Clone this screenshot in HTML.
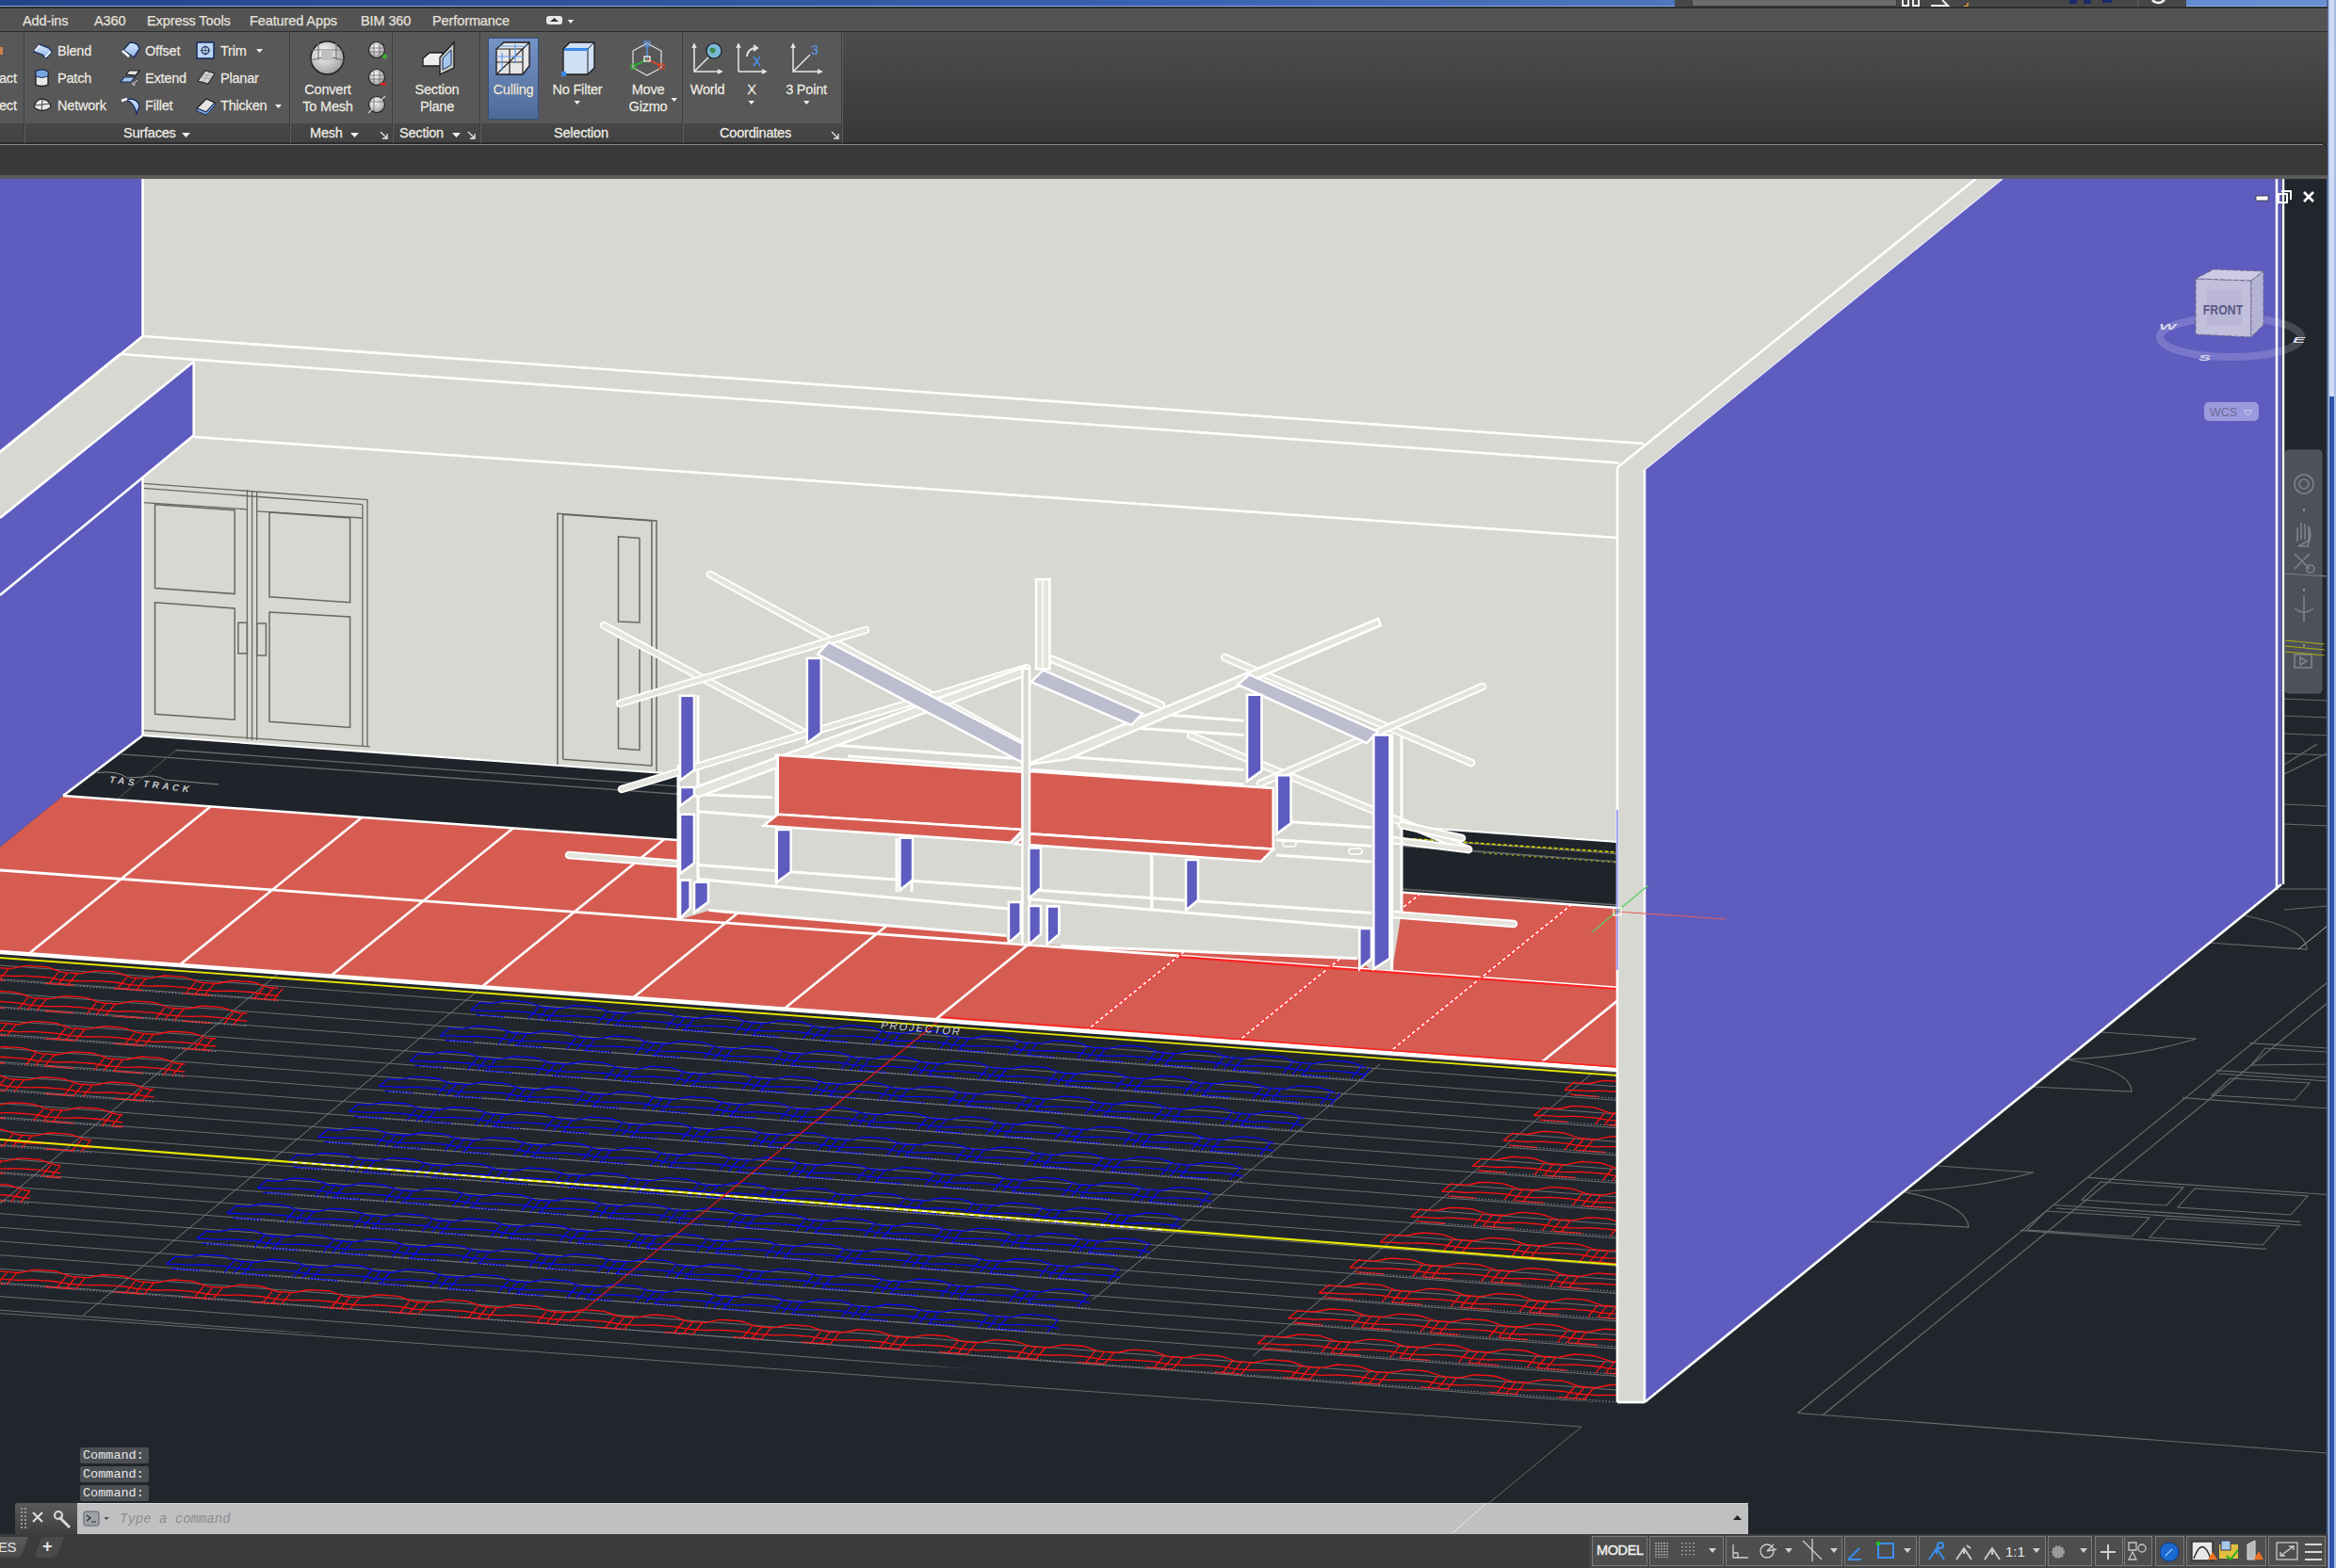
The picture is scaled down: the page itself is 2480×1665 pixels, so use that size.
<!DOCTYPE html>
<html><head><meta charset="utf-8">
<style>
*{margin:0;padding:0;box-sizing:border-box}
html,body{width:2480px;height:1665px;overflow:hidden;background:#21262d;font-family:"Liberation Sans",sans-serif}
.a{position:absolute}
#scene{position:absolute;left:0;top:0}
.mt{position:absolute;top:14px;font-size:14.5px;color:#e6e2da;white-space:nowrap;letter-spacing:-0.1px;-webkit-text-stroke:0.25px #e6e2da}
.rt{position:absolute;font-size:14.5px;color:#f0ede6;white-space:nowrap;letter-spacing:-0.2px;line-height:17px;-webkit-text-stroke:0.3px #f0ede6;text-shadow:0 0 1px #222}
.pt{position:absolute;top:133px;font-size:14.5px;color:#f0ede6;white-space:nowrap;letter-spacing:-0.2px;-webkit-text-stroke:0.3px #f0ede6;text-shadow:0 0 1px #222}
.ctr{text-align:center}
.sep{position:absolute;top:34px;width:2px;height:118px;background:#3e3e3e;border-right:1px solid #5c5c5c}
</style></head><body>
<!--SCENE-->
<svg id="scene" width="2480" height="1665" viewBox="0 0 2480 1665">
<defs>
<clipPath id="cpRed"><polygon points="67,845 1717,964 1717,1136 0,1011 0,899.5"/></clipPath>
<clipPath id="cpFloor"><polygon points="0,1011 1717,1136 1717,1489 1746,1489 2471,895 2471,1629 0,1629"/></clipPath>
<clipPath id="cpHall"><polygon points="0,1011 1717,1136 1717,1490 0,1398"/></clipPath>
<clipPath id="cpVP"><rect x="0" y="190" width="2471" height="1439"/></clipPath>
</defs>
<g clip-path="url(#cpVP)">
<rect x="0" y="190" width="2471" height="1440" fill="#21262d"/>
<g clip-path="url(#cpHall)">
<line x1="0.0" y1="995.7" x2="1717.0" y2="1124.5" stroke="#6e6e6e" stroke-width="1.00" />
<line x1="0.0" y1="1010.4" x2="1717.0" y2="1139.1" stroke="#6e6e6e" stroke-width="1.00" />
<line x1="0.0" y1="1025.0" x2="1717.0" y2="1153.8" stroke="#6e6e6e" stroke-width="1.00" />
<line x1="0.0" y1="1039.7" x2="1717.0" y2="1168.4" stroke="#6e6e6e" stroke-width="1.00" />
<line x1="0.0" y1="1054.3" x2="1717.0" y2="1183.1" stroke="#6e6e6e" stroke-width="1.00" />
<line x1="0.0" y1="1069.0" x2="1717.0" y2="1197.7" stroke="#6e6e6e" stroke-width="1.00" />
<line x1="0.0" y1="1083.6" x2="1717.0" y2="1212.4" stroke="#6e6e6e" stroke-width="1.00" />
<line x1="0.0" y1="1098.2" x2="1717.0" y2="1227.0" stroke="#6e6e6e" stroke-width="1.00" />
<line x1="0.0" y1="1112.9" x2="1717.0" y2="1241.7" stroke="#6e6e6e" stroke-width="1.00" />
<line x1="0.0" y1="1127.5" x2="1717.0" y2="1256.3" stroke="#6e6e6e" stroke-width="1.00" />
<line x1="0.0" y1="1142.2" x2="1717.0" y2="1271.0" stroke="#6e6e6e" stroke-width="1.00" />
<line x1="0.0" y1="1156.8" x2="1717.0" y2="1285.6" stroke="#6e6e6e" stroke-width="1.00" />
<line x1="0.0" y1="1171.5" x2="1717.0" y2="1300.3" stroke="#6e6e6e" stroke-width="1.00" />
<line x1="0.0" y1="1186.2" x2="1717.0" y2="1314.9" stroke="#6e6e6e" stroke-width="1.00" />
<line x1="0.0" y1="1200.8" x2="1717.0" y2="1329.6" stroke="#6e6e6e" stroke-width="1.00" />
<line x1="0.0" y1="1215.5" x2="1717.0" y2="1344.2" stroke="#6e6e6e" stroke-width="1.00" />
<line x1="0.0" y1="1230.1" x2="1717.0" y2="1358.9" stroke="#6e6e6e" stroke-width="1.00" />
<line x1="0.0" y1="1244.8" x2="1717.0" y2="1373.5" stroke="#6e6e6e" stroke-width="1.00" />
<line x1="0.0" y1="1259.4" x2="1717.0" y2="1388.2" stroke="#6e6e6e" stroke-width="1.00" />
<line x1="0.0" y1="1274.0" x2="1717.0" y2="1402.8" stroke="#6e6e6e" stroke-width="1.00" />
<line x1="0.0" y1="1288.7" x2="1717.0" y2="1417.5" stroke="#6e6e6e" stroke-width="1.00" />
<line x1="0.0" y1="1303.3" x2="1717.0" y2="1432.1" stroke="#6e6e6e" stroke-width="1.00" />
<line x1="0.0" y1="1318.0" x2="1717.0" y2="1446.8" stroke="#6e6e6e" stroke-width="1.00" />
<line x1="0.0" y1="1332.7" x2="1717.0" y2="1461.4" stroke="#6e6e6e" stroke-width="1.00" />
<line x1="0.0" y1="1347.3" x2="1717.0" y2="1476.1" stroke="#6e6e6e" stroke-width="1.00" />
<line x1="0.0" y1="1362.0" x2="1717.0" y2="1490.7" stroke="#6e6e6e" stroke-width="1.00" />
<line x1="0.0" y1="1376.6" x2="1717.0" y2="1505.4" stroke="#6e6e6e" stroke-width="1.00" />
<line x1="0.0" y1="1391.2" x2="1717.0" y2="1520.0" stroke="#6e6e6e" stroke-width="1.00" />
<line x1="0.0" y1="1405.9" x2="1717.0" y2="1534.7" stroke="#6e6e6e" stroke-width="1.00" />
<line x1="0.0" y1="1420.5" x2="1717.0" y2="1549.3" stroke="#6e6e6e" stroke-width="1.00" />
<line x1="0.0" y1="1435.2" x2="1717.0" y2="1564.0" stroke="#6e6e6e" stroke-width="1.00" />
<line x1="0.0" y1="1449.8" x2="1717.0" y2="1578.6" stroke="#6e6e6e" stroke-width="1.00" />
<line x1="0.0" y1="1464.5" x2="1717.0" y2="1593.3" stroke="#6e6e6e" stroke-width="1.00" />
<line x1="0.0" y1="1479.2" x2="1717.0" y2="1607.9" stroke="#6e6e6e" stroke-width="1.00" />
<line x1="0.0" y1="1493.8" x2="1717.0" y2="1622.6" stroke="#6e6e6e" stroke-width="1.00" />
<line x1="0.0" y1="1508.5" x2="1717.0" y2="1637.2" stroke="#6e6e6e" stroke-width="1.00" />
<line x1="0.0" y1="1523.1" x2="1717.0" y2="1651.9" stroke="#6e6e6e" stroke-width="1.00" />
<line x1="0.0" y1="1537.8" x2="1717.0" y2="1666.5" stroke="#6e6e6e" stroke-width="1.00" />
<line x1="0.0" y1="1552.4" x2="1717.0" y2="1681.2" stroke="#6e6e6e" stroke-width="1.00" />
<line x1="0.0" y1="1567.1" x2="1717.0" y2="1695.8" stroke="#6e6e6e" stroke-width="1.00" />
<line x1="0.0" y1="1581.7" x2="1717.0" y2="1710.5" stroke="#6e6e6e" stroke-width="1.00" />
<line x1="0.0" y1="1596.3" x2="1717.0" y2="1725.1" stroke="#6e6e6e" stroke-width="1.00" />
<line x1="0.0" y1="1611.0" x2="1717.0" y2="1739.8" stroke="#6e6e6e" stroke-width="1.00" />
<line x1="0.0" y1="1625.7" x2="1717.0" y2="1754.4" stroke="#6e6e6e" stroke-width="1.00" />
<line x1="0.0" y1="1640.3" x2="1717.0" y2="1769.1" stroke="#6e6e6e" stroke-width="1.00" />
<line x1="0.0" y1="1655.0" x2="1717.0" y2="1783.7" stroke="#6e6e6e" stroke-width="1.00" />
<line x1="0.0" y1="1669.6" x2="1717.0" y2="1798.4" stroke="#6e6e6e" stroke-width="1.00" />
<line x1="0.0" y1="1684.2" x2="1717.0" y2="1813.0" stroke="#6e6e6e" stroke-width="1.00" />
<line x1="0.0" y1="1698.9" x2="1717.0" y2="1827.7" stroke="#6e6e6e" stroke-width="1.00" />
<line x1="0.0" y1="1713.6" x2="1717.0" y2="1842.3" stroke="#6e6e6e" stroke-width="1.00" />
<line x1="0.0" y1="1728.2" x2="1717.0" y2="1857.0" stroke="#6e6e6e" stroke-width="1.00" />
<line x1="0.0" y1="1742.8" x2="1717.0" y2="1871.6" stroke="#6e6e6e" stroke-width="1.00" />
<line x1="0.0" y1="1757.5" x2="1717.0" y2="1886.3" stroke="#6e6e6e" stroke-width="1.00" />
<line x1="0.0" y1="1772.2" x2="1717.0" y2="1900.9" stroke="#6e6e6e" stroke-width="1.00" />
<line x1="0.0" y1="1786.8" x2="1717.0" y2="1915.6" stroke="#6e6e6e" stroke-width="1.00" />
<line x1="0.0" y1="1801.5" x2="1717.0" y2="1930.2" stroke="#6e6e6e" stroke-width="1.00" />
<line x1="0.0" y1="1816.1" x2="1717.0" y2="1944.9" stroke="#6e6e6e" stroke-width="1.00" />
<line x1="0.0" y1="1830.8" x2="1717.0" y2="1959.5" stroke="#6e6e6e" stroke-width="1.00" />
<line x1="0.0" y1="1845.4" x2="1717.0" y2="1974.2" stroke="#6e6e6e" stroke-width="1.00" />
<line x1="0.0" y1="1860.1" x2="1717.0" y2="1988.8" stroke="#6e6e6e" stroke-width="1.00" />
<line x1="0.0" y1="1874.7" x2="1717.0" y2="2003.5" stroke="#6e6e6e" stroke-width="1.00" />
<line x1="0.0" y1="1889.3" x2="1717.0" y2="2018.1" stroke="#6e6e6e" stroke-width="1.00" />
<line x1="300.0" y1="1030.0" x2="0.0" y2="1278.0" stroke="#7a7a7a" stroke-width="1.00" />
<line x1="507.0" y1="1052.0" x2="88.0" y2="1397.0" stroke="#7a7a7a" stroke-width="1.00" />
<line x1="1465.0" y1="1130.0" x2="1160.0" y2="1380.0" stroke="#7a7a7a" stroke-width="1.00" />
<line x1="1690.0" y1="1140.0" x2="1330.0" y2="1440.0" stroke="#7a7a7a" stroke-width="1.00" />
<path d="M-20.0,1022.5 L-15.0,1024.2 L-10.0,1026.0 L-5.0,1027.3 L0.0,1027.7 L5.0,1028.1 L10.0,1028.4 L15.0,1027.9 L20.0,1026.9 L25.0,1025.9 L30.0,1025.4 L35.0,1025.8 L40.0,1026.1 L45.0,1026.5 L50.0,1026.8 L55.0,1028.6 L60.0,1030.3 L65.0,1032.1 L70.0,1032.8 L75.0,1033.2 L80.0,1033.5 L85.0,1033.8 L90.0,1032.8 L95.0,1031.8 L100.0,1030.8 L105.0,1030.9 L110.0,1031.2 L115.0,1031.6 L120.0,1031.9 L125.0,1032.9 L130.0,1034.6 L135.0,1036.4 L140.0,1037.9 L145.0,1038.3 L150.0,1038.6 L155.0,1039.0 L160.0,1038.6 L165.0,1037.6 L170.0,1036.6 L175.0,1036.0 L180.0,1036.3 L185.0,1036.7 L190.0,1037.1 L195.0,1037.4 L200.0,1039.0 L205.0,1040.7 L210.0,1042.5 L215.0,1043.4 L220.0,1043.7 L225.0,1044.1 L230.0,1044.5 L235.0,1043.5 L240.0,1042.5 L245.0,1041.5 L250.0,1041.4 L255.0,1041.8 L260.0,1042.2 L265.0,1042.5 L270.0,1043.3 L275.0,1045.1 L280.0,1046.8 L285.0,1048.5 L290.0,1048.8 L295.0,1049.2 L295.4,1049.2 M-31.0,1034.2 L-20.0,1033.0 L-15.0,1033.8 L-10.0,1034.6 L-5.0,1035.3 L0.0,1035.7 L5.0,1036.1 L10.0,1036.4 L15.0,1036.5 L20.0,1036.4 L25.0,1036.3 L30.0,1036.4 L35.0,1036.8 L40.0,1037.1 L45.0,1037.5 L50.0,1037.8 L55.0,1038.7 L60.0,1039.5 L65.0,1040.3 L70.0,1040.8 L75.0,1041.2 L80.0,1041.5 L85.0,1041.9 L90.0,1041.8 L95.0,1041.7 L100.0,1041.6 L105.0,1041.9 L110.0,1042.2 L115.0,1042.6 L120.0,1042.9 L125.0,1043.5 L130.0,1044.3 L135.0,1045.2 L140.0,1045.9 L145.0,1046.3 L150.0,1046.6 L155.0,1047.0 L160.0,1047.1 L165.0,1047.0 L170.0,1046.9 L175.0,1047.0 L180.0,1047.3 L185.0,1047.7 L190.0,1048.1 L195.0,1048.4 L200.0,1049.2 L205.0,1050.0 L210.0,1050.8 L215.0,1051.4 L220.0,1051.7 L225.0,1052.1 L230.0,1052.5 L235.0,1052.4 L240.0,1052.3 L245.0,1052.2 L250.0,1052.4 L255.0,1052.8 L260.0,1053.2 L265.0,1053.5 L270.0,1054.0 L275.0,1054.9 L280.0,1055.7 L285.0,1056.5 L290.0,1056.8 L295.0,1057.2 L295.4,1057.2 M-25.0,1038.9 L5.0,1041.1 M48.0,1044.2 L78.0,1046.4 M121.0,1049.5 L151.0,1051.7 M194.0,1054.8 L224.0,1057.0 M267.0,1060.2 L295.4,1062.2 M-31.0,1034.2 L-20.0,1025.2 M-21.4,1039.5 L-10.9,1027.0 M-11.4,1040.2 L-0.9,1027.7 M-1.4,1041.0 L9.1,1028.5 M51.4,1044.8 L61.9,1032.3 M61.4,1045.5 L71.9,1033.0 M71.4,1046.3 L81.9,1033.8 M124.2,1050.1 L134.7,1037.6 M134.2,1050.8 L144.7,1038.3 M144.2,1051.6 L154.7,1039.1 M197.0,1055.4 L207.5,1042.9 M207.0,1056.2 L217.5,1043.7 M217.0,1056.9 L227.5,1044.4 M269.8,1060.7 L280.3,1048.2 M279.8,1061.5 L290.3,1049.0 M289.8,1062.2 L300.3,1049.7" stroke="#ff1010" stroke-width="1.30" fill="none" stroke-linejoin="round"/>
<path d="M-20.0,1039.7 L295.4,1062.7" stroke="#8a8a9a" stroke-width="1.00" fill="none" stroke-dasharray="1.5 2"/>
<path d="M-20.0,1055.4 L-15.0,1054.4 L-10.0,1053.4 L-5.0,1052.4 L0.0,1052.5 L5.0,1052.9 L10.0,1053.2 L15.0,1053.6 L20.0,1054.6 L25.0,1056.3 L30.0,1058.1 L35.0,1059.6 L40.0,1059.9 L45.0,1060.3 L50.0,1060.6 L55.0,1060.3 L60.0,1059.3 L65.0,1058.2 L70.0,1057.6 L75.0,1058.0 L80.0,1058.3 L85.0,1058.7 L90.0,1059.1 L95.0,1060.7 L100.0,1062.4 L105.0,1064.1 L110.0,1065.0 L115.0,1065.4 L120.0,1065.7 L125.0,1066.1 L130.0,1065.1 L135.0,1064.1 L140.0,1063.1 L145.0,1063.1 L150.0,1063.4 L155.0,1063.8 L160.0,1064.2 L165.0,1065.0 L170.0,1066.7 L175.0,1068.5 L180.0,1070.1 L185.0,1070.5 L190.0,1070.9 L195.0,1071.2 L200.0,1071.0 L205.0,1070.0 L210.0,1069.0 L215.0,1068.2 L220.0,1068.5 L225.0,1068.9 L230.0,1069.3 L235.0,1069.6 L240.0,1071.1 L245.0,1072.8 L250.0,1074.5 L255.0,1075.6 L260.0,1076.0 L262.4,1076.1 M-31.0,1063.5 L-20.0,1063.5 L-15.0,1063.4 L-10.0,1063.3 L-5.0,1063.2 L0.0,1063.5 L5.0,1063.9 L10.0,1064.2 L15.0,1064.6 L20.0,1065.2 L25.0,1066.0 L30.0,1066.8 L35.0,1067.6 L40.0,1067.9 L45.0,1068.3 L50.0,1068.6 L55.0,1068.8 L60.0,1068.7 L65.0,1068.6 L70.0,1068.6 L75.0,1069.0 L80.0,1069.3 L85.0,1069.7 L90.0,1070.1 L95.0,1070.8 L100.0,1071.7 L105.0,1072.5 L110.0,1073.0 L115.0,1073.4 L120.0,1073.7 L125.0,1074.1 L130.0,1074.0 L135.0,1073.9 L140.0,1073.8 L145.0,1074.1 L150.0,1074.4 L155.0,1074.8 L160.0,1075.2 L165.0,1075.7 L170.0,1076.5 L175.0,1077.3 L180.0,1078.1 L185.0,1078.5 L190.0,1078.9 L195.0,1079.2 L200.0,1079.4 L205.0,1079.3 L210.0,1079.2 L215.0,1079.2 L220.0,1079.5 L225.0,1079.9 L230.0,1080.3 L235.0,1080.6 L240.0,1081.4 L245.0,1082.2 L250.0,1083.0 L255.0,1083.6 L260.0,1084.0 L262.4,1084.1 M-25.0,1068.2 L5.0,1070.4 M48.0,1073.5 L78.0,1075.7 M121.0,1078.8 L151.0,1081.0 M194.0,1084.1 L224.0,1086.3 M-31.0,1063.5 L-20.0,1054.5 M19.1,1071.8 L29.6,1059.3 M29.1,1072.5 L39.6,1060.0 M39.1,1073.2 L49.6,1060.7 M91.9,1077.1 L102.4,1064.6 M101.9,1077.8 L112.4,1065.3 M111.9,1078.5 L122.4,1066.0 M164.7,1082.4 L175.2,1069.9 M174.7,1083.1 L185.2,1070.6 M184.7,1083.8 L195.2,1071.3 M237.5,1087.7 L248.0,1075.2 M247.5,1088.4 L258.0,1075.9" stroke="#ff1010" stroke-width="1.30" fill="none" stroke-linejoin="round"/>
<path d="M-20.0,1069.0 L262.4,1089.6" stroke="#8a8a9a" stroke-width="1.00" fill="none" stroke-dasharray="1.5 2"/>
<path d="M-20.0,1080.3 L-15.0,1080.7 L-10.0,1082.3 L-5.0,1084.1 L0.0,1085.8 L5.0,1086.7 L10.0,1087.0 L15.0,1087.4 L20.0,1087.8 L25.0,1086.7 L30.0,1085.7 L35.0,1084.7 L40.0,1084.7 L45.0,1085.1 L50.0,1085.4 L55.0,1085.8 L60.0,1086.7 L65.0,1088.4 L70.0,1090.1 L75.0,1091.8 L80.0,1092.1 L85.0,1092.5 L90.0,1092.9 L95.0,1092.6 L100.0,1091.6 L105.0,1090.6 L110.0,1089.8 L115.0,1090.2 L120.0,1090.5 L125.0,1090.9 L130.0,1091.3 L135.0,1092.7 L140.0,1094.5 L145.0,1096.2 L150.0,1097.2 L155.0,1097.6 L160.0,1098.0 L165.0,1098.3 L170.0,1097.5 L175.0,1096.5 L180.0,1095.5 L185.0,1095.3 L190.0,1095.7 L195.0,1096.0 L200.0,1096.4 L205.0,1097.1 L210.0,1098.8 L215.0,1100.5 L220.0,1102.3 L225.0,1102.7 L229.4,1103.0 M-31.0,1092.8 L-20.0,1091.3 L-15.0,1091.7 L-10.0,1092.5 L-5.0,1093.3 L0.0,1094.1 L5.0,1094.7 L10.0,1095.0 L15.0,1095.4 L20.0,1095.8 L25.0,1095.7 L30.0,1095.6 L35.0,1095.5 L40.0,1095.7 L45.0,1096.1 L50.0,1096.4 L55.0,1096.8 L60.0,1097.3 L65.0,1098.2 L70.0,1099.0 L75.0,1099.8 L80.0,1100.1 L85.0,1100.5 L90.0,1100.9 L95.0,1101.0 L100.0,1100.9 L105.0,1100.8 L110.0,1100.8 L115.0,1101.2 L120.0,1101.5 L125.0,1101.9 L130.0,1102.3 L135.0,1103.0 L140.0,1103.8 L145.0,1104.7 L150.0,1105.2 L155.0,1105.6 L160.0,1106.0 L165.0,1106.3 L170.0,1106.3 L175.0,1106.2 L180.0,1106.1 L185.0,1106.3 L190.0,1106.7 L195.0,1107.0 L200.0,1107.4 L205.0,1107.9 L210.0,1108.7 L215.0,1109.5 L220.0,1110.3 L225.0,1110.7 L229.4,1111.0 M-25.0,1097.5 L5.0,1099.7 M48.0,1102.8 L78.0,1105.0 M121.0,1108.1 L151.0,1110.3 M194.0,1113.4 L224.0,1115.6 M-31.0,1092.8 L-20.0,1083.8 M-13.2,1098.7 L-2.7,1086.2 M-3.2,1099.4 L7.3,1086.9 M6.8,1100.2 L17.3,1087.7 M59.6,1104.0 L70.1,1091.5 M69.6,1104.7 L80.1,1092.2 M79.6,1105.5 L90.1,1093.0 M132.4,1109.3 L142.9,1096.8 M142.4,1110.0 L152.9,1097.5 M152.4,1110.8 L162.9,1098.3 M205.2,1114.6 L215.7,1102.1 M215.2,1115.4 L225.7,1102.9" stroke="#ff1010" stroke-width="1.30" fill="none" stroke-linejoin="round"/>
<path d="M-20.0,1098.3 L229.4,1116.5" stroke="#8a8a9a" stroke-width="1.00" fill="none" stroke-dasharray="1.5 2"/>
<path d="M-20.0,1114.1 L-15.0,1114.5 L-10.0,1114.2 L-5.0,1113.2 L0.0,1112.2 L5.0,1111.5 L10.0,1111.8 L15.0,1112.2 L20.0,1112.6 L25.0,1112.9 L30.0,1114.4 L35.0,1116.1 L40.0,1117.9 L45.0,1118.9 L50.0,1119.2 L55.0,1119.6 L60.0,1120.0 L65.0,1119.1 L70.0,1118.1 L75.0,1117.1 L80.0,1116.9 L85.0,1117.3 L90.0,1117.7 L95.0,1118.0 L100.0,1118.7 L105.0,1120.5 L110.0,1122.2 L115.0,1124.0 L120.0,1124.3 L125.0,1124.7 L130.0,1125.1 L135.0,1125.0 L140.0,1124.0 L145.0,1123.0 L150.0,1122.0 L155.0,1122.4 L160.0,1122.8 L165.0,1123.1 L170.0,1123.5 L175.0,1124.8 L180.0,1126.6 L185.0,1128.3 L190.0,1129.5 L195.0,1129.8 L196.4,1129.9 M-31.0,1122.1 L-20.0,1122.1 L-15.0,1122.5 L-10.0,1122.7 L-5.0,1122.6 L0.0,1122.5 L5.0,1122.5 L10.0,1122.8 L15.0,1123.2 L20.0,1123.6 L25.0,1123.9 L30.0,1124.7 L35.0,1125.5 L40.0,1126.3 L45.0,1126.9 L50.0,1127.2 L55.0,1127.6 L60.0,1128.0 L65.0,1127.9 L70.0,1127.8 L75.0,1127.7 L80.0,1127.9 L85.0,1128.3 L90.0,1128.7 L95.0,1129.0 L100.0,1129.5 L105.0,1130.3 L110.0,1131.2 L115.0,1132.0 L120.0,1132.3 L125.0,1132.7 L130.0,1133.1 L135.0,1133.3 L140.0,1133.2 L145.0,1133.1 L150.0,1133.0 L155.0,1133.4 L160.0,1133.8 L165.0,1134.1 L170.0,1134.5 L175.0,1135.2 L180.0,1136.0 L185.0,1136.8 L190.0,1137.5 L195.0,1137.8 L196.4,1137.9 M-25.0,1126.8 L5.0,1129.0 M48.0,1132.1 L78.0,1134.3 M121.0,1137.4 L151.0,1139.6 M194.0,1142.7 L196.4,1142.9 M-31.0,1122.1 L-20.0,1113.1 M27.3,1131.0 L37.8,1118.5 M37.3,1131.7 L47.8,1119.2 M47.3,1132.4 L57.8,1119.9 M100.1,1136.3 L110.6,1123.8 M110.1,1137.0 L120.6,1124.5 M120.1,1137.7 L130.6,1125.2 M172.9,1141.6 L183.4,1129.1 M182.9,1142.3 L193.4,1129.8" stroke="#ff1010" stroke-width="1.30" fill="none" stroke-linejoin="round"/>
<path d="M-20.0,1127.6 L196.4,1143.4" stroke="#8a8a9a" stroke-width="1.00" fill="none" stroke-dasharray="1.5 2"/>
<path d="M-20.0,1138.9 L-15.0,1139.3 L-10.0,1139.7 L-5.0,1140.4 L0.0,1142.2 L5.0,1143.9 L10.0,1145.6 L15.0,1146.0 L20.0,1146.4 L25.0,1146.7 L30.0,1146.6 L35.0,1145.6 L40.0,1144.6 L45.0,1143.7 L50.0,1144.0 L55.0,1144.4 L60.0,1144.8 L65.0,1145.1 L70.0,1146.5 L75.0,1148.2 L80.0,1150.0 L85.0,1151.1 L90.0,1151.5 L95.0,1151.8 L100.0,1152.2 L105.0,1151.5 L110.0,1150.4 L115.0,1149.4 L120.0,1149.1 L125.0,1149.5 L130.0,1149.9 L135.0,1150.2 L140.0,1150.8 L145.0,1152.6 L150.0,1154.3 L155.0,1156.0 L160.0,1156.6 L163.4,1156.8 M-31.0,1151.4 L-20.0,1149.9 L-15.0,1150.3 L-10.0,1150.7 L-5.0,1151.2 L0.0,1152.0 L5.0,1152.8 L10.0,1153.6 L15.0,1154.0 L20.0,1154.4 L25.0,1154.7 L30.0,1154.9 L35.0,1154.8 L40.0,1154.7 L45.0,1154.7 L50.0,1155.0 L55.0,1155.4 L60.0,1155.8 L65.0,1156.1 L70.0,1156.8 L75.0,1157.7 L80.0,1158.5 L85.0,1159.1 L90.0,1159.5 L95.0,1159.8 L100.0,1160.2 L105.0,1160.2 L110.0,1160.1 L115.0,1160.0 L120.0,1160.1 L125.0,1160.5 L130.0,1160.9 L135.0,1161.2 L140.0,1161.7 L145.0,1162.5 L150.0,1163.3 L155.0,1164.1 L160.0,1164.6 L163.4,1164.8 M-25.0,1156.1 L5.0,1158.3 M48.0,1161.4 L78.0,1163.6 M121.0,1166.7 L151.0,1168.9 M-31.0,1151.4 L-20.0,1142.4 M-5.0,1157.9 L5.5,1145.4 M5.0,1158.6 L15.5,1146.1 M15.0,1159.4 L25.5,1146.9 M67.8,1163.2 L78.3,1150.7 M77.8,1163.9 L88.3,1151.4 M87.8,1164.7 L98.3,1152.2 M140.6,1168.5 L151.1,1156.0 M150.6,1169.2 L161.1,1156.7" stroke="#ff1010" stroke-width="1.30" fill="none" stroke-linejoin="round"/>
<path d="M-20.0,1156.9 L163.4,1170.3" stroke="#8a8a9a" stroke-width="1.00" fill="none" stroke-dasharray="1.5 2"/>
<path d="M-20.0,1172.7 L-15.0,1173.1 L-10.0,1173.5 L-5.0,1173.8 L0.0,1173.1 L5.0,1172.1 L10.0,1171.1 L15.0,1170.8 L20.0,1171.2 L25.0,1171.5 L30.0,1171.9 L35.0,1172.5 L40.0,1174.2 L45.0,1176.0 L50.0,1177.7 L55.0,1178.2 L60.0,1178.6 L65.0,1178.9 L70.0,1178.9 L75.0,1177.9 L80.0,1176.9 L85.0,1175.9 L90.0,1176.3 L95.0,1176.6 L100.0,1177.0 L105.0,1177.4 L110.0,1178.6 L115.0,1180.3 L120.0,1182.0 L125.0,1183.3 L130.0,1183.7 L130.4,1183.7 M-31.0,1180.7 L-20.0,1180.7 L-15.0,1181.1 L-10.0,1181.5 L-5.0,1181.8 L0.0,1181.8 L5.0,1181.7 L10.0,1181.6 L15.0,1181.8 L20.0,1182.2 L25.0,1182.5 L30.0,1182.9 L35.0,1183.3 L40.0,1184.2 L45.0,1185.0 L50.0,1185.8 L55.0,1186.2 L60.0,1186.6 L65.0,1186.9 L70.0,1187.2 L75.0,1187.1 L80.0,1187.0 L85.0,1186.9 L90.0,1187.3 L95.0,1187.6 L100.0,1188.0 L105.0,1188.4 L110.0,1189.0 L115.0,1189.8 L120.0,1190.6 L125.0,1191.3 L130.0,1191.7 L130.4,1191.7 M-25.0,1185.4 L5.0,1187.6 M48.0,1190.7 L78.0,1192.9 M121.0,1196.0 L130.4,1196.7 M-31.0,1180.7 L-20.0,1171.7 M35.5,1190.2 L46.0,1177.7 M45.5,1190.9 L56.0,1178.4 M55.5,1191.6 L66.0,1179.1 M108.3,1195.5 L118.8,1183.0 M118.3,1196.2 L128.8,1183.7" stroke="#ff1010" stroke-width="1.30" fill="none" stroke-linejoin="round"/>
<path d="M-20.0,1186.2 L130.4,1197.2" stroke="#8a8a9a" stroke-width="1.00" fill="none" stroke-dasharray="1.5 2"/>
<path d="M-20.0,1197.5 L-15.0,1197.9 L-10.0,1198.3 L-5.0,1198.6 L0.0,1199.0 L5.0,1200.2 L10.0,1202.0 L15.0,1203.7 L20.0,1205.0 L25.0,1205.3 L30.0,1205.7 L35.0,1206.1 L40.0,1205.4 L45.0,1204.4 L50.0,1203.4 L55.0,1203.0 L60.0,1203.4 L65.0,1203.7 L70.0,1204.1 L75.0,1204.6 L80.0,1206.3 L85.0,1208.0 L90.0,1209.8 L95.0,1210.4 L97.4,1210.6 M-31.0,1210.0 L-20.0,1208.5 L-15.0,1208.9 L-10.0,1209.3 L-5.0,1209.6 L0.0,1210.0 L5.0,1210.7 L10.0,1211.5 L15.0,1212.3 L20.0,1213.0 L25.0,1213.3 L30.0,1213.7 L35.0,1214.1 L40.0,1214.1 L45.0,1214.0 L50.0,1213.9 L55.0,1214.0 L60.0,1214.4 L65.0,1214.7 L70.0,1215.1 L75.0,1215.5 L80.0,1216.3 L85.0,1217.1 L90.0,1218.0 L95.0,1218.4 L97.4,1218.6 M-25.0,1214.7 L5.0,1216.9 M48.0,1220.0 L78.0,1222.2 M-31.0,1210.0 L-20.0,1201.0 M3.2,1217.1 L13.7,1204.6 M13.2,1217.8 L23.7,1205.3 M23.2,1218.6 L33.7,1206.1 M76.0,1222.4 L86.5,1209.9 M86.0,1223.1 L96.5,1210.6" stroke="#ff1010" stroke-width="1.30" fill="none" stroke-linejoin="round"/>
<path d="M-20.0,1215.5 L97.4,1224.1" stroke="#8a8a9a" stroke-width="1.00" fill="none" stroke-dasharray="1.5 2"/>
<path d="M-20.0,1229.7 L-15.0,1231.5 L-10.0,1232.1 L-5.0,1232.4 L0.0,1232.8 L5.0,1232.9 L10.0,1231.9 L15.0,1230.9 L20.0,1229.9 L25.0,1230.1 L30.0,1230.5 L35.0,1230.9 L40.0,1231.2 L45.0,1232.3 L50.0,1234.1 L55.0,1235.8 L60.0,1237.2 L64.4,1237.5 M-31.0,1239.3 L-20.0,1238.8 L-15.0,1239.6 L-10.0,1240.1 L-5.0,1240.4 L0.0,1240.8 L5.0,1241.1 L10.0,1241.0 L15.0,1240.9 L20.0,1240.8 L25.0,1241.1 L30.0,1241.5 L35.0,1241.9 L40.0,1242.2 L45.0,1242.8 L50.0,1243.6 L55.0,1244.5 L60.0,1245.2 L64.4,1245.5 M-25.0,1244.0 L5.0,1246.2 M48.0,1249.3 L64.4,1250.5 M-31.0,1239.3 L-20.0,1230.3 M-19.1,1244.8 L-8.6,1232.3 M-9.1,1245.5 L1.4,1233.0 M43.7,1249.4 L54.2,1236.9 M53.7,1250.1 L64.2,1237.6" stroke="#ff1010" stroke-width="1.30" fill="none" stroke-linejoin="round"/>
<path d="M-20.0,1244.8 L64.4,1251.0" stroke="#8a8a9a" stroke-width="1.00" fill="none" stroke-dasharray="1.5 2"/>
<path d="M-20.0,1258.4 L-15.0,1257.4 L-10.0,1256.9 L-5.0,1257.2 L0.0,1257.6 L5.0,1258.0 L10.0,1258.3 L15.0,1260.1 L20.0,1261.8 L25.0,1263.5 L30.0,1264.3 L31.4,1264.4 M-31.0,1268.6 L-20.0,1267.9 L-15.0,1267.8 L-10.0,1267.9 L-5.0,1268.2 L0.0,1268.6 L5.0,1269.0 L10.0,1269.3 L15.0,1270.1 L20.0,1271.0 L25.0,1271.8 L30.0,1272.3 L31.4,1272.4 M-25.0,1273.3 L5.0,1275.5 M-31.0,1268.6 L-20.0,1259.6 M11.4,1276.3 L21.9,1263.8 M21.4,1277.0 L31.9,1264.5" stroke="#ff1010" stroke-width="1.30" fill="none" stroke-linejoin="round"/>
<path d="M-20.0,1274.1 L31.4,1277.9" stroke="#8a8a9a" stroke-width="1.00" fill="none" stroke-dasharray="1.5 2"/>
<path d="M510.4,1064.9 L515.4,1065.3 L520.4,1065.6 L525.4,1064.9 L530.4,1063.9 L535.4,1062.9 L540.4,1062.6 L545.4,1063.0 L550.4,1063.3 L555.4,1063.7 L560.4,1064.3 L565.4,1066.0 L570.4,1067.7 L575.4,1069.5 L580.4,1070.0 L585.4,1070.4 L590.4,1070.7 L595.4,1070.8 L600.4,1069.8 L605.4,1068.8 L610.4,1067.7 L615.4,1068.1 L620.4,1068.4 L625.4,1068.8 L630.4,1069.2 L635.4,1070.3 L640.4,1072.1 L645.4,1073.8 L650.4,1075.1 L655.4,1075.5 L660.4,1075.8 L665.4,1076.2 L670.4,1075.6 L675.4,1074.6 L680.4,1073.6 L685.4,1073.2 L690.4,1073.5 L695.4,1073.9 L700.4,1074.3 L705.4,1074.7 L710.4,1076.4 L715.4,1078.1 L720.4,1079.9 L725.4,1080.6 L730.4,1080.9 L735.4,1081.3 L740.4,1081.5 L745.4,1080.5 L750.4,1079.5 L755.4,1078.5 L760.4,1078.6 L765.4,1079.0 L770.4,1079.4 L775.4,1079.7 L780.4,1080.7 L785.4,1082.5 L790.4,1084.2 L795.4,1085.7 L800.4,1086.0 L805.4,1086.4 L810.4,1086.8 L815.4,1086.4 L820.4,1085.4 L825.4,1084.4 L830.4,1083.7 L835.4,1084.1 L840.4,1084.5 L845.4,1084.8 L850.4,1085.2 L855.4,1086.8 L860.4,1088.6 L865.4,1090.3 L870.4,1091.2 L875.4,1091.5 L880.4,1091.9 L885.4,1092.2 L890.4,1091.2 L895.4,1090.2 L900.4,1089.2 L905.4,1089.2 L910.4,1089.6 L915.4,1089.9 L920.4,1090.3 L925.4,1091.2 L930.4,1092.9 L935.4,1094.6 L940.4,1096.3 L945.4,1096.6 L950.4,1097.0 L955.4,1097.3 L960.4,1097.1 L965.4,1096.1 L970.4,1095.1 L975.4,1094.3 L980.4,1094.7 L985.4,1095.0 L990.4,1095.4 L995.4,1095.8 L1000.4,1097.2 L1005.4,1099.0 L1010.4,1100.7 L1015.4,1101.7 L1020.4,1102.1 L1025.4,1102.5 L1030.4,1102.8 L1035.4,1102.0 L1040.4,1101.0 L1045.4,1100.0 L1050.4,1099.8 L1055.4,1100.1 L1060.4,1100.5 L1065.4,1100.9 L1070.4,1101.6 L1075.4,1103.3 L1080.4,1105.0 L1085.4,1106.8 L1090.4,1107.2 L1095.4,1107.6 L1100.4,1107.9 L1105.4,1107.8 L1110.4,1106.8 L1115.4,1105.8 L1120.4,1104.9 L1125.4,1105.2 L1130.4,1105.6 L1135.4,1106.0 L1140.4,1106.3 L1145.4,1107.6 L1150.4,1109.4 L1155.4,1111.1 L1160.4,1112.3 L1165.4,1112.7 L1170.4,1113.0 L1175.4,1113.4 L1180.4,1112.7 L1185.4,1111.7 L1190.4,1110.7 L1195.4,1110.3 L1200.4,1110.7 L1205.4,1111.1 L1210.4,1111.4 L1215.4,1112.0 L1220.4,1113.7 L1225.4,1115.4 L1230.4,1117.2 L1235.4,1117.8 L1240.4,1118.1 L1245.4,1118.5 L1250.4,1118.6 L1255.4,1117.6 L1260.4,1116.6 L1265.4,1115.6 L1270.4,1115.8 L1275.4,1116.2 L1280.4,1116.5 L1285.4,1116.9 L1290.4,1118.0 L1295.4,1119.8 L1300.4,1121.5 L1305.4,1122.9 L1310.4,1123.2 L1315.4,1123.6 L1320.4,1124.0 L1325.4,1123.4 L1330.4,1122.4 L1335.4,1121.4 L1340.4,1120.9 L1345.4,1121.3 L1350.4,1121.6 L1355.4,1122.0 L1360.4,1122.4 L1365.4,1124.1 L1370.4,1125.8 L1375.4,1127.6 L1380.4,1128.3 L1385.4,1128.7 L1390.4,1129.1 L1395.4,1129.3 L1400.4,1128.3 L1405.4,1127.3 L1410.4,1126.3 L1415.4,1126.4 L1420.4,1126.7 L1425.4,1127.1 L1430.4,1127.5 L1435.4,1128.4 L1440.4,1130.2 L1445.4,1131.9 L1450.0,1133.4 M499.4,1072.9 L510.4,1072.9 L515.4,1073.3 L520.4,1073.6 L525.4,1073.6 L530.4,1073.5 L535.4,1073.4 L540.4,1073.6 L545.4,1074.0 L550.4,1074.3 L555.4,1074.7 L560.4,1075.1 L565.4,1075.9 L570.4,1076.8 L575.4,1077.6 L580.4,1078.0 L585.4,1078.4 L590.4,1078.7 L595.4,1079.0 L600.4,1078.9 L605.4,1078.8 L610.4,1078.7 L615.4,1079.1 L620.4,1079.4 L625.4,1079.8 L630.4,1080.2 L635.4,1080.8 L640.4,1081.6 L645.4,1082.4 L650.4,1083.1 L655.4,1083.5 L660.4,1083.8 L665.4,1084.2 L670.4,1084.3 L675.4,1084.2 L680.4,1084.1 L685.4,1084.2 L690.4,1084.5 L695.4,1084.9 L700.4,1085.3 L705.4,1085.6 L710.4,1086.5 L715.4,1087.3 L720.4,1088.1 L725.4,1088.6 L730.4,1088.9 L735.4,1089.3 L740.4,1089.6 L745.4,1089.5 L750.4,1089.4 L755.4,1089.3 L760.4,1089.6 L765.4,1090.0 L770.4,1090.4 L775.4,1090.7 L780.4,1091.3 L785.4,1092.1 L790.4,1093.0 L795.4,1093.7 L800.4,1094.0 L805.4,1094.4 L810.4,1094.8 L815.4,1094.9 L820.4,1094.8 L825.4,1094.7 L830.4,1094.7 L835.4,1095.1 L840.4,1095.5 L845.4,1095.8 L850.4,1096.2 L855.4,1097.0 L860.4,1097.8 L865.4,1098.6 L870.4,1099.2 L875.4,1099.5 L880.4,1099.9 L885.4,1100.2 L890.4,1100.2 L895.4,1100.1 L900.4,1100.0 L905.4,1100.2 L910.4,1100.6 L915.4,1100.9 L920.4,1101.3 L925.4,1101.8 L930.4,1102.6 L935.4,1103.5 L940.4,1104.3 L945.4,1104.6 L950.4,1105.0 L955.4,1105.3 L960.4,1105.5 L965.4,1105.4 L970.4,1105.3 L975.4,1105.3 L980.4,1105.7 L985.4,1106.0 L990.4,1106.4 L995.4,1106.8 L1000.4,1107.5 L1005.4,1108.3 L1010.4,1109.1 L1015.4,1109.7 L1020.4,1110.1 L1025.4,1110.5 L1030.4,1110.8 L1035.4,1110.8 L1040.4,1110.7 L1045.4,1110.6 L1050.4,1110.8 L1055.4,1111.1 L1060.4,1111.5 L1065.4,1111.9 L1070.4,1112.3 L1075.4,1113.2 L1080.4,1114.0 L1085.4,1114.8 L1090.4,1115.2 L1095.4,1115.6 L1100.4,1115.9 L1105.4,1116.1 L1110.4,1116.0 L1115.4,1116.0 L1120.4,1115.9 L1125.4,1116.2 L1130.4,1116.6 L1135.4,1117.0 L1140.4,1117.3 L1145.4,1118.0 L1150.4,1118.8 L1155.4,1119.7 L1160.4,1120.3 L1165.4,1120.7 L1170.4,1121.0 L1175.4,1121.4 L1180.4,1121.4 L1185.4,1121.3 L1190.4,1121.2 L1195.4,1121.3 L1200.4,1121.7 L1205.4,1122.1 L1210.4,1122.4 L1215.4,1122.9 L1220.4,1123.7 L1225.4,1124.5 L1230.4,1125.3 L1235.4,1125.8 L1240.4,1126.1 L1245.4,1126.5 L1250.4,1126.8 L1255.4,1126.7 L1260.4,1126.6 L1265.4,1126.5 L1270.4,1126.8 L1275.4,1127.2 L1280.4,1127.5 L1285.4,1127.9 L1290.4,1128.5 L1295.4,1129.3 L1300.4,1130.2 L1305.4,1130.9 L1310.4,1131.2 L1315.4,1131.6 L1320.4,1132.0 L1325.4,1132.0 L1330.4,1131.9 L1335.4,1131.8 L1340.4,1131.9 L1345.4,1132.3 L1350.4,1132.6 L1355.4,1133.0 L1360.4,1133.4 L1365.4,1134.2 L1370.4,1135.0 L1375.4,1135.8 L1380.4,1136.3 L1385.4,1136.7 L1390.4,1137.1 L1395.4,1137.4 L1400.4,1137.3 L1405.4,1137.2 L1410.4,1137.1 L1415.4,1137.4 L1420.4,1137.7 L1425.4,1138.1 L1430.4,1138.5 L1435.4,1139.0 L1440.4,1139.9 L1445.4,1140.7 L1450.0,1141.4 M505.4,1077.5 L535.4,1079.7 M578.4,1082.9 L608.4,1085.1 M651.4,1088.2 L681.4,1090.4 M724.4,1093.5 L754.4,1095.7 M797.4,1098.8 L827.4,1101.0 M870.4,1104.2 L900.4,1106.3 M943.4,1109.5 L973.4,1111.7 M1016.4,1114.8 L1046.4,1117.0 M1089.4,1120.1 L1119.4,1122.3 M1162.4,1125.4 L1192.4,1127.6 M1235.4,1130.8 L1265.4,1132.9 M1308.4,1136.1 L1338.4,1138.3 M1381.4,1141.4 L1411.4,1143.6 M499.4,1072.9 L510.4,1063.9 M561.0,1082.0 L571.5,1069.5 M571.0,1082.7 L581.5,1070.2 M581.0,1083.4 L591.5,1070.9 M633.8,1087.3 L644.3,1074.8 M643.8,1088.0 L654.3,1075.5 M653.8,1088.7 L664.3,1076.2 M706.6,1092.6 L717.1,1080.1 M716.6,1093.3 L727.1,1080.8 M726.6,1094.0 L737.1,1081.5 M779.4,1097.9 L789.9,1085.4 M789.4,1098.6 L799.9,1086.1 M799.4,1099.3 L809.9,1086.8 M852.2,1103.2 L862.7,1090.7 M862.2,1103.9 L872.7,1091.4 M872.2,1104.6 L882.7,1092.1 M925.0,1108.5 L935.5,1096.0 M935.0,1109.2 L945.5,1096.7 M945.0,1110.0 L955.5,1097.5 M997.8,1113.8 L1008.3,1101.3 M1007.8,1114.5 L1018.3,1102.0 M1017.8,1115.3 L1028.3,1102.8 M1070.6,1119.1 L1081.1,1106.6 M1080.6,1119.8 L1091.1,1107.3 M1090.6,1120.6 L1101.1,1108.1 M1143.4,1124.4 L1153.9,1111.9 M1153.4,1125.1 L1163.9,1112.6 M1163.4,1125.9 L1173.9,1113.4 M1216.2,1129.7 L1226.7,1117.2 M1226.2,1130.5 L1236.7,1118.0 M1236.2,1131.2 L1246.7,1118.7 M1289.0,1135.0 L1299.5,1122.5 M1299.0,1135.8 L1309.5,1123.3 M1309.0,1136.5 L1319.5,1124.0 M1361.8,1140.3 L1372.3,1127.8 M1371.8,1141.1 L1382.3,1128.6 M1381.8,1141.8 L1392.3,1129.3 M1434.6,1145.6 L1445.1,1133.1 M1444.6,1146.4 L1455.1,1133.9" stroke="#0808f0" stroke-width="1.30" fill="none" stroke-linejoin="round"/>
<path d="M510.4,1078.4 L1450.0,1146.9" stroke="#8a8a9a" stroke-width="1.00" fill="none" stroke-dasharray="1.5 2"/>
<path d="M478.1,1091.9 L483.1,1092.2 L488.1,1092.6 L493.1,1091.8 L498.1,1090.8 L503.1,1089.8 L508.1,1089.5 L513.1,1089.9 L518.1,1090.3 L523.1,1090.6 L528.1,1091.2 L533.1,1093.0 L538.1,1094.7 L543.1,1096.4 L548.1,1097.0 L553.1,1097.3 L558.1,1097.7 L563.1,1097.7 L568.1,1096.7 L573.1,1095.7 L578.1,1094.7 L583.1,1095.0 L588.1,1095.4 L593.1,1095.7 L598.1,1096.1 L603.1,1097.3 L608.1,1099.0 L613.1,1100.8 L618.1,1102.1 L623.1,1102.4 L628.1,1102.8 L633.1,1103.2 L638.1,1102.6 L643.1,1101.6 L648.1,1100.6 L653.1,1100.1 L658.1,1100.5 L663.1,1100.8 L668.1,1101.2 L673.1,1101.6 L678.1,1103.4 L683.1,1105.1 L688.1,1106.8 L693.1,1107.5 L698.1,1107.9 L703.1,1108.3 L708.1,1108.5 L713.1,1107.4 L718.1,1106.4 L723.1,1105.4 L728.1,1105.6 L733.1,1105.9 L738.1,1106.3 L743.1,1106.7 L748.1,1107.7 L753.1,1109.4 L758.1,1111.2 L763.1,1112.6 L768.1,1113.0 L773.1,1113.4 L778.1,1113.7 L783.1,1113.3 L788.1,1112.3 L793.1,1111.3 L798.1,1110.7 L803.1,1111.0 L808.1,1111.4 L813.1,1111.8 L818.1,1112.1 L823.1,1113.8 L828.1,1115.5 L833.1,1117.2 L838.1,1118.1 L843.1,1118.5 L848.1,1118.8 L853.1,1119.2 L858.1,1118.2 L863.1,1117.2 L868.1,1116.2 L873.1,1116.1 L878.1,1116.5 L883.1,1116.9 L888.1,1117.2 L893.1,1118.1 L898.1,1119.8 L903.1,1121.6 L908.1,1123.2 L913.1,1123.6 L918.1,1123.9 L923.1,1124.3 L928.1,1124.1 L933.1,1123.0 L938.1,1122.0 L943.1,1121.3 L948.1,1121.6 L953.1,1122.0 L958.1,1122.3 L963.1,1122.7 L968.1,1124.2 L973.1,1125.9 L978.1,1127.6 L983.1,1128.7 L988.1,1129.0 L993.1,1129.4 L998.1,1129.8 L1003.1,1128.9 L1008.1,1127.9 L1013.1,1126.9 L1018.1,1126.7 L1023.1,1127.1 L1028.1,1127.4 L1033.1,1127.8 L1038.1,1128.5 L1043.1,1130.2 L1048.1,1132.0 L1053.1,1133.7 L1058.1,1134.1 L1063.1,1134.5 L1068.1,1134.9 L1073.1,1134.8 L1078.1,1133.8 L1083.1,1132.8 L1088.1,1131.8 L1093.1,1132.2 L1098.1,1132.6 L1103.1,1132.9 L1108.1,1133.3 L1113.1,1134.6 L1118.1,1136.3 L1123.1,1138.0 L1128.1,1139.2 L1133.1,1139.6 L1138.1,1140.0 L1143.1,1140.3 L1148.1,1139.7 L1153.1,1138.6 L1158.1,1137.6 L1163.1,1137.3 L1168.1,1137.7 L1173.1,1138.0 L1178.1,1138.4 L1183.1,1138.9 L1188.1,1140.6 L1193.1,1142.4 L1198.1,1144.1 L1203.1,1144.7 L1208.1,1145.1 L1213.1,1145.4 L1218.1,1145.5 L1223.1,1144.5 L1228.1,1143.5 L1233.1,1142.5 L1238.1,1142.8 L1243.1,1143.1 L1248.1,1143.5 L1253.1,1143.9 L1258.1,1145.0 L1263.1,1146.7 L1268.1,1148.5 L1273.1,1149.8 L1278.1,1150.2 L1283.1,1150.5 L1288.1,1150.9 L1293.1,1150.4 L1298.1,1149.4 L1303.1,1148.4 L1308.1,1147.9 L1313.1,1148.2 L1318.1,1148.6 L1323.1,1149.0 L1328.1,1149.3 L1333.1,1151.1 L1338.1,1152.8 L1343.1,1154.5 L1348.1,1155.3 L1353.1,1155.6 L1358.1,1156.0 L1363.1,1156.3 L1368.1,1155.3 L1373.1,1154.2 L1378.1,1153.2 L1383.1,1153.3 L1388.1,1153.7 L1393.1,1154.1 L1398.1,1154.4 L1403.1,1155.4 L1408.1,1157.1 L1413.1,1158.9 L1417.4,1160.3 M467.1,1099.9 L478.1,1099.9 L483.1,1100.2 L488.1,1100.6 L493.1,1100.6 L498.1,1100.5 L503.1,1100.4 L508.1,1100.5 L513.1,1100.9 L518.1,1101.3 L523.1,1101.6 L528.1,1102.1 L533.1,1102.9 L538.1,1103.7 L543.1,1104.5 L548.1,1105.0 L553.1,1105.3 L558.1,1105.7 L563.1,1105.9 L568.1,1105.8 L573.1,1105.8 L578.1,1105.7 L583.1,1106.0 L588.1,1106.4 L593.1,1106.7 L598.1,1107.1 L603.1,1107.7 L608.1,1108.6 L613.1,1109.4 L618.1,1110.1 L623.1,1110.4 L628.1,1110.8 L633.1,1111.2 L638.1,1111.2 L643.1,1111.1 L648.1,1111.0 L653.1,1111.1 L658.1,1111.5 L663.1,1111.8 L668.1,1112.2 L673.1,1112.6 L678.1,1113.4 L683.1,1114.2 L688.1,1115.1 L693.1,1115.5 L698.1,1115.9 L703.1,1116.3 L708.1,1116.6 L713.1,1116.5 L718.1,1116.4 L723.1,1116.3 L728.1,1116.6 L733.1,1116.9 L738.1,1117.3 L743.1,1117.7 L748.1,1118.3 L753.1,1119.1 L758.1,1119.9 L763.1,1120.6 L768.1,1121.0 L773.1,1121.4 L778.1,1121.7 L783.1,1121.8 L788.1,1121.7 L793.1,1121.6 L798.1,1121.7 L803.1,1122.0 L808.1,1122.4 L813.1,1122.8 L818.1,1123.1 L823.1,1123.9 L828.1,1124.7 L833.1,1125.6 L838.1,1126.1 L843.1,1126.5 L848.1,1126.8 L853.1,1127.2 L858.1,1127.1 L863.1,1127.0 L868.1,1126.9 L873.1,1127.1 L878.1,1127.5 L883.1,1127.9 L888.1,1128.2 L893.1,1128.8 L898.1,1129.6 L903.1,1130.4 L908.1,1131.2 L913.1,1131.6 L918.1,1131.9 L923.1,1132.3 L928.1,1132.5 L933.1,1132.4 L938.1,1132.3 L943.1,1132.3 L948.1,1132.6 L953.1,1133.0 L958.1,1133.3 L963.1,1133.7 L968.1,1134.4 L973.1,1135.3 L978.1,1136.1 L983.1,1136.7 L988.1,1137.0 L993.1,1137.4 L998.1,1137.8 L1003.1,1137.7 L1008.1,1137.6 L1013.1,1137.5 L1018.1,1137.7 L1023.1,1138.1 L1028.1,1138.4 L1033.1,1138.8 L1038.1,1139.3 L1043.1,1140.1 L1048.1,1140.9 L1053.1,1141.8 L1058.1,1142.1 L1063.1,1142.5 L1068.1,1142.9 L1073.1,1143.1 L1078.1,1143.0 L1083.1,1142.9 L1088.1,1142.8 L1093.1,1143.2 L1098.1,1143.6 L1103.1,1143.9 L1108.1,1144.3 L1113.1,1145.0 L1118.1,1145.8 L1123.1,1146.6 L1128.1,1147.2 L1133.1,1147.6 L1138.1,1148.0 L1143.1,1148.3 L1148.1,1148.3 L1153.1,1148.3 L1158.1,1148.2 L1163.1,1148.3 L1168.1,1148.7 L1173.1,1149.0 L1178.1,1149.4 L1183.1,1149.8 L1188.1,1150.6 L1193.1,1151.4 L1198.1,1152.3 L1203.1,1152.7 L1208.1,1153.1 L1213.1,1153.4 L1218.1,1153.7 L1223.1,1153.6 L1228.1,1153.5 L1233.1,1153.4 L1238.1,1153.8 L1243.1,1154.1 L1248.1,1154.5 L1253.1,1154.9 L1258.1,1155.5 L1263.1,1156.3 L1268.1,1157.1 L1273.1,1157.8 L1278.1,1158.2 L1283.1,1158.5 L1288.1,1158.9 L1293.1,1159.0 L1298.1,1158.9 L1303.1,1158.8 L1308.1,1158.9 L1313.1,1159.2 L1318.1,1159.6 L1323.1,1160.0 L1328.1,1160.3 L1333.1,1161.1 L1338.1,1162.0 L1343.1,1162.8 L1348.1,1163.3 L1353.1,1163.6 L1358.1,1164.0 L1363.1,1164.3 L1368.1,1164.2 L1373.1,1164.1 L1378.1,1164.1 L1383.1,1164.3 L1388.1,1164.7 L1393.1,1165.1 L1398.1,1165.4 L1403.1,1166.0 L1408.1,1166.8 L1413.1,1167.6 L1417.4,1168.3 M473.1,1104.5 L503.1,1106.7 M546.1,1109.8 L576.1,1112.0 M619.1,1115.1 L649.1,1117.3 M692.1,1120.5 L722.1,1122.6 M765.1,1125.8 L795.1,1128.0 M838.1,1131.1 L868.1,1133.3 M911.1,1136.4 L941.1,1138.6 M984.1,1141.7 L1014.1,1143.9 M1057.1,1147.1 L1087.1,1149.2 M1130.1,1152.4 L1160.1,1154.6 M1203.1,1157.7 L1233.1,1159.9 M1276.1,1163.0 L1306.1,1165.2 M1349.1,1168.3 L1379.1,1170.5 M467.1,1099.9 L478.1,1090.9 M528.7,1108.9 L539.2,1096.4 M538.7,1109.6 L549.2,1097.1 M548.7,1110.4 L559.2,1097.9 M601.5,1114.2 L612.0,1101.7 M611.5,1114.9 L622.0,1102.4 M621.5,1115.7 L632.0,1103.2 M674.3,1119.5 L684.8,1107.0 M684.3,1120.2 L694.8,1107.7 M694.3,1121.0 L704.8,1108.5 M747.1,1124.8 L757.6,1112.3 M757.1,1125.6 L767.6,1113.1 M767.1,1126.3 L777.6,1113.8 M819.9,1130.1 L830.4,1117.6 M829.9,1130.9 L840.4,1118.4 M839.9,1131.6 L850.4,1119.1 M892.7,1135.4 L903.2,1122.9 M902.7,1136.2 L913.2,1123.7 M912.7,1136.9 L923.2,1124.4 M965.5,1140.7 L976.0,1128.2 M975.5,1141.5 L986.0,1129.0 M985.5,1142.2 L996.0,1129.7 M1038.3,1146.1 L1048.8,1133.6 M1048.3,1146.8 L1058.8,1134.3 M1058.3,1147.5 L1068.8,1135.0 M1111.1,1151.4 L1121.6,1138.9 M1121.1,1152.1 L1131.6,1139.6 M1131.1,1152.8 L1141.6,1140.3 M1183.9,1156.7 L1194.4,1144.2 M1193.9,1157.4 L1204.4,1144.9 M1203.9,1158.1 L1214.4,1145.6 M1256.7,1162.0 L1267.2,1149.5 M1266.7,1162.7 L1277.2,1150.2 M1276.7,1163.4 L1287.2,1150.9 M1329.5,1167.3 L1340.0,1154.8 M1339.5,1168.0 L1350.0,1155.5 M1349.5,1168.7 L1360.0,1156.2 M1402.3,1172.6 L1412.8,1160.1 M1412.3,1173.3 L1422.8,1160.8" stroke="#0808f0" stroke-width="1.30" fill="none" stroke-linejoin="round"/>
<path d="M478.1,1105.4 L1417.4,1173.8" stroke="#8a8a9a" stroke-width="1.00" fill="none" stroke-dasharray="1.5 2"/>
<path d="M445.8,1118.8 L450.8,1119.2 L455.8,1119.5 L460.8,1118.8 L465.8,1117.8 L470.8,1116.8 L475.8,1116.5 L480.8,1116.9 L485.8,1117.2 L490.8,1117.6 L495.8,1118.2 L500.8,1119.9 L505.8,1121.6 L510.8,1123.4 L515.8,1123.9 L520.8,1124.3 L525.8,1124.6 L530.8,1124.7 L535.8,1123.7 L540.8,1122.6 L545.8,1121.6 L550.8,1122.0 L555.8,1122.3 L560.8,1122.7 L565.8,1123.0 L570.8,1124.2 L575.8,1126.0 L580.8,1127.7 L585.8,1129.0 L590.8,1129.4 L595.8,1129.7 L600.8,1130.1 L605.8,1129.5 L610.8,1128.5 L615.8,1127.5 L620.8,1127.1 L625.8,1127.4 L630.8,1127.8 L635.8,1128.1 L640.8,1128.6 L645.8,1130.3 L650.8,1132.0 L655.8,1133.8 L660.8,1134.5 L665.8,1134.8 L670.8,1135.2 L675.8,1135.4 L680.8,1134.4 L685.8,1133.4 L690.8,1132.4 L695.8,1132.5 L700.8,1132.9 L705.8,1133.3 L710.8,1133.6 L715.8,1134.6 L720.8,1136.4 L725.8,1138.1 L730.8,1139.6 L735.8,1139.9 L740.8,1140.3 L745.8,1140.7 L750.8,1140.3 L755.8,1139.3 L760.8,1138.2 L765.8,1137.6 L770.8,1138.0 L775.8,1138.4 L780.8,1138.7 L785.8,1139.1 L790.8,1140.7 L795.8,1142.4 L800.8,1144.2 L805.8,1145.0 L810.8,1145.4 L815.8,1145.8 L820.8,1146.1 L825.8,1145.1 L830.8,1144.1 L835.8,1143.1 L840.8,1143.1 L845.8,1143.5 L850.8,1143.8 L855.8,1144.2 L860.8,1145.0 L865.8,1146.8 L870.8,1148.5 L875.8,1150.1 L880.8,1150.5 L885.8,1150.9 L890.8,1151.2 L895.8,1151.0 L900.8,1150.0 L905.8,1149.0 L910.8,1148.2 L915.8,1148.6 L920.8,1148.9 L925.8,1149.3 L930.8,1149.7 L935.8,1151.1 L940.8,1152.9 L945.8,1154.6 L950.8,1155.6 L955.8,1156.0 L960.8,1156.3 L965.8,1156.7 L970.8,1155.9 L975.8,1154.9 L980.8,1153.8 L985.8,1153.7 L990.8,1154.0 L995.8,1154.4 L1000.8,1154.8 L1005.8,1155.4 L1010.8,1157.2 L1015.8,1158.9 L1020.8,1160.7 L1025.8,1161.1 L1030.8,1161.4 L1035.8,1161.8 L1040.8,1161.7 L1045.8,1160.7 L1050.8,1159.7 L1055.8,1158.8 L1060.8,1159.1 L1065.8,1159.5 L1070.8,1159.9 L1075.8,1160.2 L1080.8,1161.5 L1085.8,1163.3 L1090.8,1165.0 L1095.8,1166.2 L1100.8,1166.5 L1105.8,1166.9 L1110.8,1167.3 L1115.8,1166.6 L1120.8,1165.6 L1125.8,1164.6 L1130.8,1164.2 L1135.8,1164.6 L1140.8,1165.0 L1145.8,1165.3 L1150.8,1165.9 L1155.8,1167.6 L1160.8,1169.3 L1165.8,1171.1 L1170.8,1171.7 L1175.8,1172.0 L1180.8,1172.4 L1185.8,1172.5 L1190.8,1171.5 L1195.8,1170.5 L1200.8,1169.4 L1205.8,1169.7 L1210.8,1170.1 L1215.8,1170.4 L1220.8,1170.8 L1225.8,1171.9 L1230.8,1173.7 L1235.8,1175.4 L1240.8,1176.8 L1245.8,1177.1 L1250.8,1177.5 L1255.8,1177.8 L1260.8,1177.3 L1265.8,1176.3 L1270.8,1175.3 L1275.8,1174.8 L1280.8,1175.2 L1285.8,1175.5 L1290.8,1175.9 L1295.8,1176.3 L1300.8,1178.0 L1305.8,1179.7 L1310.8,1181.5 L1315.8,1182.2 L1320.8,1182.6 L1325.8,1183.0 L1330.8,1183.2 L1335.8,1182.2 L1340.8,1181.2 L1345.8,1180.2 L1350.8,1180.3 L1355.8,1180.6 L1360.8,1181.0 L1365.8,1181.4 L1370.8,1182.3 L1375.8,1184.1 L1380.8,1185.8 L1384.8,1187.3 M434.8,1126.8 L445.8,1126.8 L450.8,1127.2 L455.8,1127.5 L460.8,1127.5 L465.8,1127.4 L470.8,1127.3 L475.8,1127.5 L480.8,1127.9 L485.8,1128.2 L490.8,1128.6 L495.8,1129.0 L500.8,1129.8 L505.8,1130.7 L510.8,1131.5 L515.8,1131.9 L520.8,1132.3 L525.8,1132.6 L530.8,1132.9 L535.8,1132.8 L540.8,1132.7 L545.8,1132.6 L550.8,1133.0 L555.8,1133.3 L560.8,1133.7 L565.8,1134.0 L570.8,1134.7 L575.8,1135.5 L580.8,1136.3 L585.8,1137.0 L590.8,1137.4 L595.8,1137.7 L600.8,1138.1 L605.8,1138.2 L610.8,1138.1 L615.8,1138.0 L620.8,1138.1 L625.8,1138.4 L630.8,1138.8 L635.8,1139.1 L640.8,1139.5 L645.8,1140.4 L650.8,1141.2 L655.8,1142.0 L660.8,1142.5 L665.8,1142.8 L670.8,1143.2 L675.8,1143.5 L680.8,1143.4 L685.8,1143.3 L690.8,1143.2 L695.8,1143.5 L700.8,1143.9 L705.8,1144.3 L710.8,1144.6 L715.8,1145.2 L720.8,1146.0 L725.8,1146.8 L730.8,1147.6 L735.8,1147.9 L740.8,1148.3 L745.8,1148.7 L750.8,1148.8 L755.8,1148.7 L760.8,1148.6 L765.8,1148.6 L770.8,1149.0 L775.8,1149.4 L780.8,1149.7 L785.8,1150.1 L790.8,1150.9 L795.8,1151.7 L800.8,1152.5 L805.8,1153.0 L810.8,1153.4 L815.8,1153.8 L820.8,1154.1 L825.8,1154.0 L830.8,1153.9 L835.8,1153.9 L840.8,1154.1 L845.8,1154.5 L850.8,1154.8 L855.8,1155.2 L860.8,1155.7 L865.8,1156.5 L870.8,1157.4 L875.8,1158.1 L880.8,1158.5 L885.8,1158.9 L890.8,1159.2 L895.8,1159.4 L900.8,1159.3 L905.8,1159.2 L910.8,1159.2 L915.8,1159.6 L920.8,1159.9 L925.8,1160.3 L930.8,1160.7 L935.8,1161.4 L940.8,1162.2 L945.8,1163.0 L950.8,1163.6 L955.8,1164.0 L960.8,1164.3 L965.8,1164.7 L970.8,1164.7 L975.8,1164.6 L980.8,1164.5 L985.8,1164.7 L990.8,1165.0 L995.8,1165.4 L1000.8,1165.8 L1005.8,1166.2 L1010.8,1167.1 L1015.8,1167.9 L1020.8,1168.7 L1025.8,1169.1 L1030.8,1169.4 L1035.8,1169.8 L1040.8,1170.0 L1045.8,1169.9 L1050.8,1169.8 L1055.8,1169.8 L1060.8,1170.1 L1065.8,1170.5 L1070.8,1170.9 L1075.8,1171.2 L1080.8,1171.9 L1085.8,1172.7 L1090.8,1173.5 L1095.8,1174.2 L1100.8,1174.5 L1105.8,1174.9 L1110.8,1175.3 L1115.8,1175.3 L1120.8,1175.2 L1125.8,1175.1 L1130.8,1175.2 L1135.8,1175.6 L1140.8,1176.0 L1145.8,1176.3 L1150.8,1176.7 L1155.8,1177.6 L1160.8,1178.4 L1165.8,1179.2 L1170.8,1179.7 L1175.8,1180.0 L1180.8,1180.4 L1185.8,1180.7 L1190.8,1180.6 L1195.8,1180.5 L1200.8,1180.4 L1205.8,1180.7 L1210.8,1181.1 L1215.8,1181.4 L1220.8,1181.8 L1225.8,1182.4 L1230.8,1183.2 L1235.8,1184.1 L1240.8,1184.8 L1245.8,1185.1 L1250.8,1185.5 L1255.8,1185.8 L1260.8,1185.9 L1265.8,1185.8 L1270.8,1185.7 L1275.8,1185.8 L1280.8,1186.2 L1285.8,1186.5 L1290.8,1186.9 L1295.8,1187.3 L1300.8,1188.1 L1305.8,1188.9 L1310.8,1189.7 L1315.8,1190.2 L1320.8,1190.6 L1325.8,1191.0 L1330.8,1191.3 L1335.8,1191.2 L1340.8,1191.1 L1345.8,1191.0 L1350.8,1191.3 L1355.8,1191.6 L1360.8,1192.0 L1365.8,1192.4 L1370.8,1192.9 L1375.8,1193.8 L1380.8,1194.6 L1384.8,1195.3 M440.8,1131.4 L470.8,1133.6 M513.8,1136.8 L543.8,1138.9 M586.8,1142.1 L616.8,1144.3 M659.8,1147.4 L689.8,1149.6 M732.8,1152.7 L762.8,1154.9 M805.8,1158.0 L835.8,1160.2 M878.8,1163.4 L908.8,1165.6 M951.8,1168.7 L981.8,1170.9 M1024.8,1174.0 L1054.8,1176.2 M1097.8,1179.3 L1127.8,1181.5 M1170.8,1184.7 L1200.8,1186.8 M1243.8,1190.0 L1273.8,1192.2 M1316.8,1195.3 L1346.8,1197.5 M434.8,1126.8 L445.8,1117.8 M496.4,1135.9 L506.9,1123.4 M506.4,1136.6 L516.9,1124.1 M516.4,1137.3 L526.9,1124.8 M569.2,1141.2 L579.7,1128.7 M579.2,1141.9 L589.7,1129.4 M589.2,1142.6 L599.7,1130.1 M642.0,1146.5 L652.5,1134.0 M652.0,1147.2 L662.5,1134.7 M662.0,1147.9 L672.5,1135.4 M714.8,1151.8 L725.3,1139.3 M724.8,1152.5 L735.3,1140.0 M734.8,1153.2 L745.3,1140.7 M787.6,1157.1 L798.1,1144.6 M797.6,1157.8 L808.1,1145.3 M807.6,1158.5 L818.1,1146.0 M860.4,1162.4 L870.9,1149.9 M870.4,1163.1 L880.9,1150.6 M880.4,1163.8 L890.9,1151.3 M933.2,1167.7 L943.7,1155.2 M943.2,1168.4 L953.7,1155.9 M953.2,1169.2 L963.7,1156.7 M1006.0,1173.0 L1016.5,1160.5 M1016.0,1173.7 L1026.5,1161.2 M1026.0,1174.5 L1036.5,1162.0 M1078.8,1178.3 L1089.3,1165.8 M1088.8,1179.0 L1099.3,1166.5 M1098.8,1179.8 L1109.3,1167.3 M1151.6,1183.6 L1162.1,1171.1 M1161.6,1184.3 L1172.1,1171.8 M1171.6,1185.1 L1182.1,1172.6 M1224.4,1188.9 L1234.9,1176.4 M1234.4,1189.7 L1244.9,1177.2 M1244.4,1190.4 L1254.9,1177.9 M1297.2,1194.2 L1307.7,1181.7 M1307.2,1195.0 L1317.7,1182.5 M1317.2,1195.7 L1327.7,1183.2 M1370.0,1199.5 L1380.5,1187.0" stroke="#0808f0" stroke-width="1.30" fill="none" stroke-linejoin="round"/>
<path d="M445.8,1132.3 L1384.8,1200.8" stroke="#8a8a9a" stroke-width="1.00" fill="none" stroke-dasharray="1.5 2"/>
<path d="M413.5,1145.7 L418.5,1146.1 L423.5,1146.5 L428.5,1145.7 L433.5,1144.7 L438.5,1143.7 L443.5,1143.4 L448.5,1143.8 L453.5,1144.2 L458.5,1144.5 L463.5,1145.1 L468.5,1146.8 L473.5,1148.6 L478.5,1150.3 L483.5,1150.8 L488.5,1151.2 L493.5,1151.6 L498.5,1151.6 L503.5,1150.6 L508.5,1149.6 L513.5,1148.6 L518.5,1148.9 L523.5,1149.3 L528.5,1149.6 L533.5,1150.0 L538.5,1151.2 L543.5,1152.9 L548.5,1154.7 L553.5,1156.0 L558.5,1156.3 L563.5,1156.7 L568.5,1157.0 L573.5,1156.5 L578.5,1155.5 L583.5,1154.5 L588.5,1154.0 L593.5,1154.4 L598.5,1154.7 L603.5,1155.1 L608.5,1155.5 L613.5,1157.2 L618.5,1159.0 L623.5,1160.7 L628.5,1161.4 L633.5,1161.8 L638.5,1162.1 L643.5,1162.3 L648.5,1161.3 L653.5,1160.3 L658.5,1159.3 L663.5,1159.5 L668.5,1159.8 L673.5,1160.2 L678.5,1160.6 L683.5,1161.6 L688.5,1163.3 L693.5,1165.1 L698.5,1166.5 L703.5,1166.9 L708.5,1167.2 L713.5,1167.6 L718.5,1167.2 L723.5,1166.2 L728.5,1165.2 L733.5,1164.6 L738.5,1164.9 L743.5,1165.3 L748.5,1165.7 L753.5,1166.0 L758.5,1167.7 L763.5,1169.4 L768.5,1171.1 L773.5,1172.0 L778.5,1172.4 L783.5,1172.7 L788.5,1173.1 L793.5,1172.1 L798.5,1171.1 L803.5,1170.1 L808.5,1170.0 L813.5,1170.4 L818.5,1170.8 L823.5,1171.1 L828.5,1172.0 L833.5,1173.7 L838.5,1175.5 L843.5,1177.1 L848.5,1177.5 L853.5,1177.8 L858.5,1178.2 L863.5,1177.9 L868.5,1176.9 L873.5,1175.9 L878.5,1175.1 L883.5,1175.5 L888.5,1175.9 L893.5,1176.2 L898.5,1176.6 L903.5,1178.1 L908.5,1179.8 L913.5,1181.5 L918.5,1182.6 L923.5,1182.9 L928.5,1183.3 L933.5,1183.7 L938.5,1182.8 L943.5,1181.8 L948.5,1180.8 L953.5,1180.6 L958.5,1181.0 L963.5,1181.3 L968.5,1181.7 L973.5,1182.4 L978.5,1184.1 L983.5,1185.9 L988.5,1187.6 L993.5,1188.0 L998.5,1188.4 L1003.5,1188.8 L1008.5,1188.7 L1013.5,1187.7 L1018.5,1186.7 L1023.5,1185.7 L1028.5,1186.1 L1033.5,1186.4 L1038.5,1186.8 L1043.5,1187.2 L1048.5,1188.5 L1053.5,1190.2 L1058.5,1191.9 L1063.5,1193.1 L1068.5,1193.5 L1073.5,1193.9 L1078.5,1194.2 L1083.5,1193.5 L1088.5,1192.5 L1093.5,1191.5 L1098.5,1191.2 L1103.5,1191.5 L1108.5,1191.9 L1113.5,1192.3 L1118.5,1192.8 L1123.5,1194.5 L1128.5,1196.3 L1133.5,1198.0 L1138.5,1198.6 L1143.5,1199.0 L1148.5,1199.3 L1153.5,1199.4 L1158.5,1198.4 L1163.5,1197.4 L1168.5,1196.4 L1173.5,1196.6 L1178.5,1197.0 L1183.5,1197.4 L1188.5,1197.7 L1193.5,1198.9 L1198.5,1200.6 L1203.5,1202.3 L1208.5,1203.7 L1213.5,1204.1 L1218.5,1204.4 L1223.5,1204.8 L1228.5,1204.3 L1233.5,1203.3 L1238.5,1202.3 L1243.5,1201.8 L1248.5,1202.1 L1253.5,1202.5 L1258.5,1202.8 L1263.5,1203.2 L1268.5,1204.9 L1273.5,1206.7 L1278.5,1208.4 L1283.5,1209.2 L1288.5,1209.5 L1293.5,1209.9 L1298.5,1210.2 L1303.5,1209.1 L1308.5,1208.1 L1313.5,1207.1 L1318.5,1207.2 L1323.5,1207.6 L1328.5,1207.9 L1333.5,1208.3 L1338.5,1209.3 L1343.5,1211.0 L1348.5,1212.8 L1352.2,1214.2 M402.5,1153.7 L413.5,1153.7 L418.5,1154.1 L423.5,1154.5 L428.5,1154.5 L433.5,1154.4 L438.5,1154.3 L443.5,1154.4 L448.5,1154.8 L453.5,1155.2 L458.5,1155.5 L463.5,1156.0 L468.5,1156.8 L473.5,1157.6 L478.5,1158.4 L483.5,1158.8 L488.5,1159.2 L493.5,1159.6 L498.5,1159.8 L503.5,1159.7 L508.5,1159.6 L513.5,1159.6 L518.5,1159.9 L523.5,1160.3 L528.5,1160.6 L533.5,1161.0 L538.5,1161.6 L543.5,1162.5 L548.5,1163.3 L553.5,1164.0 L558.5,1164.3 L563.5,1164.7 L568.5,1165.0 L573.5,1165.1 L578.5,1165.0 L583.5,1164.9 L588.5,1165.0 L593.5,1165.4 L598.5,1165.7 L603.5,1166.1 L608.5,1166.5 L613.5,1167.3 L618.5,1168.1 L623.5,1168.9 L628.5,1169.4 L633.5,1169.8 L638.5,1170.1 L643.5,1170.5 L648.5,1170.4 L653.5,1170.3 L658.5,1170.2 L663.5,1170.5 L668.5,1170.8 L673.5,1171.2 L678.5,1171.6 L683.5,1172.1 L688.5,1173.0 L693.5,1173.8 L698.5,1174.5 L703.5,1174.9 L708.5,1175.2 L713.5,1175.6 L718.5,1175.7 L723.5,1175.6 L728.5,1175.5 L733.5,1175.6 L738.5,1175.9 L743.5,1176.3 L748.5,1176.7 L753.5,1177.0 L758.5,1177.8 L763.5,1178.6 L768.5,1179.5 L773.5,1180.0 L778.5,1180.4 L783.5,1180.7 L788.5,1181.1 L793.5,1181.0 L798.5,1180.9 L803.5,1180.8 L808.5,1181.0 L813.5,1181.4 L818.5,1181.8 L823.5,1182.1 L828.5,1182.7 L833.5,1183.5 L838.5,1184.3 L843.5,1185.1 L848.5,1185.5 L853.5,1185.8 L858.5,1186.2 L863.5,1186.3 L868.5,1186.3 L873.5,1186.2 L878.5,1186.1 L883.5,1186.5 L888.5,1186.9 L893.5,1187.2 L898.5,1187.6 L903.5,1188.3 L908.5,1189.2 L913.5,1190.0 L918.5,1190.6 L923.5,1190.9 L928.5,1191.3 L933.5,1191.7 L938.5,1191.6 L943.5,1191.5 L948.5,1191.4 L953.5,1191.6 L958.5,1192.0 L963.5,1192.3 L968.5,1192.7 L973.5,1193.2 L978.5,1194.0 L983.5,1194.8 L988.5,1195.6 L993.5,1196.0 L998.5,1196.4 L1003.5,1196.8 L1008.5,1197.0 L1013.5,1196.9 L1018.5,1196.8 L1023.5,1196.7 L1028.5,1197.1 L1033.5,1197.4 L1038.5,1197.8 L1043.5,1198.2 L1048.5,1198.8 L1053.5,1199.7 L1058.5,1200.5 L1063.5,1201.1 L1068.5,1201.5 L1073.5,1201.9 L1078.5,1202.2 L1083.5,1202.2 L1088.5,1202.1 L1093.5,1202.1 L1098.5,1202.2 L1103.5,1202.5 L1108.5,1202.9 L1113.5,1203.3 L1118.5,1203.7 L1123.5,1204.5 L1128.5,1205.3 L1133.5,1206.2 L1138.5,1206.6 L1143.5,1207.0 L1148.5,1207.3 L1153.5,1207.6 L1158.5,1207.5 L1163.5,1207.4 L1168.5,1207.3 L1173.5,1207.6 L1178.5,1208.0 L1183.5,1208.4 L1188.5,1208.7 L1193.5,1209.4 L1198.5,1210.2 L1203.5,1211.0 L1208.5,1211.7 L1213.5,1212.1 L1218.5,1212.4 L1223.5,1212.8 L1228.5,1212.9 L1233.5,1212.8 L1238.5,1212.7 L1243.5,1212.8 L1248.5,1213.1 L1253.5,1213.5 L1258.5,1213.8 L1263.5,1214.2 L1268.5,1215.0 L1273.5,1215.9 L1278.5,1216.7 L1283.5,1217.2 L1288.5,1217.5 L1293.5,1217.9 L1298.5,1218.2 L1303.5,1218.1 L1308.5,1218.0 L1313.5,1217.9 L1318.5,1218.2 L1323.5,1218.6 L1328.5,1218.9 L1333.5,1219.3 L1338.5,1219.9 L1343.5,1220.7 L1348.5,1221.5 L1352.2,1222.2 M408.5,1158.4 L438.5,1160.6 M481.5,1163.7 L511.5,1165.9 M554.5,1169.0 L584.5,1171.2 M627.5,1174.3 L657.5,1176.5 M700.5,1179.7 L730.5,1181.9 M773.5,1185.0 L803.5,1187.2 M846.5,1190.3 L876.5,1192.5 M919.5,1195.6 L949.5,1197.8 M992.5,1201.0 L1022.5,1203.1 M1065.5,1206.3 L1095.5,1208.5 M1138.5,1211.6 L1168.5,1213.8 M1211.5,1216.9 L1241.5,1219.1 M1284.5,1222.2 L1314.5,1224.4 M402.5,1153.7 L413.5,1144.7 M464.1,1162.8 L474.6,1150.3 M474.1,1163.5 L484.6,1151.0 M484.1,1164.3 L494.6,1151.8 M536.9,1168.1 L547.4,1155.6 M546.9,1168.8 L557.4,1156.3 M556.9,1169.6 L567.4,1157.1 M609.7,1173.4 L620.2,1160.9 M619.7,1174.1 L630.2,1161.6 M629.7,1174.9 L640.2,1162.4 M682.5,1178.7 L693.0,1166.2 M692.5,1179.4 L703.0,1166.9 M702.5,1180.2 L713.0,1167.7 M755.3,1184.0 L765.8,1171.5 M765.3,1184.8 L775.8,1172.3 M775.3,1185.5 L785.8,1173.0 M828.1,1189.3 L838.6,1176.8 M838.1,1190.1 L848.6,1177.6 M848.1,1190.8 L858.6,1178.3 M900.9,1194.6 L911.4,1182.1 M910.9,1195.4 L921.4,1182.9 M920.9,1196.1 L931.4,1183.6 M973.7,1199.9 L984.2,1187.4 M983.7,1200.7 L994.2,1188.2 M993.7,1201.4 L1004.2,1188.9 M1046.5,1205.3 L1057.0,1192.8 M1056.5,1206.0 L1067.0,1193.5 M1066.5,1206.7 L1077.0,1194.2 M1119.3,1210.6 L1129.8,1198.1 M1129.3,1211.3 L1139.8,1198.8 M1139.3,1212.0 L1149.8,1199.5 M1192.1,1215.9 L1202.6,1203.4 M1202.1,1216.6 L1212.6,1204.1 M1212.1,1217.3 L1222.6,1204.8 M1264.9,1221.2 L1275.4,1208.7 M1274.9,1221.9 L1285.4,1209.4 M1284.9,1222.6 L1295.4,1210.1 M1337.7,1226.5 L1348.2,1214.0" stroke="#0808f0" stroke-width="1.30" fill="none" stroke-linejoin="round"/>
<path d="M413.5,1159.2 L1352.2,1227.7" stroke="#8a8a9a" stroke-width="1.00" fill="none" stroke-dasharray="1.5 2"/>
<path d="M381.2,1172.7 L386.2,1173.1 L391.2,1173.4 L396.2,1172.7 L401.2,1171.7 L406.2,1170.7 L411.2,1170.4 L416.2,1170.7 L421.2,1171.1 L426.2,1171.5 L431.2,1172.0 L436.2,1173.8 L441.2,1175.5 L446.2,1177.3 L451.2,1177.8 L456.2,1178.2 L461.2,1178.5 L466.2,1178.6 L471.2,1177.5 L476.2,1176.5 L481.2,1175.5 L486.2,1175.8 L491.2,1176.2 L496.2,1176.6 L501.2,1176.9 L506.2,1178.1 L511.2,1179.9 L516.2,1181.6 L521.2,1182.9 L526.2,1183.3 L531.2,1183.6 L536.2,1184.0 L541.2,1183.4 L546.2,1182.4 L551.2,1181.4 L556.2,1180.9 L561.2,1181.3 L566.2,1181.7 L571.2,1182.0 L576.2,1182.5 L581.2,1184.2 L586.2,1185.9 L591.2,1187.7 L596.2,1188.4 L601.2,1188.7 L606.2,1189.1 L611.2,1189.3 L616.2,1188.3 L621.2,1187.3 L626.2,1186.3 L631.2,1186.4 L636.2,1186.8 L641.2,1187.1 L646.2,1187.5 L651.2,1188.5 L656.2,1190.3 L661.2,1192.0 L666.2,1193.5 L671.2,1193.8 L676.2,1194.2 L681.2,1194.6 L686.2,1194.2 L691.2,1193.1 L696.2,1192.1 L701.2,1191.5 L706.2,1191.9 L711.2,1192.2 L716.2,1192.6 L721.2,1193.0 L726.2,1194.6 L731.2,1196.3 L736.2,1198.1 L741.2,1198.9 L746.2,1199.3 L751.2,1199.7 L756.2,1200.0 L761.2,1199.0 L766.2,1198.0 L771.2,1197.0 L776.2,1197.0 L781.2,1197.3 L786.2,1197.7 L791.2,1198.1 L796.2,1198.9 L801.2,1200.7 L806.2,1202.4 L811.2,1204.0 L816.2,1204.4 L821.2,1204.8 L826.2,1205.1 L831.2,1204.9 L836.2,1203.9 L841.2,1202.9 L846.2,1202.1 L851.2,1202.5 L856.2,1202.8 L861.2,1203.2 L866.2,1203.5 L871.2,1205.0 L876.2,1206.7 L881.2,1208.5 L886.2,1209.5 L891.2,1209.9 L896.2,1210.2 L901.2,1210.6 L906.2,1209.8 L911.2,1208.7 L916.2,1207.7 L921.2,1207.6 L926.2,1207.9 L931.2,1208.3 L936.2,1208.6 L941.2,1209.3 L946.2,1211.1 L951.2,1212.8 L956.2,1214.6 L961.2,1215.0 L966.2,1215.3 L971.2,1215.7 L976.2,1215.6 L981.2,1214.6 L986.2,1213.6 L991.2,1212.7 L996.2,1213.0 L1001.2,1213.4 L1006.2,1213.8 L1011.2,1214.1 L1016.2,1215.4 L1021.2,1217.1 L1026.2,1218.9 L1031.2,1220.1 L1036.2,1220.4 L1041.2,1220.8 L1046.2,1221.2 L1051.2,1220.5 L1056.2,1219.5 L1061.2,1218.5 L1066.2,1218.1 L1071.2,1218.5 L1076.2,1218.9 L1081.2,1219.2 L1086.2,1219.7 L1091.2,1221.5 L1096.2,1223.2 L1101.2,1225.0 L1106.2,1225.5 L1111.2,1225.9 L1116.2,1226.3 L1121.2,1226.4 L1126.2,1225.4 L1131.2,1224.3 L1136.2,1223.3 L1141.2,1223.6 L1146.2,1224.0 L1151.2,1224.3 L1156.2,1224.7 L1161.2,1225.8 L1166.2,1227.6 L1171.2,1229.3 L1176.2,1230.6 L1181.2,1231.0 L1186.2,1231.4 L1191.2,1231.7 L1196.2,1231.2 L1201.2,1230.2 L1206.2,1229.2 L1211.2,1228.7 L1216.2,1229.1 L1221.2,1229.4 L1226.2,1229.8 L1231.2,1230.2 L1236.2,1231.9 L1241.2,1233.6 L1246.2,1235.4 L1251.2,1236.1 L1256.2,1236.5 L1261.2,1236.8 L1266.2,1237.1 L1271.2,1236.1 L1276.2,1235.1 L1281.2,1234.1 L1286.2,1234.2 L1291.2,1234.5 L1296.2,1234.9 L1301.2,1235.3 L1306.2,1236.2 L1311.2,1238.0 L1316.2,1239.7 L1319.6,1241.1 M370.2,1180.7 L381.2,1180.7 L386.2,1181.1 L391.2,1181.4 L396.2,1181.4 L401.2,1181.3 L406.2,1181.2 L411.2,1181.4 L416.2,1181.7 L421.2,1182.1 L426.2,1182.5 L431.2,1182.9 L436.2,1183.7 L441.2,1184.6 L446.2,1185.4 L451.2,1185.8 L456.2,1186.2 L461.2,1186.5 L466.2,1186.8 L471.2,1186.7 L476.2,1186.6 L481.2,1186.5 L486.2,1186.8 L491.2,1187.2 L496.2,1187.6 L501.2,1187.9 L506.2,1188.6 L511.2,1189.4 L516.2,1190.2 L521.2,1190.9 L526.2,1191.3 L531.2,1191.6 L536.2,1192.0 L541.2,1192.0 L546.2,1191.9 L551.2,1191.9 L556.2,1191.9 L561.2,1192.3 L566.2,1192.7 L571.2,1193.0 L576.2,1193.4 L581.2,1194.2 L586.2,1195.1 L591.2,1195.9 L596.2,1196.4 L601.2,1196.7 L606.2,1197.1 L611.2,1197.4 L616.2,1197.3 L621.2,1197.2 L626.2,1197.1 L631.2,1197.4 L636.2,1197.8 L641.2,1198.1 L646.2,1198.5 L651.2,1199.1 L656.2,1199.9 L661.2,1200.7 L666.2,1201.5 L671.2,1201.8 L676.2,1202.2 L681.2,1202.6 L686.2,1202.7 L691.2,1202.6 L696.2,1202.5 L701.2,1202.5 L706.2,1202.9 L711.2,1203.2 L716.2,1203.6 L721.2,1204.0 L726.2,1204.8 L731.2,1205.6 L736.2,1206.4 L741.2,1206.9 L746.2,1207.3 L751.2,1207.7 L756.2,1208.0 L761.2,1207.9 L766.2,1207.8 L771.2,1207.7 L776.2,1208.0 L781.2,1208.3 L786.2,1208.7 L791.2,1209.1 L796.2,1209.6 L801.2,1210.4 L806.2,1211.3 L811.2,1212.0 L816.2,1212.4 L821.2,1212.8 L826.2,1213.1 L831.2,1213.3 L836.2,1213.2 L841.2,1213.1 L846.2,1213.1 L851.2,1213.5 L856.2,1213.8 L861.2,1214.2 L866.2,1214.5 L871.2,1215.3 L876.2,1216.1 L881.2,1216.9 L886.2,1217.5 L891.2,1217.9 L896.2,1218.2 L901.2,1218.6 L906.2,1218.6 L911.2,1218.5 L916.2,1218.4 L921.2,1218.6 L926.2,1218.9 L931.2,1219.3 L936.2,1219.6 L941.2,1220.1 L946.2,1220.9 L951.2,1221.8 L956.2,1222.6 L961.2,1223.0 L966.2,1223.3 L971.2,1223.7 L976.2,1223.9 L981.2,1223.8 L986.2,1223.7 L991.2,1223.7 L996.2,1224.0 L1001.2,1224.4 L1006.2,1224.8 L1011.2,1225.1 L1016.2,1225.8 L1021.2,1226.6 L1026.2,1227.4 L1031.2,1228.1 L1036.2,1228.4 L1041.2,1228.8 L1046.2,1229.2 L1051.2,1229.2 L1056.2,1229.1 L1061.2,1229.0 L1066.2,1229.1 L1071.2,1229.5 L1076.2,1229.9 L1081.2,1230.2 L1086.2,1230.6 L1091.2,1231.5 L1096.2,1232.3 L1101.2,1233.1 L1106.2,1233.5 L1111.2,1233.9 L1116.2,1234.3 L1121.2,1234.5 L1126.2,1234.5 L1131.2,1234.4 L1136.2,1234.3 L1141.2,1234.6 L1146.2,1235.0 L1151.2,1235.3 L1156.2,1235.7 L1161.2,1236.3 L1166.2,1237.1 L1171.2,1238.0 L1176.2,1238.6 L1181.2,1239.0 L1186.2,1239.4 L1191.2,1239.7 L1196.2,1239.8 L1201.2,1239.7 L1206.2,1239.6 L1211.2,1239.7 L1216.2,1240.1 L1221.2,1240.4 L1226.2,1240.8 L1231.2,1241.2 L1236.2,1242.0 L1241.2,1242.8 L1246.2,1243.6 L1251.2,1244.1 L1256.2,1244.5 L1261.2,1244.8 L1266.2,1245.2 L1271.2,1245.1 L1276.2,1245.0 L1281.2,1244.9 L1286.2,1245.2 L1291.2,1245.5 L1296.2,1245.9 L1301.2,1246.3 L1306.2,1246.8 L1311.2,1247.6 L1316.2,1248.5 L1319.6,1249.1 M376.2,1185.3 L406.2,1187.5 M449.2,1190.6 L479.2,1192.8 M522.2,1196.0 L552.2,1198.2 M595.2,1201.3 L625.2,1203.5 M668.2,1206.6 L698.2,1208.8 M741.2,1211.9 L771.2,1214.1 M814.2,1217.3 L844.2,1219.4 M887.2,1222.6 L917.2,1224.8 M960.2,1227.9 L990.2,1230.1 M1033.2,1233.2 L1063.2,1235.4 M1106.2,1238.5 L1136.2,1240.7 M1179.2,1243.9 L1209.2,1246.1 M1252.2,1249.2 L1282.2,1251.4 M370.2,1180.7 L381.2,1171.7 M431.8,1189.7 L442.3,1177.2 M441.8,1190.5 L452.3,1178.0 M451.8,1191.2 L462.3,1178.7 M504.6,1195.0 L515.1,1182.5 M514.6,1195.8 L525.1,1183.3 M524.6,1196.5 L535.1,1184.0 M577.4,1200.4 L587.9,1187.9 M587.4,1201.1 L597.9,1188.6 M597.4,1201.8 L607.9,1189.3 M650.2,1205.7 L660.7,1193.2 M660.2,1206.4 L670.7,1193.9 M670.2,1207.1 L680.7,1194.6 M723.0,1211.0 L733.5,1198.5 M733.0,1211.7 L743.5,1199.2 M743.0,1212.4 L753.5,1199.9 M795.8,1216.3 L806.3,1203.8 M805.8,1217.0 L816.3,1204.5 M815.8,1217.7 L826.3,1205.2 M868.6,1221.6 L879.1,1209.1 M878.6,1222.3 L889.1,1209.8 M888.6,1223.0 L899.1,1210.5 M941.4,1226.9 L951.9,1214.4 M951.4,1227.6 L961.9,1215.1 M961.4,1228.4 L971.9,1215.9 M1014.2,1232.2 L1024.7,1219.7 M1024.2,1232.9 L1034.7,1220.4 M1034.2,1233.7 L1044.7,1221.2 M1087.0,1237.5 L1097.5,1225.0 M1097.0,1238.2 L1107.5,1225.7 M1107.0,1239.0 L1117.5,1226.5 M1159.8,1242.8 L1170.3,1230.3 M1169.8,1243.5 L1180.3,1231.0 M1179.8,1244.3 L1190.3,1231.8 M1232.6,1248.1 L1243.1,1235.6 M1242.6,1248.9 L1253.1,1236.4 M1252.6,1249.6 L1263.1,1237.1 M1305.4,1253.4 L1315.9,1240.9" stroke="#0808f0" stroke-width="1.30" fill="none" stroke-linejoin="round"/>
<path d="M381.2,1186.2 L1319.6,1254.6" stroke="#8a8a9a" stroke-width="1.00" fill="none" stroke-dasharray="1.5 2"/>
<path d="M348.9,1199.6 L353.9,1200.0 L358.9,1200.4 L363.9,1199.6 L368.9,1198.6 L373.9,1197.6 L378.9,1197.3 L383.9,1197.7 L388.9,1198.1 L393.9,1198.4 L398.9,1199.0 L403.9,1200.7 L408.9,1202.5 L413.9,1204.2 L418.9,1204.7 L423.9,1205.1 L428.9,1205.5 L433.9,1205.5 L438.9,1204.5 L443.9,1203.5 L448.9,1202.5 L453.9,1202.8 L458.9,1203.2 L463.9,1203.5 L468.9,1203.9 L473.9,1205.1 L478.9,1206.8 L483.9,1208.5 L488.9,1209.8 L493.9,1210.2 L498.9,1210.6 L503.9,1210.9 L508.9,1210.4 L513.9,1209.4 L518.9,1208.3 L523.9,1207.9 L528.9,1208.3 L533.9,1208.6 L538.9,1209.0 L543.9,1209.4 L548.9,1211.1 L553.9,1212.9 L558.9,1214.6 L563.9,1215.3 L568.9,1215.7 L573.9,1216.0 L578.9,1216.2 L583.9,1215.2 L588.9,1214.2 L593.9,1213.2 L598.9,1213.4 L603.9,1213.7 L608.9,1214.1 L613.9,1214.5 L618.9,1215.5 L623.9,1217.2 L628.9,1218.9 L633.9,1220.4 L638.9,1220.8 L643.9,1221.1 L648.9,1221.5 L653.9,1221.1 L658.9,1220.1 L663.9,1219.1 L668.9,1218.5 L673.9,1218.8 L678.9,1219.2 L683.9,1219.6 L688.9,1219.9 L693.9,1221.5 L698.9,1223.3 L703.9,1225.0 L708.9,1225.9 L713.9,1226.2 L718.9,1226.6 L723.9,1227.0 L728.9,1226.0 L733.9,1225.0 L738.9,1223.9 L743.9,1223.9 L748.9,1224.3 L753.9,1224.7 L758.9,1225.0 L763.9,1225.9 L768.9,1227.6 L773.9,1229.4 L778.9,1231.0 L783.9,1231.3 L788.9,1231.7 L793.9,1232.1 L798.9,1231.8 L803.9,1230.8 L808.9,1229.8 L813.9,1229.0 L818.9,1229.4 L823.9,1229.8 L828.9,1230.1 L833.9,1230.5 L838.9,1231.9 L843.9,1233.7 L848.9,1235.4 L853.9,1236.4 L858.9,1236.8 L863.9,1237.2 L868.9,1237.5 L873.9,1236.7 L878.9,1235.7 L883.9,1234.7 L888.9,1234.5 L893.9,1234.9 L898.9,1235.2 L903.9,1235.6 L908.9,1236.3 L913.9,1238.0 L918.9,1239.8 L923.9,1241.5 L928.9,1241.9 L933.9,1242.3 L938.9,1242.6 L943.9,1242.6 L948.9,1241.6 L953.9,1240.6 L958.9,1239.6 L963.9,1240.0 L968.9,1240.3 L973.9,1240.7 L978.9,1241.1 L983.9,1242.4 L988.9,1244.1 L993.9,1245.8 L998.9,1247.0 L1003.9,1247.4 L1008.9,1247.7 L1013.9,1248.1 L1018.9,1247.4 L1023.9,1246.4 L1028.9,1245.4 L1033.9,1245.1 L1038.9,1245.4 L1043.9,1245.8 L1048.9,1246.2 L1053.9,1246.7 L1058.9,1248.4 L1063.9,1250.2 L1068.9,1251.9 L1073.9,1252.5 L1078.9,1252.9 L1083.9,1253.2 L1088.9,1253.3 L1093.9,1252.3 L1098.9,1251.3 L1103.9,1250.3 L1108.9,1250.5 L1113.9,1250.9 L1118.9,1251.3 L1123.9,1251.6 L1128.9,1252.8 L1133.9,1254.5 L1138.9,1256.2 L1143.9,1257.6 L1148.9,1258.0 L1153.9,1258.3 L1158.9,1258.7 L1163.9,1258.2 L1168.9,1257.2 L1173.9,1256.2 L1178.9,1255.6 L1183.9,1256.0 L1188.9,1256.4 L1193.9,1256.7 L1198.9,1257.1 L1203.9,1258.8 L1208.9,1260.6 L1213.9,1262.3 L1218.9,1263.1 L1223.9,1263.4 L1228.9,1263.8 L1233.9,1264.0 L1238.9,1263.0 L1243.9,1262.0 L1248.9,1261.0 L1253.9,1261.1 L1258.9,1261.5 L1263.9,1261.8 L1268.9,1262.2 L1273.9,1263.2 L1278.9,1264.9 L1283.9,1266.6 L1287.0,1268.0 M337.9,1207.6 L348.9,1207.6 L353.9,1208.0 L358.9,1208.4 L363.9,1208.4 L368.9,1208.3 L373.9,1208.2 L378.9,1208.3 L383.9,1208.7 L388.9,1209.1 L393.9,1209.4 L398.9,1209.9 L403.9,1210.7 L408.9,1211.5 L413.9,1212.3 L418.9,1212.7 L423.9,1213.1 L428.9,1213.5 L433.9,1213.7 L438.9,1213.6 L443.9,1213.5 L448.9,1213.4 L453.9,1213.8 L458.9,1214.2 L463.9,1214.5 L468.9,1214.9 L473.9,1215.5 L478.9,1216.3 L483.9,1217.2 L488.9,1217.8 L493.9,1218.2 L498.9,1218.6 L503.9,1218.9 L508.9,1219.0 L513.9,1218.9 L518.9,1218.8 L523.9,1218.9 L528.9,1219.3 L533.9,1219.6 L538.9,1220.0 L543.9,1220.4 L548.9,1221.2 L553.9,1222.0 L558.9,1222.8 L563.9,1223.3 L568.9,1223.7 L573.9,1224.0 L578.9,1224.3 L583.9,1224.3 L588.9,1224.2 L593.9,1224.1 L598.9,1224.4 L603.9,1224.7 L608.9,1225.1 L613.9,1225.5 L618.9,1226.0 L623.9,1226.9 L628.9,1227.7 L633.9,1228.4 L638.9,1228.8 L643.9,1229.1 L648.9,1229.5 L653.9,1229.6 L658.9,1229.5 L663.9,1229.4 L668.9,1229.5 L673.9,1229.8 L678.9,1230.2 L683.9,1230.6 L688.9,1230.9 L693.9,1231.7 L698.9,1232.5 L703.9,1233.3 L708.9,1233.9 L713.9,1234.2 L718.9,1234.6 L723.9,1235.0 L728.9,1234.9 L733.9,1234.8 L738.9,1234.7 L743.9,1234.9 L748.9,1235.3 L753.9,1235.7 L758.9,1236.0 L763.9,1236.6 L768.9,1237.4 L773.9,1238.2 L778.9,1239.0 L783.9,1239.3 L788.9,1239.7 L793.9,1240.1 L798.9,1240.2 L803.9,1240.1 L808.9,1240.1 L813.9,1240.0 L818.9,1240.4 L823.9,1240.8 L828.9,1241.1 L833.9,1241.5 L838.9,1242.2 L843.9,1243.0 L848.9,1243.9 L853.9,1244.4 L858.9,1244.8 L863.9,1245.2 L868.9,1245.5 L873.9,1245.5 L878.9,1245.4 L883.9,1245.3 L888.9,1245.5 L893.9,1245.9 L898.9,1246.2 L903.9,1246.6 L908.9,1247.1 L913.9,1247.9 L918.9,1248.7 L923.9,1249.5 L928.9,1249.9 L933.9,1250.3 L938.9,1250.6 L943.9,1250.9 L948.9,1250.8 L953.9,1250.7 L958.9,1250.6 L963.9,1251.0 L968.9,1251.3 L973.9,1251.7 L978.9,1252.1 L983.9,1252.7 L988.9,1253.6 L993.9,1254.4 L998.9,1255.0 L1003.9,1255.4 L1008.9,1255.7 L1013.9,1256.1 L1018.9,1256.1 L1023.9,1256.0 L1028.9,1255.9 L1033.9,1256.1 L1038.9,1256.4 L1043.9,1256.8 L1048.9,1257.2 L1053.9,1257.6 L1058.9,1258.4 L1063.9,1259.2 L1068.9,1260.0 L1073.9,1260.5 L1078.9,1260.9 L1083.9,1261.2 L1088.9,1261.5 L1093.9,1261.4 L1098.9,1261.3 L1103.9,1261.2 L1108.9,1261.5 L1113.9,1261.9 L1118.9,1262.3 L1123.9,1262.6 L1128.9,1263.3 L1133.9,1264.1 L1138.9,1264.9 L1143.9,1265.6 L1148.9,1266.0 L1153.9,1266.3 L1158.9,1266.7 L1163.9,1266.8 L1168.9,1266.7 L1173.9,1266.6 L1178.9,1266.6 L1183.9,1267.0 L1188.9,1267.4 L1193.9,1267.7 L1198.9,1268.1 L1203.9,1268.9 L1208.9,1269.7 L1213.9,1270.6 L1218.9,1271.1 L1223.9,1271.4 L1228.9,1271.8 L1233.9,1272.1 L1238.9,1272.0 L1243.9,1271.9 L1248.9,1271.8 L1253.9,1272.1 L1258.9,1272.5 L1263.9,1272.8 L1268.9,1273.2 L1273.9,1273.8 L1278.9,1274.6 L1283.9,1275.4 L1287.0,1276.0 M343.9,1212.3 L373.9,1214.5 M416.9,1217.6 L446.9,1219.8 M489.9,1222.9 L519.9,1225.1 M562.9,1228.2 L592.9,1230.4 M635.9,1233.6 L665.9,1235.7 M708.9,1238.9 L738.9,1241.1 M781.9,1244.2 L811.9,1246.4 M854.9,1249.5 L884.9,1251.7 M927.9,1254.8 L957.9,1257.0 M1000.9,1260.2 L1030.9,1262.4 M1073.9,1265.5 L1103.9,1267.7 M1146.9,1270.8 L1176.9,1273.0 M1219.9,1276.1 L1249.9,1278.3 M337.9,1207.6 L348.9,1198.6 M399.5,1216.7 L410.0,1204.2 M409.5,1217.4 L420.0,1204.9 M419.5,1218.1 L430.0,1205.6 M472.3,1222.0 L482.8,1209.5 M482.3,1222.7 L492.8,1210.2 M492.3,1223.5 L502.8,1211.0 M545.1,1227.3 L555.6,1214.8 M555.1,1228.0 L565.6,1215.5 M565.1,1228.8 L575.6,1216.3 M617.9,1232.6 L628.4,1220.1 M627.9,1233.3 L638.4,1220.8 M637.9,1234.1 L648.4,1221.6 M690.7,1237.9 L701.2,1225.4 M700.7,1238.6 L711.2,1226.1 M710.7,1239.4 L721.2,1226.9 M763.5,1243.2 L774.0,1230.7 M773.5,1244.0 L784.0,1231.5 M783.5,1244.7 L794.0,1232.2 M836.3,1248.5 L846.8,1236.0 M846.3,1249.3 L856.8,1236.8 M856.3,1250.0 L866.8,1237.5 M909.1,1253.8 L919.6,1241.3 M919.1,1254.6 L929.6,1242.1 M929.1,1255.3 L939.6,1242.8 M981.9,1259.1 L992.4,1246.6 M991.9,1259.9 L1002.4,1247.4 M1001.9,1260.6 L1012.4,1248.1 M1054.7,1264.5 L1065.2,1252.0 M1064.7,1265.2 L1075.2,1252.7 M1074.7,1265.9 L1085.2,1253.4 M1127.5,1269.8 L1138.0,1257.3 M1137.5,1270.5 L1148.0,1258.0 M1147.5,1271.2 L1158.0,1258.7 M1200.3,1275.1 L1210.8,1262.6 M1210.3,1275.8 L1220.8,1263.3 M1220.3,1276.5 L1230.8,1264.0 M1273.1,1280.4 L1283.6,1267.9" stroke="#0808f0" stroke-width="1.30" fill="none" stroke-linejoin="round"/>
<path d="M348.9,1213.1 L1287.0,1281.5" stroke="#8a8a9a" stroke-width="1.00" fill="none" stroke-dasharray="1.5 2"/>
<path d="M316.6,1226.6 L321.6,1226.9 L326.6,1227.3 L331.6,1226.6 L336.6,1225.6 L341.6,1224.6 L346.6,1224.3 L351.6,1224.6 L356.6,1225.0 L361.6,1225.4 L366.6,1225.9 L371.6,1227.7 L376.6,1229.4 L381.6,1231.2 L386.6,1231.7 L391.6,1232.0 L396.6,1232.4 L401.6,1232.4 L406.6,1231.4 L411.6,1230.4 L416.6,1229.4 L421.6,1229.7 L426.6,1230.1 L431.6,1230.5 L436.6,1230.8 L441.6,1232.0 L446.6,1233.7 L451.6,1235.5 L456.6,1236.8 L461.6,1237.2 L466.6,1237.5 L471.6,1237.9 L476.6,1237.3 L481.6,1236.3 L486.6,1235.3 L491.6,1234.8 L496.6,1235.2 L501.6,1235.6 L506.6,1235.9 L511.6,1236.3 L516.6,1238.1 L521.6,1239.8 L526.6,1241.6 L531.6,1242.3 L536.6,1242.6 L541.6,1243.0 L546.6,1243.2 L551.6,1242.2 L556.6,1241.2 L561.6,1240.2 L566.6,1240.3 L571.6,1240.7 L576.6,1241.0 L581.6,1241.4 L586.6,1242.4 L591.6,1244.2 L596.6,1245.9 L601.6,1247.4 L606.6,1247.7 L611.6,1248.1 L616.6,1248.5 L621.6,1248.0 L626.6,1247.0 L631.6,1246.0 L636.6,1245.4 L641.6,1245.8 L646.6,1246.1 L651.6,1246.5 L656.6,1246.9 L661.6,1248.5 L666.6,1250.2 L671.6,1252.0 L676.6,1252.8 L681.6,1253.2 L686.6,1253.6 L691.6,1253.9 L696.6,1252.9 L701.6,1251.9 L706.6,1250.9 L711.6,1250.9 L716.6,1251.2 L721.6,1251.6 L726.6,1252.0 L731.6,1252.8 L736.6,1254.6 L741.6,1256.3 L746.6,1257.9 L751.6,1258.3 L756.6,1258.7 L761.6,1259.0 L766.6,1258.8 L771.6,1257.8 L776.6,1256.8 L781.6,1256.0 L786.6,1256.3 L791.6,1256.7 L796.6,1257.1 L801.6,1257.4 L806.6,1258.9 L811.6,1260.6 L816.6,1262.4 L821.6,1263.4 L826.6,1263.8 L831.6,1264.1 L836.6,1264.5 L841.6,1263.6 L846.6,1262.6 L851.6,1261.6 L856.6,1261.4 L861.6,1261.8 L866.6,1262.2 L871.6,1262.5 L876.6,1263.2 L881.6,1265.0 L886.6,1266.7 L891.6,1268.4 L896.6,1268.9 L901.6,1269.2 L906.6,1269.6 L911.6,1269.5 L916.6,1268.5 L921.6,1267.5 L926.6,1266.5 L931.6,1266.9 L936.6,1267.3 L941.6,1267.6 L946.6,1268.0 L951.6,1269.3 L956.6,1271.0 L961.6,1272.8 L966.6,1274.0 L971.6,1274.3 L976.6,1274.7 L981.6,1275.1 L986.6,1274.4 L991.6,1273.4 L996.6,1272.4 L1001.6,1272.0 L1006.6,1272.4 L1011.6,1272.7 L1016.6,1273.1 L1021.6,1273.6 L1026.6,1275.4 L1031.6,1277.1 L1036.6,1278.8 L1041.6,1279.4 L1046.6,1279.8 L1051.6,1280.2 L1056.6,1280.3 L1061.6,1279.2 L1066.6,1278.2 L1071.6,1277.2 L1076.6,1277.5 L1081.6,1277.8 L1086.6,1278.2 L1091.6,1278.6 L1096.6,1279.7 L1101.6,1281.4 L1106.6,1283.2 L1111.6,1284.5 L1116.6,1284.9 L1121.6,1285.3 L1126.6,1285.6 L1131.6,1285.1 L1136.6,1284.1 L1141.6,1283.1 L1146.6,1282.6 L1151.6,1283.0 L1156.6,1283.3 L1161.6,1283.7 L1166.6,1284.0 L1171.6,1285.8 L1176.6,1287.5 L1181.6,1289.3 L1186.6,1290.0 L1191.6,1290.4 L1196.6,1290.7 L1201.6,1291.0 L1206.6,1290.0 L1211.6,1289.0 L1216.6,1288.0 L1221.6,1288.1 L1226.6,1288.4 L1231.6,1288.8 L1236.6,1289.1 L1241.6,1290.1 L1246.6,1291.8 L1251.6,1293.6 L1254.4,1294.9 M305.6,1234.6 L316.6,1234.6 L321.6,1234.9 L326.6,1235.3 L331.6,1235.3 L336.6,1235.2 L341.6,1235.1 L346.6,1235.3 L351.6,1235.6 L356.6,1236.0 L361.6,1236.4 L366.6,1236.8 L371.6,1237.6 L376.6,1238.4 L381.6,1239.3 L386.6,1239.7 L391.6,1240.0 L396.6,1240.4 L401.6,1240.7 L406.6,1240.6 L411.6,1240.5 L416.6,1240.4 L421.6,1240.7 L426.6,1241.1 L431.6,1241.5 L436.6,1241.8 L441.6,1242.5 L446.6,1243.3 L451.6,1244.1 L456.6,1244.8 L461.6,1245.2 L466.6,1245.5 L471.6,1245.9 L476.6,1245.9 L481.6,1245.8 L486.6,1245.7 L491.6,1245.8 L496.6,1246.2 L501.6,1246.6 L506.6,1246.9 L511.6,1247.3 L516.6,1248.1 L521.6,1249.0 L526.6,1249.8 L531.6,1250.3 L536.6,1250.6 L541.6,1251.0 L546.6,1251.3 L551.6,1251.2 L556.6,1251.1 L561.6,1251.0 L566.6,1251.3 L571.6,1251.7 L576.6,1252.0 L581.6,1252.4 L586.6,1253.0 L591.6,1253.8 L596.6,1254.6 L601.6,1255.4 L606.6,1255.7 L611.6,1256.1 L616.6,1256.5 L621.6,1256.6 L626.6,1256.5 L631.6,1256.4 L636.6,1256.4 L641.6,1256.8 L646.6,1257.1 L651.6,1257.5 L656.6,1257.9 L661.6,1258.7 L666.6,1259.5 L671.6,1260.3 L676.6,1260.8 L681.6,1261.2 L686.6,1261.6 L691.6,1261.9 L696.6,1261.8 L701.6,1261.7 L706.6,1261.6 L711.6,1261.9 L716.6,1262.2 L721.6,1262.6 L726.6,1263.0 L731.6,1263.5 L736.6,1264.3 L741.6,1265.1 L746.6,1265.9 L751.6,1266.3 L756.6,1266.7 L761.6,1267.0 L766.6,1267.2 L771.6,1267.1 L776.6,1267.0 L781.6,1267.0 L786.6,1267.3 L791.6,1267.7 L796.6,1268.1 L801.6,1268.4 L806.6,1269.2 L811.6,1270.0 L816.6,1270.8 L821.6,1271.4 L826.6,1271.8 L831.6,1272.1 L836.6,1272.5 L841.6,1272.4 L846.6,1272.4 L851.6,1272.3 L856.6,1272.4 L861.6,1272.8 L866.6,1273.2 L871.6,1273.5 L876.6,1274.0 L881.6,1274.8 L886.6,1275.7 L891.6,1276.5 L896.6,1276.9 L901.6,1277.2 L906.6,1277.6 L911.6,1277.8 L916.6,1277.7 L921.6,1277.6 L926.6,1277.5 L931.6,1277.9 L936.6,1278.3 L941.6,1278.6 L946.6,1279.0 L951.6,1279.7 L956.6,1280.5 L961.6,1281.3 L966.6,1282.0 L971.6,1282.3 L976.6,1282.7 L981.6,1283.1 L986.6,1283.1 L991.6,1283.0 L996.6,1282.9 L1001.6,1283.0 L1006.6,1283.4 L1011.6,1283.7 L1016.6,1284.1 L1021.6,1284.5 L1026.6,1285.4 L1031.6,1286.2 L1036.6,1287.0 L1041.6,1287.4 L1046.6,1287.8 L1051.6,1288.2 L1056.6,1288.4 L1061.6,1288.3 L1066.6,1288.2 L1071.6,1288.2 L1076.6,1288.5 L1081.6,1288.8 L1086.6,1289.2 L1091.6,1289.6 L1096.6,1290.2 L1101.6,1291.0 L1106.6,1291.8 L1111.6,1292.5 L1116.6,1292.9 L1121.6,1293.3 L1126.6,1293.6 L1131.6,1293.7 L1136.6,1293.6 L1141.6,1293.5 L1146.6,1293.6 L1151.6,1294.0 L1156.6,1294.3 L1161.6,1294.7 L1166.6,1295.0 L1171.6,1295.9 L1176.6,1296.7 L1181.6,1297.5 L1186.6,1298.0 L1191.6,1298.4 L1196.6,1298.7 L1201.6,1299.1 L1206.6,1299.0 L1211.6,1298.9 L1216.6,1298.8 L1221.6,1299.1 L1226.6,1299.4 L1231.6,1299.8 L1236.6,1300.1 L1241.6,1300.7 L1246.6,1301.5 L1251.6,1302.4 L1254.4,1302.9 M311.6,1239.2 L341.6,1241.4 M384.6,1244.5 L414.6,1246.7 M457.6,1249.9 L487.6,1252.0 M530.6,1255.2 L560.6,1257.4 M603.6,1260.5 L633.6,1262.7 M676.6,1265.8 L706.6,1268.0 M749.6,1271.1 L779.6,1273.3 M822.6,1276.5 L852.6,1278.7 M895.6,1281.8 L925.6,1284.0 M968.6,1287.1 L998.6,1289.3 M1041.6,1292.4 L1071.6,1294.6 M1114.6,1297.8 L1144.6,1299.9 M1187.6,1303.1 L1217.6,1305.3 M305.6,1234.6 L316.6,1225.6 M367.2,1243.6 L377.7,1231.1 M377.2,1244.4 L387.7,1231.9 M387.2,1245.1 L397.7,1232.6 M440.0,1248.9 L450.5,1236.4 M450.0,1249.7 L460.5,1237.2 M460.0,1250.4 L470.5,1237.9 M512.8,1254.2 L523.3,1241.7 M522.8,1255.0 L533.3,1242.5 M532.8,1255.7 L543.3,1243.2 M585.6,1259.6 L596.1,1247.1 M595.6,1260.3 L606.1,1247.8 M605.6,1261.0 L616.1,1248.5 M658.4,1264.9 L668.9,1252.4 M668.4,1265.6 L678.9,1253.1 M678.4,1266.3 L688.9,1253.8 M731.2,1270.2 L741.7,1257.7 M741.2,1270.9 L751.7,1258.4 M751.2,1271.6 L761.7,1259.1 M804.0,1275.5 L814.5,1263.0 M814.0,1276.2 L824.5,1263.7 M824.0,1276.9 L834.5,1264.4 M876.8,1280.8 L887.3,1268.3 M886.8,1281.5 L897.3,1269.0 M896.8,1282.2 L907.3,1269.7 M949.6,1286.1 L960.1,1273.6 M959.6,1286.8 L970.1,1274.3 M969.6,1287.5 L980.1,1275.0 M1022.4,1291.4 L1032.9,1278.9 M1032.4,1292.1 L1042.9,1279.6 M1042.4,1292.9 L1052.9,1280.4 M1095.2,1296.7 L1105.7,1284.2 M1105.2,1297.4 L1115.7,1284.9 M1115.2,1298.2 L1125.7,1285.7 M1168.0,1302.0 L1178.5,1289.5 M1178.0,1302.7 L1188.5,1290.2 M1188.0,1303.5 L1198.5,1291.0 M1240.8,1307.3 L1251.3,1294.8" stroke="#0808f0" stroke-width="1.30" fill="none" stroke-linejoin="round"/>
<path d="M316.6,1240.1 L1254.4,1308.4" stroke="#8a8a9a" stroke-width="1.00" fill="none" stroke-dasharray="1.5 2"/>
<path d="M284.3,1253.5 L289.3,1253.9 L294.3,1254.3 L299.3,1253.5 L304.3,1252.5 L309.3,1251.5 L314.3,1251.2 L319.3,1251.6 L324.3,1251.9 L329.3,1252.3 L334.3,1252.9 L339.3,1254.6 L344.3,1256.4 L349.3,1258.1 L354.3,1258.6 L359.3,1259.0 L364.3,1259.4 L369.3,1259.4 L374.3,1258.4 L379.3,1257.4 L384.3,1256.4 L389.3,1256.7 L394.3,1257.0 L399.3,1257.4 L404.3,1257.8 L409.3,1259.0 L414.3,1260.7 L419.3,1262.4 L424.3,1263.7 L429.3,1264.1 L434.3,1264.5 L439.3,1264.8 L444.3,1264.3 L449.3,1263.2 L454.3,1262.2 L459.3,1261.8 L464.3,1262.1 L469.3,1262.5 L474.3,1262.9 L479.3,1263.3 L484.3,1265.0 L489.3,1266.8 L494.3,1268.5 L499.3,1269.2 L504.3,1269.6 L509.3,1269.9 L514.3,1270.1 L519.3,1269.1 L524.3,1268.1 L529.3,1267.1 L534.3,1267.3 L539.3,1267.6 L544.3,1268.0 L549.3,1268.3 L554.3,1269.4 L559.3,1271.1 L564.3,1272.8 L569.3,1274.3 L574.3,1274.7 L579.3,1275.0 L584.3,1275.4 L589.3,1275.0 L594.3,1274.0 L599.3,1273.0 L604.3,1272.4 L609.3,1272.7 L614.3,1273.1 L619.3,1273.4 L624.3,1273.8 L629.3,1275.4 L634.3,1277.2 L639.3,1278.9 L644.3,1279.8 L649.3,1280.1 L654.3,1280.5 L659.3,1280.9 L664.3,1279.9 L669.3,1278.8 L674.3,1277.8 L679.3,1277.8 L684.3,1278.2 L689.3,1278.5 L694.3,1278.9 L699.3,1279.8 L704.3,1281.5 L709.3,1283.2 L714.3,1284.9 L719.3,1285.2 L724.3,1285.6 L729.3,1286.0 L734.3,1285.7 L739.3,1284.7 L744.3,1283.7 L749.3,1282.9 L754.3,1283.3 L759.3,1283.7 L764.3,1284.0 L769.3,1284.4 L774.3,1285.8 L779.3,1287.6 L784.3,1289.3 L789.3,1290.3 L794.3,1290.7 L799.3,1291.1 L804.3,1291.4 L809.3,1290.6 L814.3,1289.6 L819.3,1288.6 L824.3,1288.4 L829.3,1288.8 L834.3,1289.1 L839.3,1289.5 L844.3,1290.2 L849.3,1291.9 L854.3,1293.6 L859.3,1295.4 L864.3,1295.8 L869.3,1296.2 L874.3,1296.5 L879.3,1296.5 L884.3,1295.5 L889.3,1294.4 L894.3,1293.5 L899.3,1293.9 L904.3,1294.2 L909.3,1294.6 L914.3,1295.0 L919.3,1296.2 L924.3,1298.0 L929.3,1299.7 L934.3,1300.9 L939.3,1301.3 L944.3,1301.6 L949.3,1302.0 L954.3,1301.3 L959.3,1300.3 L964.3,1299.3 L969.3,1299.0 L974.3,1299.3 L979.3,1299.7 L984.3,1300.1 L989.3,1300.6 L994.3,1302.3 L999.3,1304.1 L1004.3,1305.8 L1009.3,1306.4 L1014.3,1306.7 L1019.3,1307.1 L1024.3,1307.2 L1029.3,1306.2 L1034.3,1305.2 L1039.3,1304.2 L1044.3,1304.4 L1049.3,1304.8 L1054.3,1305.2 L1059.3,1305.5 L1064.3,1306.7 L1069.3,1308.4 L1074.3,1310.1 L1079.3,1311.5 L1084.3,1311.8 L1089.3,1312.2 L1094.3,1312.6 L1099.3,1312.1 L1104.3,1311.1 L1109.3,1310.0 L1114.3,1309.5 L1119.3,1309.9 L1124.3,1310.3 L1129.3,1310.6 L1134.3,1311.0 L1139.3,1312.7 L1144.3,1314.5 L1149.3,1316.2 L1154.3,1316.9 L1159.3,1317.3 L1164.3,1317.7 L1169.3,1317.9 L1174.3,1316.9 L1179.3,1315.9 L1184.3,1314.9 L1189.3,1315.0 L1194.3,1315.4 L1199.3,1315.7 L1204.3,1316.1 L1209.3,1317.1 L1214.3,1318.8 L1219.3,1320.5 L1221.8,1321.9 M273.3,1261.5 L284.3,1261.5 L289.3,1261.9 L294.3,1262.3 L299.3,1262.3 L304.3,1262.2 L309.3,1262.1 L314.3,1262.2 L319.3,1262.6 L324.3,1262.9 L329.3,1263.3 L334.3,1263.7 L339.3,1264.6 L344.3,1265.4 L349.3,1266.2 L354.3,1266.6 L359.3,1267.0 L364.3,1267.4 L369.3,1267.6 L374.3,1267.5 L379.3,1267.4 L384.3,1267.3 L389.3,1267.7 L394.3,1268.0 L399.3,1268.4 L404.3,1268.8 L409.3,1269.4 L414.3,1270.2 L419.3,1271.1 L424.3,1271.7 L429.3,1272.1 L434.3,1272.5 L439.3,1272.8 L444.3,1272.9 L449.3,1272.8 L454.3,1272.7 L459.3,1272.8 L464.3,1273.1 L469.3,1273.5 L474.3,1273.9 L479.3,1274.3 L484.3,1275.1 L489.3,1275.9 L494.3,1276.7 L499.3,1277.2 L504.3,1277.6 L509.3,1277.9 L514.3,1278.2 L519.3,1278.1 L524.3,1278.1 L529.3,1278.0 L534.3,1278.3 L539.3,1278.6 L544.3,1279.0 L549.3,1279.3 L554.3,1279.9 L559.3,1280.7 L564.3,1281.6 L569.3,1282.3 L574.3,1282.7 L579.3,1283.0 L584.3,1283.4 L589.3,1283.5 L594.3,1283.4 L599.3,1283.3 L604.3,1283.4 L609.3,1283.7 L614.3,1284.1 L619.3,1284.4 L624.3,1284.8 L629.3,1285.6 L634.3,1286.4 L639.3,1287.2 L644.3,1287.8 L649.3,1288.1 L654.3,1288.5 L659.3,1288.9 L664.3,1288.8 L669.3,1288.7 L674.3,1288.6 L679.3,1288.8 L684.3,1289.2 L689.3,1289.5 L694.3,1289.9 L699.3,1290.4 L704.3,1291.3 L709.3,1292.1 L714.3,1292.9 L719.3,1293.2 L724.3,1293.6 L729.3,1294.0 L734.3,1294.1 L739.3,1294.0 L744.3,1293.9 L749.3,1293.9 L754.3,1294.3 L759.3,1294.7 L764.3,1295.0 L769.3,1295.4 L774.3,1296.1 L779.3,1296.9 L784.3,1297.8 L789.3,1298.3 L794.3,1298.7 L799.3,1299.1 L804.3,1299.4 L809.3,1299.4 L814.3,1299.3 L819.3,1299.2 L824.3,1299.4 L829.3,1299.8 L834.3,1300.1 L839.3,1300.5 L844.3,1301.0 L849.3,1301.8 L854.3,1302.6 L859.3,1303.4 L864.3,1303.8 L869.3,1304.2 L874.3,1304.5 L879.3,1304.8 L884.3,1304.7 L889.3,1304.6 L894.3,1304.5 L899.3,1304.9 L904.3,1305.2 L909.3,1305.6 L914.3,1306.0 L919.3,1306.6 L924.3,1307.4 L929.3,1308.3 L934.3,1308.9 L939.3,1309.3 L944.3,1309.6 L949.3,1310.0 L954.3,1310.0 L959.3,1309.9 L964.3,1309.8 L969.3,1310.0 L974.3,1310.3 L979.3,1310.7 L984.3,1311.1 L989.3,1311.5 L994.3,1312.3 L999.3,1313.1 L1004.3,1313.9 L1009.3,1314.4 L1014.3,1314.7 L1019.3,1315.1 L1024.3,1315.4 L1029.3,1315.3 L1034.3,1315.2 L1039.3,1315.1 L1044.3,1315.4 L1049.3,1315.8 L1054.3,1316.2 L1059.3,1316.5 L1064.3,1317.1 L1069.3,1318.0 L1074.3,1318.8 L1079.3,1319.5 L1084.3,1319.8 L1089.3,1320.2 L1094.3,1320.6 L1099.3,1320.6 L1104.3,1320.6 L1109.3,1320.5 L1114.3,1320.5 L1119.3,1320.9 L1124.3,1321.3 L1129.3,1321.6 L1134.3,1322.0 L1139.3,1322.8 L1144.3,1323.6 L1149.3,1324.5 L1154.3,1324.9 L1159.3,1325.3 L1164.3,1325.7 L1169.3,1326.0 L1174.3,1325.9 L1179.3,1325.8 L1184.3,1325.7 L1189.3,1326.0 L1194.3,1326.4 L1199.3,1326.7 L1204.3,1327.1 L1209.3,1327.7 L1214.3,1328.5 L1219.3,1329.3 L1221.8,1329.9 M279.3,1266.2 L309.3,1268.3 M352.3,1271.5 L382.3,1273.7 M425.3,1276.8 L455.3,1279.0 M498.3,1282.1 L528.3,1284.3 M571.3,1287.4 L601.3,1289.6 M644.3,1292.8 L674.3,1295.0 M717.3,1298.1 L747.3,1300.3 M790.3,1303.4 L820.3,1305.6 M863.3,1308.7 L893.3,1310.9 M936.3,1314.1 L966.3,1316.2 M1009.3,1319.4 L1039.3,1321.6 M1082.3,1324.7 L1112.3,1326.9 M1155.3,1330.0 L1185.3,1332.2 M273.3,1261.5 L284.3,1252.5 M334.9,1270.6 L345.4,1258.1 M344.9,1271.3 L355.4,1258.8 M354.9,1272.0 L365.4,1259.5 M407.7,1275.9 L418.2,1263.4 M417.7,1276.6 L428.2,1264.1 M427.7,1277.3 L438.2,1264.8 M480.5,1281.2 L491.0,1268.7 M490.5,1281.9 L501.0,1269.4 M500.5,1282.7 L511.0,1270.2 M553.3,1286.5 L563.8,1274.0 M563.3,1287.2 L573.8,1274.7 M573.3,1288.0 L583.8,1275.5 M626.1,1291.8 L636.6,1279.3 M636.1,1292.5 L646.6,1280.0 M646.1,1293.3 L656.6,1280.8 M698.9,1297.1 L709.4,1284.6 M708.9,1297.8 L719.4,1285.3 M718.9,1298.6 L729.4,1286.1 M771.7,1302.4 L782.2,1289.9 M781.7,1303.2 L792.2,1290.7 M791.7,1303.9 L802.2,1291.4 M844.5,1307.7 L855.0,1295.2 M854.5,1308.5 L865.0,1296.0 M864.5,1309.2 L875.0,1296.7 M917.3,1313.0 L927.8,1300.5 M927.3,1313.8 L937.8,1301.3 M937.3,1314.5 L947.8,1302.0 M990.1,1318.3 L1000.6,1305.8 M1000.1,1319.1 L1010.6,1306.6 M1010.1,1319.8 L1020.6,1307.3 M1062.9,1323.6 L1073.4,1311.1 M1072.9,1324.4 L1083.4,1311.9 M1082.9,1325.1 L1093.4,1312.6 M1135.7,1329.0 L1146.2,1316.5 M1145.7,1329.7 L1156.2,1317.2 M1155.7,1330.4 L1166.2,1317.9 M1208.5,1334.3 L1219.0,1321.8" stroke="#0808f0" stroke-width="1.30" fill="none" stroke-linejoin="round"/>
<path d="M284.3,1267.0 L1221.8,1335.4" stroke="#8a8a9a" stroke-width="1.00" fill="none" stroke-dasharray="1.5 2"/>
<path d="M252.0,1280.5 L257.0,1280.8 L262.0,1281.2 L267.0,1280.5 L272.0,1279.5 L277.0,1278.4 L282.0,1278.2 L287.0,1278.5 L292.0,1278.9 L297.0,1279.3 L302.0,1279.8 L307.0,1281.6 L312.0,1283.3 L317.0,1285.0 L322.0,1285.6 L327.0,1285.9 L332.0,1286.3 L337.0,1286.3 L342.0,1285.3 L347.0,1284.3 L352.0,1283.3 L357.0,1283.6 L362.0,1284.0 L367.0,1284.4 L372.0,1284.7 L377.0,1285.9 L382.0,1287.6 L387.0,1289.4 L392.0,1290.7 L397.0,1291.0 L402.0,1291.4 L407.0,1291.8 L412.0,1291.2 L417.0,1290.2 L422.0,1289.2 L427.0,1288.7 L432.0,1289.1 L437.0,1289.5 L442.0,1289.8 L447.0,1290.2 L452.0,1292.0 L457.0,1293.7 L462.0,1295.5 L467.0,1296.1 L472.0,1296.5 L477.0,1296.9 L482.0,1297.1 L487.0,1296.1 L492.0,1295.1 L497.0,1294.0 L502.0,1294.2 L507.0,1294.6 L512.0,1294.9 L517.0,1295.3 L522.0,1296.3 L527.0,1298.0 L532.0,1299.8 L537.0,1301.2 L542.0,1301.6 L547.0,1302.0 L552.0,1302.3 L557.0,1301.9 L562.0,1300.9 L567.0,1299.9 L572.0,1299.3 L577.0,1299.7 L582.0,1300.0 L587.0,1300.4 L592.0,1300.8 L597.0,1302.4 L602.0,1304.1 L607.0,1305.9 L612.0,1306.7 L617.0,1307.1 L622.0,1307.4 L627.0,1307.8 L632.0,1306.8 L637.0,1305.8 L642.0,1304.8 L647.0,1304.8 L652.0,1305.1 L657.0,1305.5 L662.0,1305.9 L667.0,1306.7 L672.0,1308.5 L677.0,1310.2 L682.0,1311.8 L687.0,1312.2 L692.0,1312.5 L697.0,1312.9 L702.0,1312.7 L707.0,1311.7 L712.0,1310.7 L717.0,1309.9 L722.0,1310.2 L727.0,1310.6 L732.0,1311.0 L737.0,1311.3 L742.0,1312.8 L747.0,1314.5 L752.0,1316.3 L757.0,1317.3 L762.0,1317.6 L767.0,1318.0 L772.0,1318.4 L777.0,1317.5 L782.0,1316.5 L787.0,1315.5 L792.0,1315.3 L797.0,1315.7 L802.0,1316.1 L807.0,1316.4 L812.0,1317.1 L817.0,1318.9 L822.0,1320.6 L827.0,1322.3 L832.0,1322.8 L837.0,1323.1 L842.0,1323.5 L847.0,1323.4 L852.0,1322.4 L857.0,1321.4 L862.0,1320.4 L867.0,1320.8 L872.0,1321.2 L877.0,1321.5 L882.0,1321.9 L887.0,1323.2 L892.0,1324.9 L897.0,1326.7 L902.0,1327.9 L907.0,1328.2 L912.0,1328.6 L917.0,1328.9 L922.0,1328.3 L927.0,1327.3 L932.0,1326.3 L937.0,1325.9 L942.0,1326.3 L947.0,1326.6 L952.0,1327.0 L957.0,1327.5 L962.0,1329.3 L967.0,1331.0 L972.0,1332.7 L977.0,1333.3 L982.0,1333.7 L987.0,1334.1 L992.0,1334.1 L997.0,1333.1 L1002.0,1332.1 L1007.0,1331.1 L1012.0,1331.4 L1017.0,1331.7 L1022.0,1332.1 L1027.0,1332.5 L1032.0,1333.6 L1037.0,1335.3 L1042.0,1337.1 L1047.0,1338.4 L1052.0,1338.8 L1057.0,1339.2 L1062.0,1339.5 L1067.0,1339.0 L1072.0,1338.0 L1077.0,1337.0 L1082.0,1336.5 L1087.0,1336.8 L1092.0,1337.2 L1097.0,1337.6 L1102.0,1337.9 L1107.0,1339.7 L1112.0,1341.4 L1117.0,1343.1 L1122.0,1343.9 L1127.0,1344.3 L1132.0,1344.6 L1137.0,1344.9 L1142.0,1343.9 L1147.0,1342.9 L1152.0,1341.9 L1157.0,1341.9 L1162.0,1342.3 L1167.0,1342.7 L1172.0,1343.0 L1177.0,1344.0 L1182.0,1345.7 L1187.0,1347.5 L1189.2,1348.8 M241.0,1288.5 L252.0,1288.5 L257.0,1288.8 L262.0,1289.2 L267.0,1289.2 L272.0,1289.1 L277.0,1289.0 L282.0,1289.2 L287.0,1289.5 L292.0,1289.9 L297.0,1290.3 L302.0,1290.7 L307.0,1291.5 L312.0,1292.3 L317.0,1293.2 L322.0,1293.6 L327.0,1293.9 L332.0,1294.3 L337.0,1294.6 L342.0,1294.5 L347.0,1294.4 L352.0,1294.3 L357.0,1294.6 L362.0,1295.0 L367.0,1295.4 L372.0,1295.7 L377.0,1296.4 L382.0,1297.2 L387.0,1298.0 L392.0,1298.7 L397.0,1299.0 L402.0,1299.4 L407.0,1299.8 L412.0,1299.8 L417.0,1299.7 L422.0,1299.6 L427.0,1299.7 L432.0,1300.1 L437.0,1300.5 L442.0,1300.8 L447.0,1301.2 L452.0,1302.0 L457.0,1302.8 L462.0,1303.7 L467.0,1304.1 L472.0,1304.5 L477.0,1304.9 L482.0,1305.2 L487.0,1305.1 L492.0,1305.0 L497.0,1304.9 L502.0,1305.2 L507.0,1305.6 L512.0,1305.9 L517.0,1306.3 L522.0,1306.9 L527.0,1307.7 L532.0,1308.5 L537.0,1309.2 L542.0,1309.6 L547.0,1310.0 L552.0,1310.3 L557.0,1310.4 L562.0,1310.4 L567.0,1310.3 L572.0,1310.3 L577.0,1310.7 L582.0,1311.0 L587.0,1311.4 L592.0,1311.8 L597.0,1312.5 L602.0,1313.4 L607.0,1314.2 L612.0,1314.7 L617.0,1315.1 L622.0,1315.4 L627.0,1315.8 L632.0,1315.7 L637.0,1315.6 L642.0,1315.5 L647.0,1315.8 L652.0,1316.1 L657.0,1316.5 L662.0,1316.9 L667.0,1317.4 L672.0,1318.2 L677.0,1319.0 L682.0,1319.8 L687.0,1320.2 L692.0,1320.5 L697.0,1320.9 L702.0,1321.1 L707.0,1321.0 L712.0,1320.9 L717.0,1320.9 L722.0,1321.2 L727.0,1321.6 L732.0,1322.0 L737.0,1322.3 L742.0,1323.1 L747.0,1323.9 L752.0,1324.7 L757.0,1325.3 L762.0,1325.6 L767.0,1326.0 L772.0,1326.4 L777.0,1326.3 L782.0,1326.2 L787.0,1326.2 L792.0,1326.3 L797.0,1326.7 L802.0,1327.1 L807.0,1327.4 L812.0,1327.9 L817.0,1328.7 L822.0,1329.5 L827.0,1330.4 L832.0,1330.8 L837.0,1331.1 L842.0,1331.5 L847.0,1331.7 L852.0,1331.6 L857.0,1331.5 L862.0,1331.4 L867.0,1331.8 L872.0,1332.2 L877.0,1332.5 L882.0,1332.9 L887.0,1333.6 L892.0,1334.4 L897.0,1335.2 L902.0,1335.9 L907.0,1336.2 L912.0,1336.6 L917.0,1336.9 L922.0,1337.0 L927.0,1336.9 L932.0,1336.8 L937.0,1336.9 L942.0,1337.3 L947.0,1337.6 L952.0,1338.0 L957.0,1338.4 L962.0,1339.2 L967.0,1340.1 L972.0,1340.9 L977.0,1341.3 L982.0,1341.7 L987.0,1342.1 L992.0,1342.3 L997.0,1342.2 L1002.0,1342.1 L1007.0,1342.0 L1012.0,1342.4 L1017.0,1342.7 L1022.0,1343.1 L1027.0,1343.5 L1032.0,1344.1 L1037.0,1344.9 L1042.0,1345.7 L1047.0,1346.4 L1052.0,1346.8 L1057.0,1347.2 L1062.0,1347.5 L1067.0,1347.6 L1072.0,1347.5 L1077.0,1347.4 L1082.0,1347.5 L1087.0,1347.8 L1092.0,1348.2 L1097.0,1348.6 L1102.0,1348.9 L1107.0,1349.8 L1112.0,1350.6 L1117.0,1351.4 L1122.0,1351.9 L1127.0,1352.3 L1132.0,1352.6 L1137.0,1353.0 L1142.0,1352.9 L1147.0,1352.8 L1152.0,1352.7 L1157.0,1352.9 L1162.0,1353.3 L1167.0,1353.7 L1172.0,1354.0 L1177.0,1354.6 L1182.0,1355.4 L1187.0,1356.2 L1189.2,1356.8 M247.0,1293.1 L277.0,1295.3 M320.0,1298.4 L350.0,1300.6 M393.0,1303.7 L423.0,1305.9 M466.0,1309.1 L496.0,1311.3 M539.0,1314.4 L569.0,1316.6 M612.0,1319.7 L642.0,1321.9 M685.0,1325.0 L715.0,1327.2 M758.0,1330.4 L788.0,1332.5 M831.0,1335.7 L861.0,1337.9 M904.0,1341.0 L934.0,1343.2 M977.0,1346.3 L1007.0,1348.5 M1050.0,1351.6 L1080.0,1353.8 M1123.0,1357.0 L1153.0,1359.2 M241.0,1288.5 L252.0,1279.5 M302.6,1297.5 L313.1,1285.0 M312.6,1298.3 L323.1,1285.8 M322.6,1299.0 L333.1,1286.5 M375.4,1302.8 L385.9,1290.3 M385.4,1303.6 L395.9,1291.1 M395.4,1304.3 L405.9,1291.8 M448.2,1308.1 L458.7,1295.6 M458.2,1308.9 L468.7,1296.4 M468.2,1309.6 L478.7,1297.1 M521.0,1313.4 L531.5,1300.9 M531.0,1314.2 L541.5,1301.7 M541.0,1314.9 L551.5,1302.4 M593.8,1318.8 L604.3,1306.3 M603.8,1319.5 L614.3,1307.0 M613.8,1320.2 L624.3,1307.7 M666.6,1324.1 L677.1,1311.6 M676.6,1324.8 L687.1,1312.3 M686.6,1325.5 L697.1,1313.0 M739.4,1329.4 L749.9,1316.9 M749.4,1330.1 L759.9,1317.6 M759.4,1330.8 L769.9,1318.3 M812.2,1334.7 L822.7,1322.2 M822.2,1335.4 L832.7,1322.9 M832.2,1336.1 L842.7,1323.6 M885.0,1340.0 L895.5,1327.5 M895.0,1340.7 L905.5,1328.2 M905.0,1341.4 L915.5,1328.9 M957.8,1345.3 L968.3,1332.8 M967.8,1346.0 L978.3,1333.5 M977.8,1346.7 L988.3,1334.2 M1030.6,1350.6 L1041.1,1338.1 M1040.6,1351.3 L1051.1,1338.8 M1050.6,1352.1 L1061.1,1339.6 M1103.4,1355.9 L1113.9,1343.4 M1113.4,1356.6 L1123.9,1344.1 M1123.4,1357.4 L1133.9,1344.9 M1176.2,1361.2 L1186.7,1348.7" stroke="#0808f0" stroke-width="1.30" fill="none" stroke-linejoin="round"/>
<path d="M252.0,1294.0 L1189.2,1362.3" stroke="#8a8a9a" stroke-width="1.00" fill="none" stroke-dasharray="1.5 2"/>
<path d="M219.7,1307.4 L224.7,1307.8 L229.7,1308.1 L234.7,1307.4 L239.7,1306.4 L244.7,1305.4 L249.7,1305.1 L254.7,1305.5 L259.7,1305.8 L264.7,1306.2 L269.7,1306.8 L274.7,1308.5 L279.7,1310.3 L284.7,1312.0 L289.7,1312.5 L294.7,1312.9 L299.7,1313.2 L304.7,1313.3 L309.7,1312.3 L314.7,1311.3 L319.7,1310.3 L324.7,1310.6 L329.7,1310.9 L334.7,1311.3 L339.7,1311.7 L344.7,1312.8 L349.7,1314.6 L354.7,1316.3 L359.7,1317.6 L364.7,1318.0 L369.7,1318.4 L374.7,1318.7 L379.7,1318.1 L384.7,1317.1 L389.7,1316.1 L394.7,1315.7 L399.7,1316.0 L404.7,1316.4 L409.7,1316.8 L414.7,1317.2 L419.7,1318.9 L424.7,1320.7 L429.7,1322.4 L434.7,1323.1 L439.7,1323.5 L444.7,1323.8 L449.7,1324.0 L454.7,1323.0 L459.7,1322.0 L464.7,1321.0 L469.7,1321.1 L474.7,1321.5 L479.7,1321.9 L484.7,1322.2 L489.7,1323.3 L494.7,1325.0 L499.7,1326.7 L504.7,1328.2 L509.7,1328.6 L514.7,1328.9 L519.7,1329.3 L524.7,1328.9 L529.7,1327.9 L534.7,1326.9 L539.7,1326.2 L544.7,1326.6 L549.7,1327.0 L554.7,1327.3 L559.7,1327.7 L564.7,1329.3 L569.7,1331.1 L574.7,1332.8 L579.7,1333.7 L584.7,1334.0 L589.7,1334.4 L594.7,1334.8 L599.7,1333.7 L604.7,1332.7 L609.7,1331.7 L614.7,1331.7 L619.7,1332.1 L624.7,1332.4 L629.7,1332.8 L634.7,1333.7 L639.7,1335.4 L644.7,1337.1 L649.7,1338.8 L654.7,1339.1 L659.7,1339.5 L664.7,1339.9 L669.7,1339.6 L674.7,1338.6 L679.7,1337.6 L684.7,1336.8 L689.7,1337.2 L694.7,1337.5 L699.7,1337.9 L704.7,1338.3 L709.7,1339.7 L714.7,1341.5 L719.7,1343.2 L724.7,1344.2 L729.7,1344.6 L734.7,1345.0 L739.7,1345.3 L744.7,1344.5 L749.7,1343.5 L754.7,1342.5 L759.7,1342.3 L764.7,1342.6 L769.7,1343.0 L774.7,1343.4 L779.7,1344.1 L784.7,1345.8 L789.7,1347.5 L794.7,1349.3 L799.7,1349.7 L804.7,1350.1 L809.7,1350.4 L814.7,1350.4 L819.7,1349.3 L824.7,1348.3 L829.7,1347.4 L834.7,1347.7 L839.7,1348.1 L844.7,1348.5 L849.7,1348.8 L854.7,1350.1 L859.7,1351.9 L864.7,1353.6 L869.7,1354.8 L874.7,1355.2 L879.7,1355.5 L884.7,1355.9 L889.7,1355.2 L894.7,1354.2 L899.7,1353.2 L904.7,1352.9 L909.7,1353.2 L914.7,1353.6 L919.7,1353.9 L924.7,1354.5 L929.7,1356.2 L934.7,1357.9 L939.7,1359.7 L944.7,1360.3 L949.7,1360.6 L954.7,1361.0 L959.7,1361.1 L964.7,1360.1 L969.7,1359.1 L974.7,1358.1 L979.7,1358.3 L984.7,1358.7 L989.7,1359.0 L994.7,1359.4 L999.7,1360.5 L1004.7,1362.3 L1009.7,1364.0 L1014.7,1365.4 L1019.7,1365.7 L1024.7,1366.1 L1029.7,1366.5 L1034.7,1366.0 L1039.7,1364.9 L1044.7,1363.9 L1049.7,1363.4 L1054.7,1363.8 L1059.7,1364.2 L1064.7,1364.5 L1069.7,1364.9 L1074.7,1366.6 L1079.7,1368.4 L1084.7,1370.1 L1089.7,1370.8 L1094.7,1371.2 L1099.7,1371.6 L1104.7,1371.8 L1109.7,1370.8 L1114.7,1369.8 L1119.7,1368.8 L1124.7,1368.9 L1129.7,1369.3 L1134.7,1369.6 L1139.7,1370.0 L1144.7,1370.9 L1149.7,1372.7 L1154.7,1374.4 L1156.6,1375.7 M208.7,1315.4 L219.7,1315.4 L224.7,1315.8 L229.7,1316.1 L234.7,1316.1 L239.7,1316.0 L244.7,1316.0 L249.7,1316.1 L254.7,1316.5 L259.7,1316.8 L264.7,1317.2 L269.7,1317.6 L274.7,1318.5 L279.7,1319.3 L284.7,1320.1 L289.7,1320.5 L294.7,1320.9 L299.7,1321.2 L304.7,1321.5 L309.7,1321.4 L314.7,1321.3 L319.7,1321.2 L324.7,1321.6 L329.7,1321.9 L334.7,1322.3 L339.7,1322.7 L344.7,1323.3 L349.7,1324.1 L354.7,1324.9 L359.7,1325.6 L364.7,1326.0 L369.7,1326.4 L374.7,1326.7 L379.7,1326.8 L384.7,1326.7 L389.7,1326.6 L394.7,1326.7 L399.7,1327.0 L404.7,1327.4 L409.7,1327.8 L414.7,1328.1 L419.7,1329.0 L424.7,1329.8 L429.7,1330.6 L434.7,1331.1 L439.7,1331.5 L444.7,1331.8 L449.7,1332.1 L454.7,1332.0 L459.7,1331.9 L464.7,1331.8 L469.7,1332.1 L474.7,1332.5 L479.7,1332.9 L484.7,1333.2 L489.7,1333.8 L494.7,1334.6 L499.7,1335.5 L504.7,1336.2 L509.7,1336.6 L514.7,1336.9 L519.7,1337.3 L524.7,1337.4 L529.7,1337.3 L534.7,1337.2 L539.7,1337.2 L544.7,1337.6 L549.7,1338.0 L554.7,1338.3 L559.7,1338.7 L564.7,1339.5 L569.7,1340.3 L574.7,1341.1 L579.7,1341.7 L584.7,1342.0 L589.7,1342.4 L594.7,1342.8 L599.7,1342.7 L604.7,1342.6 L609.7,1342.5 L614.7,1342.7 L619.7,1343.1 L624.7,1343.4 L629.7,1343.8 L634.7,1344.3 L639.7,1345.2 L644.7,1346.0 L649.7,1346.8 L654.7,1347.1 L659.7,1347.5 L664.7,1347.9 L669.7,1348.0 L674.7,1347.9 L679.7,1347.8 L684.7,1347.8 L689.7,1348.2 L694.7,1348.5 L699.7,1348.9 L704.7,1349.3 L709.7,1350.0 L714.7,1350.8 L719.7,1351.6 L724.7,1352.2 L729.7,1352.6 L734.7,1353.0 L739.7,1353.3 L744.7,1353.3 L749.7,1353.2 L754.7,1353.1 L759.7,1353.3 L764.7,1353.6 L769.7,1354.0 L774.7,1354.4 L779.7,1354.8 L784.7,1355.7 L789.7,1356.5 L794.7,1357.3 L799.7,1357.7 L804.7,1358.1 L809.7,1358.4 L814.7,1358.6 L819.7,1358.6 L824.7,1358.5 L829.7,1358.4 L834.7,1358.7 L839.7,1359.1 L844.7,1359.5 L849.7,1359.8 L854.7,1360.5 L859.7,1361.3 L864.7,1362.2 L869.7,1362.8 L874.7,1363.2 L879.7,1363.5 L884.7,1363.9 L889.7,1363.9 L894.7,1363.8 L899.7,1363.7 L904.7,1363.9 L909.7,1364.2 L914.7,1364.6 L919.7,1364.9 L924.7,1365.4 L929.7,1366.2 L934.7,1367.0 L939.7,1367.8 L944.7,1368.3 L949.7,1368.6 L954.7,1369.0 L959.7,1369.3 L964.7,1369.2 L969.7,1369.1 L974.7,1369.0 L979.7,1369.3 L984.7,1369.7 L989.7,1370.0 L994.7,1370.4 L999.7,1371.0 L1004.7,1371.9 L1009.7,1372.7 L1014.7,1373.4 L1019.7,1373.7 L1024.7,1374.1 L1029.7,1374.5 L1034.7,1374.5 L1039.7,1374.4 L1044.7,1374.3 L1049.7,1374.4 L1054.7,1374.8 L1059.7,1375.2 L1064.7,1375.5 L1069.7,1375.9 L1074.7,1376.7 L1079.7,1377.5 L1084.7,1378.3 L1089.7,1378.8 L1094.7,1379.2 L1099.7,1379.6 L1104.7,1379.9 L1109.7,1379.8 L1114.7,1379.7 L1119.7,1379.6 L1124.7,1379.9 L1129.7,1380.3 L1134.7,1380.6 L1139.7,1381.0 L1144.7,1381.5 L1149.7,1382.4 L1154.7,1383.2 L1156.6,1383.7 M214.7,1320.1 L244.7,1322.2 M287.7,1325.4 L317.7,1327.6 M360.7,1330.7 L390.7,1332.9 M433.7,1336.0 L463.7,1338.2 M506.7,1341.3 L536.7,1343.5 M579.7,1346.7 L609.7,1348.8 M652.7,1352.0 L682.7,1354.2 M725.7,1357.3 L755.7,1359.5 M798.7,1362.6 L828.7,1364.8 M871.7,1367.9 L901.7,1370.1 M944.7,1373.3 L974.7,1375.5 M1017.7,1378.6 L1047.7,1380.8 M1090.7,1383.9 L1120.7,1386.1 M208.7,1315.4 L219.7,1306.4 M270.3,1324.5 L280.8,1312.0 M280.3,1325.2 L290.8,1312.7 M290.3,1325.9 L300.8,1313.4 M343.1,1329.8 L353.6,1317.3 M353.1,1330.5 L363.6,1318.0 M363.1,1331.2 L373.6,1318.7 M415.9,1335.1 L426.4,1322.6 M425.9,1335.8 L436.4,1323.3 M435.9,1336.5 L446.4,1324.0 M488.7,1340.4 L499.2,1327.9 M498.7,1341.1 L509.2,1328.6 M508.7,1341.8 L519.2,1329.3 M561.5,1345.7 L572.0,1333.2 M571.5,1346.4 L582.0,1333.9 M581.5,1347.2 L592.0,1334.7 M634.3,1351.0 L644.8,1338.5 M644.3,1351.7 L654.8,1339.2 M654.3,1352.5 L664.8,1340.0 M707.1,1356.3 L717.6,1343.8 M717.1,1357.0 L727.6,1344.5 M727.1,1357.8 L737.6,1345.3 M779.9,1361.6 L790.4,1349.1 M789.9,1362.3 L800.4,1349.8 M799.9,1363.1 L810.4,1350.6 M852.7,1366.9 L863.2,1354.4 M862.7,1367.7 L873.2,1355.2 M872.7,1368.4 L883.2,1355.9 M925.5,1372.2 L936.0,1359.7 M935.5,1373.0 L946.0,1360.5 M945.5,1373.7 L956.0,1361.2 M998.3,1377.5 L1008.8,1365.0 M1008.3,1378.3 L1018.8,1365.8 M1018.3,1379.0 L1028.8,1366.5 M1071.1,1382.8 L1081.6,1370.3 M1081.1,1383.6 L1091.6,1371.1 M1091.1,1384.3 L1101.6,1371.8 M1143.9,1388.2 L1154.4,1375.7" stroke="#0808f0" stroke-width="1.30" fill="none" stroke-linejoin="round"/>
<path d="M219.7,1320.9 L1156.6,1389.2" stroke="#8a8a9a" stroke-width="1.00" fill="none" stroke-dasharray="1.5 2"/>
<path d="M187.4,1334.4 L192.4,1334.7 L197.4,1335.1 L202.4,1334.4 L207.4,1333.3 L212.4,1332.3 L217.4,1332.0 L222.4,1332.4 L227.4,1332.8 L232.4,1333.1 L237.4,1333.7 L242.4,1335.5 L247.4,1337.2 L252.4,1338.9 L257.4,1339.5 L262.4,1339.8 L267.4,1340.2 L272.4,1340.2 L277.4,1339.2 L282.4,1338.2 L287.4,1337.2 L292.4,1337.5 L297.4,1337.9 L302.4,1338.2 L307.4,1338.6 L312.4,1339.8 L317.4,1341.5 L322.4,1343.3 L327.4,1344.6 L332.4,1344.9 L337.4,1345.3 L342.4,1345.7 L347.4,1345.1 L352.4,1344.1 L357.4,1343.1 L362.4,1342.6 L367.4,1343.0 L372.4,1343.3 L377.4,1343.7 L382.4,1344.1 L387.4,1345.9 L392.4,1347.6 L397.4,1349.3 L402.4,1350.0 L407.4,1350.4 L412.4,1350.8 L417.4,1351.0 L422.4,1350.0 L427.4,1348.9 L432.4,1347.9 L437.4,1348.1 L442.4,1348.5 L447.4,1348.8 L452.4,1349.2 L457.4,1350.2 L462.4,1351.9 L467.4,1353.7 L472.4,1355.1 L477.4,1355.5 L482.4,1355.9 L487.4,1356.2 L492.4,1355.8 L497.4,1354.8 L502.4,1353.8 L507.4,1353.2 L512.4,1353.6 L517.4,1353.9 L522.4,1354.3 L527.4,1354.6 L532.4,1356.3 L537.4,1358.0 L542.4,1359.7 L547.4,1360.6 L552.4,1361.0 L557.4,1361.3 L562.4,1361.7 L567.4,1360.7 L572.4,1359.7 L577.4,1358.7 L582.4,1358.7 L587.4,1359.0 L592.4,1359.4 L597.4,1359.8 L602.4,1360.6 L607.4,1362.3 L612.4,1364.1 L617.4,1365.7 L622.4,1366.1 L627.4,1366.4 L632.4,1366.8 L637.4,1366.6 L642.4,1365.6 L647.4,1364.5 L652.4,1363.8 L657.4,1364.1 L662.4,1364.5 L667.4,1364.9 L672.4,1365.2 L677.4,1366.7 L682.4,1368.4 L687.4,1370.2 L692.4,1371.2 L697.4,1371.5 L702.4,1371.9 L707.4,1372.3 L712.4,1371.4 L717.4,1370.4 L722.4,1369.4 L727.4,1369.2 L732.4,1369.6 L737.4,1370.0 L742.4,1370.3 L747.4,1371.0 L752.4,1372.7 L757.4,1374.5 L762.4,1376.2 L767.4,1376.6 L772.4,1377.0 L777.4,1377.4 L782.4,1377.3 L787.4,1376.3 L792.4,1375.3 L797.4,1374.3 L802.4,1374.7 L807.4,1375.1 L812.4,1375.4 L817.4,1375.8 L822.4,1377.1 L827.4,1378.8 L832.4,1380.6 L837.4,1381.7 L842.4,1382.1 L847.4,1382.5 L852.4,1382.8 L857.4,1382.2 L862.4,1381.2 L867.4,1380.1 L872.4,1379.8 L877.4,1380.2 L882.4,1380.5 L887.4,1380.9 L892.4,1381.4 L897.4,1383.2 L902.4,1384.9 L907.4,1386.6 L912.4,1387.2 L917.4,1387.6 L922.4,1387.9 L927.4,1388.0 L932.4,1387.0 L937.4,1386.0 L942.4,1385.0 L947.4,1385.3 L952.4,1385.6 L957.4,1386.0 L962.4,1386.4 L967.4,1387.5 L972.4,1389.2 L977.4,1391.0 L982.4,1392.3 L987.4,1392.7 L992.4,1393.0 L997.4,1393.4 L1002.4,1392.9 L1007.4,1391.9 L1012.4,1390.9 L1017.4,1390.4 L1022.4,1390.7 L1027.4,1391.1 L1032.4,1391.5 L1037.4,1391.8 L1042.4,1393.6 L1047.4,1395.3 L1052.4,1397.0 L1057.4,1397.8 L1062.4,1398.1 L1067.4,1398.5 L1072.4,1398.8 L1077.4,1397.8 L1082.4,1396.7 L1087.4,1395.7 L1092.4,1395.8 L1097.4,1396.2 L1102.4,1396.6 L1107.4,1396.9 L1112.4,1397.9 L1117.4,1399.6 L1122.4,1401.4 L1124.0,1402.6 M176.4,1342.4 L187.4,1342.4 L192.4,1342.7 L197.4,1343.1 L202.4,1343.1 L207.4,1343.0 L212.4,1342.9 L217.4,1343.0 L222.4,1343.4 L227.4,1343.8 L232.4,1344.1 L237.4,1344.6 L242.4,1345.4 L247.4,1346.2 L252.4,1347.0 L257.4,1347.5 L262.4,1347.8 L267.4,1348.2 L272.4,1348.4 L277.4,1348.4 L282.4,1348.3 L287.4,1348.2 L292.4,1348.5 L297.4,1348.9 L302.4,1349.2 L307.4,1349.6 L312.4,1350.2 L317.4,1351.1 L322.4,1351.9 L327.4,1352.6 L332.4,1352.9 L337.4,1353.3 L342.4,1353.7 L347.4,1353.7 L352.4,1353.6 L357.4,1353.5 L362.4,1353.6 L367.4,1354.0 L372.4,1354.3 L377.4,1354.7 L382.4,1355.1 L387.4,1355.9 L392.4,1356.7 L397.4,1357.6 L402.4,1358.0 L407.4,1358.4 L412.4,1358.8 L417.4,1359.1 L422.4,1359.0 L427.4,1358.9 L432.4,1358.8 L437.4,1359.1 L442.4,1359.5 L447.4,1359.8 L452.4,1360.2 L457.4,1360.8 L462.4,1361.6 L467.4,1362.4 L472.4,1363.1 L477.4,1363.5 L482.4,1363.9 L487.4,1364.2 L492.4,1364.3 L497.4,1364.2 L502.4,1364.2 L507.4,1364.2 L512.4,1364.6 L517.4,1364.9 L522.4,1365.3 L527.4,1365.6 L532.4,1366.4 L537.4,1367.3 L542.4,1368.1 L547.4,1368.6 L552.4,1369.0 L557.4,1369.3 L562.4,1369.7 L567.4,1369.6 L572.4,1369.5 L577.4,1369.4 L582.4,1369.7 L587.4,1370.0 L592.4,1370.4 L597.4,1370.8 L602.4,1371.3 L607.4,1372.1 L612.4,1372.9 L617.4,1373.7 L622.4,1374.1 L627.4,1374.4 L632.4,1374.8 L637.4,1375.0 L642.4,1374.9 L647.4,1374.8 L652.4,1374.8 L657.4,1375.1 L662.4,1375.5 L667.4,1375.9 L672.4,1376.2 L677.4,1376.9 L682.4,1377.8 L687.4,1378.6 L692.4,1379.2 L697.4,1379.5 L702.4,1379.9 L707.4,1380.3 L712.4,1380.2 L717.4,1380.1 L722.4,1380.0 L727.4,1380.2 L732.4,1380.6 L737.4,1381.0 L742.4,1381.3 L747.4,1381.8 L752.4,1382.6 L757.4,1383.4 L762.4,1384.3 L767.4,1384.6 L772.4,1385.0 L777.4,1385.4 L782.4,1385.6 L787.4,1385.5 L792.4,1385.4 L797.4,1385.3 L802.4,1385.7 L807.4,1386.1 L812.4,1386.4 L817.4,1386.8 L822.4,1387.5 L827.4,1388.3 L832.4,1389.1 L837.4,1389.7 L842.4,1390.1 L847.4,1390.5 L852.4,1390.8 L857.4,1390.9 L862.4,1390.8 L867.4,1390.7 L872.4,1390.8 L877.4,1391.2 L882.4,1391.5 L887.4,1391.9 L892.4,1392.3 L897.4,1393.1 L902.4,1394.0 L907.4,1394.8 L912.4,1395.2 L917.4,1395.6 L922.4,1395.9 L927.4,1396.2 L932.4,1396.1 L937.4,1396.0 L942.4,1395.9 L947.4,1396.3 L952.4,1396.6 L957.4,1397.0 L962.4,1397.4 L967.4,1398.0 L972.4,1398.8 L977.4,1399.6 L982.4,1400.3 L987.4,1400.7 L992.4,1401.0 L997.4,1401.4 L1002.4,1401.5 L1007.4,1401.4 L1012.4,1401.3 L1017.4,1401.4 L1022.4,1401.7 L1027.4,1402.1 L1032.4,1402.5 L1037.4,1402.8 L1042.4,1403.6 L1047.4,1404.5 L1052.4,1405.3 L1057.4,1405.8 L1062.4,1406.1 L1067.4,1406.5 L1072.4,1406.8 L1077.4,1406.7 L1082.4,1406.7 L1087.4,1406.6 L1092.4,1406.8 L1097.4,1407.2 L1102.4,1407.6 L1107.4,1407.9 L1112.4,1408.5 L1117.4,1409.3 L1122.4,1410.1 L1124.0,1410.6 M182.4,1347.0 L212.4,1349.2 M255.4,1352.3 L285.4,1354.5 M328.4,1357.6 L358.4,1359.8 M401.4,1363.0 L431.4,1365.1 M474.4,1368.3 L504.4,1370.5 M547.4,1373.6 L577.4,1375.8 M620.4,1378.9 L650.4,1381.1 M693.4,1384.2 L723.4,1386.4 M766.4,1389.6 L796.4,1391.8 M839.4,1394.9 L869.4,1397.1 M912.4,1400.2 L942.4,1402.4 M985.4,1405.5 L1015.4,1407.7 M1058.4,1410.9 L1088.4,1413.0 M176.4,1342.4 L187.4,1333.4 M238.0,1351.4 L248.5,1338.9 M248.0,1352.1 L258.5,1339.6 M258.0,1352.9 L268.5,1340.4 M310.8,1356.7 L321.3,1344.2 M320.8,1357.5 L331.3,1345.0 M330.8,1358.2 L341.3,1345.7 M383.6,1362.0 L394.1,1349.5 M393.6,1362.8 L404.1,1350.3 M403.6,1363.5 L414.1,1351.0 M456.4,1367.3 L466.9,1354.8 M466.4,1368.1 L476.9,1355.6 M476.4,1368.8 L486.9,1356.3 M529.2,1372.6 L539.7,1360.1 M539.2,1373.4 L549.7,1360.9 M549.2,1374.1 L559.7,1361.6 M602.0,1378.0 L612.5,1365.5 M612.0,1378.7 L622.5,1366.2 M622.0,1379.4 L632.5,1366.9 M674.8,1383.3 L685.3,1370.8 M684.8,1384.0 L695.3,1371.5 M694.8,1384.7 L705.3,1372.2 M747.6,1388.6 L758.1,1376.1 M757.6,1389.3 L768.1,1376.8 M767.6,1390.0 L778.1,1377.5 M820.4,1393.9 L830.9,1381.4 M830.4,1394.6 L840.9,1382.1 M840.4,1395.3 L850.9,1382.8 M893.2,1399.2 L903.7,1386.7 M903.2,1399.9 L913.7,1387.4 M913.2,1400.6 L923.7,1388.1 M966.0,1404.5 L976.5,1392.0 M976.0,1405.2 L986.5,1392.7 M986.0,1405.9 L996.5,1393.4 M1038.8,1409.8 L1049.3,1397.3 M1048.8,1410.5 L1059.3,1398.0 M1058.8,1411.3 L1069.3,1398.8 M1111.6,1415.1 L1122.1,1402.6" stroke="#0808f0" stroke-width="1.30" fill="none" stroke-linejoin="round"/>
<path d="M187.4,1347.9 L1124.0,1416.1" stroke="#8a8a9a" stroke-width="1.00" fill="none" stroke-dasharray="1.5 2"/>
<path d="M1672.0,1149.6 L1677.0,1150.0 L1682.0,1150.3 L1687.0,1150.5 L1692.0,1149.5 L1697.0,1148.4 L1702.0,1147.4 L1707.0,1147.6 L1712.0,1148.0 L1717.0,1148.4 L1722.0,1148.7 L1727.0,1149.8 L1730.0,1153.8 M1661.0,1157.6 L1672.0,1157.6 L1677.0,1158.0 L1682.0,1158.3 L1687.0,1158.6 L1692.0,1158.5 L1697.0,1158.4 L1702.0,1158.3 L1707.0,1158.6 L1712.0,1159.0 L1717.0,1159.4 L1722.0,1159.7 L1727.0,1160.3 L1730.0,1161.8 M1667.0,1162.2 L1697.0,1164.4 M1661.0,1157.6 L1672.0,1148.6" stroke="#ff1010" stroke-width="1.30" fill="none" stroke-linejoin="round"/>
<path d="M1672.0,1163.1 L1730.0,1167.3" stroke="#8a8a9a" stroke-width="1.00" fill="none" stroke-dasharray="1.5 2"/>
<path d="M1639.4,1176.5 L1644.4,1176.9 L1649.4,1177.2 L1654.4,1177.5 L1659.4,1176.5 L1664.4,1175.5 L1669.4,1174.4 L1674.4,1174.6 L1679.4,1174.9 L1684.4,1175.3 L1689.4,1175.7 L1694.4,1176.6 L1699.4,1178.4 L1704.4,1180.1 L1709.4,1181.6 L1714.4,1182.0 L1719.4,1182.3 L1724.4,1182.7 L1729.4,1182.3 L1730.0,1183.1 M1628.4,1184.5 L1639.4,1184.5 L1644.4,1184.9 L1649.4,1185.2 L1654.4,1185.6 L1659.4,1185.5 L1664.4,1185.4 L1669.4,1185.3 L1674.4,1185.6 L1679.4,1185.9 L1684.4,1186.3 L1689.4,1186.7 L1694.4,1187.2 L1699.4,1188.1 L1704.4,1188.9 L1709.4,1189.6 L1714.4,1190.0 L1719.4,1190.3 L1724.4,1190.7 L1729.4,1190.8 L1730.0,1191.1 M1634.4,1189.1 L1664.4,1191.3 M1707.4,1194.5 L1730.0,1196.1 M1628.4,1184.5 L1639.4,1175.5 M1693.5,1193.8 L1704.0,1181.3 M1703.5,1194.5 L1714.0,1182.0 M1713.5,1195.3 L1724.0,1182.8" stroke="#ff1010" stroke-width="1.30" fill="none" stroke-linejoin="round"/>
<path d="M1639.4,1190.0 L1730.0,1196.6" stroke="#8a8a9a" stroke-width="1.00" fill="none" stroke-dasharray="1.5 2"/>
<path d="M1606.8,1203.4 L1611.8,1203.8 L1616.8,1204.2 L1621.8,1204.5 L1626.8,1203.5 L1631.8,1202.5 L1636.8,1201.4 L1641.8,1201.5 L1646.8,1201.9 L1651.8,1202.2 L1656.8,1202.6 L1661.8,1203.5 L1666.8,1205.2 L1671.8,1207.0 L1676.8,1208.5 L1681.8,1208.9 L1686.8,1209.3 L1691.8,1209.6 L1696.8,1209.3 L1701.8,1208.3 L1706.8,1207.3 L1711.8,1206.6 L1716.8,1207.0 L1721.8,1207.3 L1726.8,1207.7 L1730.0,1212.4 M1595.8,1211.4 L1606.8,1211.4 L1611.8,1211.8 L1616.8,1212.2 L1621.8,1212.5 L1626.8,1212.4 L1631.8,1212.3 L1636.8,1212.2 L1641.8,1212.5 L1646.8,1212.9 L1651.8,1213.2 L1656.8,1213.6 L1661.8,1214.1 L1666.8,1214.9 L1671.8,1215.8 L1676.8,1216.5 L1681.8,1216.9 L1686.8,1217.3 L1691.8,1217.6 L1696.8,1217.8 L1701.8,1217.7 L1706.8,1217.6 L1711.8,1217.6 L1716.8,1218.0 L1721.8,1218.3 L1726.8,1218.7 L1730.0,1220.4 M1601.8,1216.1 L1631.8,1218.3 M1674.8,1221.4 L1704.8,1223.6 M1595.8,1211.4 L1606.8,1202.4 M1661.2,1220.8 L1671.7,1208.3 M1671.2,1221.5 L1681.7,1209.0 M1681.2,1222.2 L1691.7,1209.7" stroke="#ff1010" stroke-width="1.30" fill="none" stroke-linejoin="round"/>
<path d="M1606.8,1216.9 L1730.0,1225.9" stroke="#8a8a9a" stroke-width="1.00" fill="none" stroke-dasharray="1.5 2"/>
<path d="M1574.2,1230.4 L1579.2,1230.7 L1584.2,1231.1 L1589.2,1231.5 L1594.2,1230.5 L1599.2,1229.5 L1604.2,1228.5 L1609.2,1228.4 L1614.2,1228.8 L1619.2,1229.1 L1624.2,1229.5 L1629.2,1230.3 L1634.2,1232.1 L1639.2,1233.8 L1644.2,1235.5 L1649.2,1235.8 L1654.2,1236.2 L1659.2,1236.6 L1664.2,1236.3 L1669.2,1235.3 L1674.2,1234.3 L1679.2,1233.5 L1684.2,1233.9 L1689.2,1234.2 L1694.2,1234.6 L1699.2,1235.0 L1704.2,1236.4 L1709.2,1238.1 L1714.2,1239.9 L1719.2,1240.9 L1724.2,1241.3 L1729.2,1241.7 L1730.0,1241.7 M1563.2,1238.4 L1574.2,1238.4 L1579.2,1238.7 L1584.2,1239.1 L1589.2,1239.5 L1594.2,1239.4 L1599.2,1239.3 L1604.2,1239.2 L1609.2,1239.4 L1614.2,1239.8 L1619.2,1240.1 L1624.2,1240.5 L1629.2,1241.0 L1634.2,1241.8 L1639.2,1242.7 L1644.2,1243.5 L1649.2,1243.8 L1654.2,1244.2 L1659.2,1244.6 L1664.2,1244.7 L1669.2,1244.6 L1674.2,1244.5 L1679.2,1244.5 L1684.2,1244.9 L1689.2,1245.2 L1694.2,1245.6 L1699.2,1246.0 L1704.2,1246.7 L1709.2,1247.5 L1714.2,1248.3 L1719.2,1248.9 L1724.2,1249.3 L1729.2,1249.7 L1730.0,1249.7 M1569.2,1243.0 L1599.2,1245.2 M1642.2,1248.3 L1672.2,1250.5 M1715.2,1253.6 L1730.0,1254.7 M1563.2,1238.4 L1574.2,1229.4 M1628.9,1247.7 L1639.4,1235.2 M1638.9,1248.4 L1649.4,1235.9 M1648.9,1249.2 L1659.4,1236.7 M1701.7,1253.0 L1712.2,1240.5 M1711.7,1253.7 L1722.2,1241.2 M1721.7,1254.5 L1732.2,1242.0" stroke="#ff1010" stroke-width="1.30" fill="none" stroke-linejoin="round"/>
<path d="M1574.2,1243.9 L1730.0,1255.2" stroke="#8a8a9a" stroke-width="1.00" fill="none" stroke-dasharray="1.5 2"/>
<path d="M1541.6,1257.3 L1546.6,1257.6 L1551.6,1258.0 L1556.6,1258.4 L1561.6,1257.5 L1566.6,1256.5 L1571.6,1255.5 L1576.6,1255.3 L1581.6,1255.7 L1586.6,1256.1 L1591.6,1256.4 L1596.6,1257.2 L1601.6,1258.9 L1606.6,1260.6 L1611.6,1262.4 L1616.6,1262.8 L1621.6,1263.1 L1626.6,1263.5 L1631.6,1263.3 L1636.6,1262.3 L1641.6,1261.3 L1646.6,1260.4 L1651.6,1260.8 L1656.6,1261.2 L1661.6,1261.5 L1666.6,1261.9 L1671.6,1263.2 L1676.6,1265.0 L1681.6,1266.7 L1686.6,1267.9 L1691.6,1268.2 L1696.6,1268.6 L1701.6,1268.9 L1706.6,1268.2 L1711.6,1267.2 L1716.6,1266.2 L1721.6,1265.9 L1726.6,1266.3 L1730.0,1271.0 M1530.6,1265.3 L1541.6,1265.3 L1546.6,1265.6 L1551.6,1266.0 L1556.6,1266.4 L1561.6,1266.3 L1566.6,1266.2 L1571.6,1266.1 L1576.6,1266.3 L1581.6,1266.7 L1586.6,1267.1 L1591.6,1267.4 L1596.6,1267.9 L1601.6,1268.7 L1606.6,1269.6 L1611.6,1270.4 L1616.6,1270.8 L1621.6,1271.1 L1626.6,1271.5 L1631.6,1271.7 L1636.6,1271.6 L1641.6,1271.5 L1646.6,1271.4 L1651.6,1271.8 L1656.6,1272.2 L1661.6,1272.5 L1666.6,1272.9 L1671.6,1273.6 L1676.6,1274.4 L1681.6,1275.2 L1686.6,1275.9 L1691.6,1276.2 L1696.6,1276.6 L1701.6,1276.9 L1706.6,1276.9 L1711.6,1276.9 L1716.6,1276.8 L1721.6,1276.9 L1726.6,1277.3 L1730.0,1279.0 M1536.6,1269.9 L1566.6,1272.1 M1609.6,1275.2 L1639.6,1277.4 M1682.6,1280.6 L1712.6,1282.7 M1530.6,1265.3 L1541.6,1256.3 M1596.6,1274.7 L1607.1,1262.2 M1606.6,1275.4 L1617.1,1262.9 M1616.6,1276.1 L1627.1,1263.6 M1669.4,1280.0 L1679.9,1267.5 M1679.4,1280.7 L1689.9,1268.2 M1689.4,1281.4 L1699.9,1268.9" stroke="#ff1010" stroke-width="1.30" fill="none" stroke-linejoin="round"/>
<path d="M1541.6,1270.8 L1730.0,1284.5" stroke="#8a8a9a" stroke-width="1.00" fill="none" stroke-dasharray="1.5 2"/>
<path d="M1509.0,1284.2 L1514.0,1284.6 L1519.0,1284.9 L1524.0,1285.3 L1529.0,1284.5 L1534.0,1283.5 L1539.0,1282.5 L1544.0,1282.3 L1549.0,1282.6 L1554.0,1283.0 L1559.0,1283.4 L1564.0,1284.0 L1569.0,1285.8 L1574.0,1287.5 L1579.0,1289.2 L1584.0,1289.7 L1589.0,1290.0 L1594.0,1290.4 L1599.0,1290.4 L1604.0,1289.3 L1609.0,1288.3 L1614.0,1287.4 L1619.0,1287.7 L1624.0,1288.1 L1629.0,1288.5 L1634.0,1288.8 L1639.0,1290.1 L1644.0,1291.8 L1649.0,1293.6 L1654.0,1294.8 L1659.0,1295.1 L1664.0,1295.5 L1669.0,1295.9 L1674.0,1295.2 L1679.0,1294.2 L1684.0,1293.2 L1689.0,1292.8 L1694.0,1293.2 L1699.0,1293.6 L1704.0,1293.9 L1709.0,1294.4 L1714.0,1296.2 L1719.0,1297.9 L1724.0,1299.6 L1729.0,1300.2 L1730.0,1300.3 M1498.0,1292.2 L1509.0,1292.2 L1514.0,1292.6 L1519.0,1292.9 L1524.0,1293.3 L1529.0,1293.3 L1534.0,1293.2 L1539.0,1293.1 L1544.0,1293.3 L1549.0,1293.6 L1554.0,1294.0 L1559.0,1294.4 L1564.0,1294.8 L1569.0,1295.6 L1574.0,1296.5 L1579.0,1297.3 L1584.0,1297.7 L1589.0,1298.0 L1594.0,1298.4 L1599.0,1298.6 L1604.0,1298.5 L1609.0,1298.4 L1614.0,1298.4 L1619.0,1298.7 L1624.0,1299.1 L1629.0,1299.5 L1634.0,1299.8 L1639.0,1300.5 L1644.0,1301.3 L1649.0,1302.1 L1654.0,1302.8 L1659.0,1303.1 L1664.0,1303.5 L1669.0,1303.9 L1674.0,1303.9 L1679.0,1303.8 L1684.0,1303.7 L1689.0,1303.8 L1694.0,1304.2 L1699.0,1304.6 L1704.0,1304.9 L1709.0,1305.3 L1714.0,1306.2 L1719.0,1307.0 L1724.0,1307.8 L1729.0,1308.2 L1730.0,1308.3 M1504.0,1296.8 L1534.0,1299.0 M1577.0,1302.2 L1607.0,1304.4 M1650.0,1307.5 L1680.0,1309.7 M1723.0,1312.8 L1730.0,1313.3 M1498.0,1292.2 L1509.0,1283.2 M1564.3,1301.6 L1574.8,1289.1 M1574.3,1302.3 L1584.8,1289.8 M1584.3,1303.1 L1594.8,1290.6 M1637.1,1306.9 L1647.6,1294.4 M1647.1,1307.6 L1657.6,1295.1 M1657.1,1308.4 L1667.6,1295.9 M1709.9,1312.2 L1720.4,1299.7 M1719.9,1312.9 L1730.4,1300.4" stroke="#ff1010" stroke-width="1.30" fill="none" stroke-linejoin="round"/>
<path d="M1509.0,1297.7 L1730.0,1313.8" stroke="#8a8a9a" stroke-width="1.00" fill="none" stroke-dasharray="1.5 2"/>
<path d="M1476.4,1311.1 L1481.4,1311.5 L1486.4,1311.9 L1491.4,1312.2 L1496.4,1311.5 L1501.4,1310.5 L1506.4,1309.5 L1511.4,1309.2 L1516.4,1309.5 L1521.4,1309.9 L1526.4,1310.3 L1531.4,1310.9 L1536.4,1312.6 L1541.4,1314.3 L1546.4,1316.1 L1551.4,1316.6 L1556.4,1317.0 L1561.4,1317.3 L1566.4,1317.4 L1571.4,1316.4 L1576.4,1315.3 L1581.4,1314.3 L1586.4,1314.6 L1591.4,1315.0 L1596.4,1315.4 L1601.4,1315.7 L1606.4,1316.9 L1611.4,1318.7 L1616.4,1320.4 L1621.4,1321.7 L1626.4,1322.1 L1631.4,1322.4 L1636.4,1322.8 L1641.4,1322.2 L1646.4,1321.2 L1651.4,1320.2 L1656.4,1319.8 L1661.4,1320.1 L1666.4,1320.5 L1671.4,1320.8 L1676.4,1321.3 L1681.4,1323.0 L1686.4,1324.7 L1691.4,1326.5 L1696.4,1327.2 L1701.4,1327.5 L1706.4,1327.9 L1711.4,1328.1 L1716.4,1327.1 L1721.4,1326.1 L1726.4,1325.1 L1730.0,1329.6 M1465.4,1319.1 L1476.4,1319.1 L1481.4,1319.5 L1486.4,1319.9 L1491.4,1320.2 L1496.4,1320.2 L1501.4,1320.1 L1506.4,1320.0 L1511.4,1320.2 L1516.4,1320.5 L1521.4,1320.9 L1526.4,1321.3 L1531.4,1321.7 L1536.4,1322.5 L1541.4,1323.4 L1546.4,1324.2 L1551.4,1324.6 L1556.4,1325.0 L1561.4,1325.3 L1566.4,1325.6 L1571.4,1325.5 L1576.4,1325.4 L1581.4,1325.3 L1586.4,1325.6 L1591.4,1326.0 L1596.4,1326.4 L1601.4,1326.7 L1606.4,1327.4 L1611.4,1328.2 L1616.4,1329.0 L1621.4,1329.7 L1626.4,1330.1 L1631.4,1330.4 L1636.4,1330.8 L1641.4,1330.8 L1646.4,1330.8 L1651.4,1330.7 L1656.4,1330.8 L1661.4,1331.1 L1666.4,1331.5 L1671.4,1331.8 L1676.4,1332.2 L1681.4,1333.0 L1686.4,1333.9 L1691.4,1334.7 L1696.4,1335.2 L1701.4,1335.5 L1706.4,1335.9 L1711.4,1336.2 L1716.4,1336.1 L1721.4,1336.0 L1726.4,1335.9 L1730.0,1337.6 M1471.4,1323.8 L1501.4,1326.0 M1544.4,1329.1 L1574.4,1331.3 M1617.4,1334.4 L1647.4,1336.6 M1690.4,1339.7 L1720.4,1341.9 M1465.4,1319.1 L1476.4,1310.1 M1532.0,1328.5 L1542.5,1316.0 M1542.0,1329.3 L1552.5,1316.8 M1552.0,1330.0 L1562.5,1317.5 M1604.8,1333.9 L1615.3,1321.4 M1614.8,1334.6 L1625.3,1322.1 M1624.8,1335.3 L1635.3,1322.8 M1677.6,1339.2 L1688.1,1326.7 M1687.6,1339.9 L1698.1,1327.4 M1697.6,1340.6 L1708.1,1328.1" stroke="#ff1010" stroke-width="1.30" fill="none" stroke-linejoin="round"/>
<path d="M1476.4,1324.6 L1730.0,1343.1" stroke="#8a8a9a" stroke-width="1.00" fill="none" stroke-dasharray="1.5 2"/>
<path d="M1443.8,1338.1 L1448.8,1338.4 L1453.8,1338.8 L1458.8,1339.1 L1463.8,1338.5 L1468.8,1337.5 L1473.8,1336.5 L1478.8,1336.1 L1483.8,1336.5 L1488.8,1336.8 L1493.8,1337.2 L1498.8,1337.7 L1503.8,1339.4 L1508.8,1341.2 L1513.8,1342.9 L1518.8,1343.5 L1523.8,1343.9 L1528.8,1344.2 L1533.8,1344.4 L1538.8,1343.4 L1543.8,1342.3 L1548.8,1341.3 L1553.8,1341.6 L1558.8,1341.9 L1563.8,1342.3 L1568.8,1342.7 L1573.8,1343.8 L1578.8,1345.5 L1583.8,1347.2 L1588.8,1348.6 L1593.8,1349.0 L1598.8,1349.4 L1603.8,1349.7 L1608.8,1349.2 L1613.8,1348.2 L1618.8,1347.2 L1623.8,1346.7 L1628.8,1347.0 L1633.8,1347.4 L1638.8,1347.8 L1643.8,1348.1 L1648.8,1349.8 L1653.8,1351.6 L1658.8,1353.3 L1663.8,1354.1 L1668.8,1354.5 L1673.8,1354.8 L1678.8,1355.1 L1683.8,1354.1 L1688.8,1353.1 L1693.8,1352.1 L1698.8,1352.1 L1703.8,1352.5 L1708.8,1352.9 L1713.8,1353.2 L1718.8,1354.2 L1723.8,1355.9 L1728.8,1357.6 L1730.0,1358.9 M1432.8,1346.1 L1443.8,1346.1 L1448.8,1346.4 L1453.8,1346.8 L1458.8,1347.1 L1463.8,1347.2 L1468.8,1347.1 L1473.8,1347.0 L1478.8,1347.1 L1483.8,1347.5 L1488.8,1347.8 L1493.8,1348.2 L1498.8,1348.6 L1503.8,1349.4 L1508.8,1350.3 L1513.8,1351.1 L1518.8,1351.5 L1523.8,1351.9 L1528.8,1352.2 L1533.8,1352.5 L1538.8,1352.4 L1543.8,1352.3 L1548.8,1352.3 L1553.8,1352.6 L1558.8,1352.9 L1563.8,1353.3 L1568.8,1353.7 L1573.8,1354.3 L1578.8,1355.1 L1583.8,1355.9 L1588.8,1356.6 L1593.8,1357.0 L1598.8,1357.4 L1603.8,1357.7 L1608.8,1357.8 L1613.8,1357.7 L1618.8,1357.6 L1623.8,1357.7 L1628.8,1358.0 L1633.8,1358.4 L1638.8,1358.8 L1643.8,1359.1 L1648.8,1359.9 L1653.8,1360.8 L1658.8,1361.6 L1663.8,1362.1 L1668.8,1362.5 L1673.8,1362.8 L1678.8,1363.2 L1683.8,1363.1 L1688.8,1363.0 L1693.8,1362.9 L1698.8,1363.1 L1703.8,1363.5 L1708.8,1363.9 L1713.8,1364.2 L1718.8,1364.8 L1723.8,1365.6 L1728.8,1366.4 L1730.0,1366.9 M1438.8,1350.7 L1468.8,1352.9 M1511.8,1356.0 L1541.8,1358.2 M1584.8,1361.3 L1614.8,1363.5 M1657.8,1366.7 L1687.8,1368.8 M1432.8,1346.1 L1443.8,1337.1 M1499.7,1355.5 L1510.2,1343.0 M1509.7,1356.2 L1520.2,1343.7 M1519.7,1357.0 L1530.2,1344.5 M1572.5,1360.8 L1583.0,1348.3 M1582.5,1361.5 L1593.0,1349.0 M1592.5,1362.3 L1603.0,1349.8 M1645.3,1366.1 L1655.8,1353.6 M1655.3,1366.8 L1665.8,1354.3 M1665.3,1367.6 L1675.8,1355.1 M1718.1,1371.4 L1728.6,1358.9" stroke="#ff1010" stroke-width="1.30" fill="none" stroke-linejoin="round"/>
<path d="M1443.8,1351.6 L1730.0,1372.4" stroke="#8a8a9a" stroke-width="1.00" fill="none" stroke-dasharray="1.5 2"/>
<path d="M1411.2,1365.0 L1416.2,1365.3 L1421.2,1365.7 L1426.2,1366.1 L1431.2,1365.5 L1436.2,1364.5 L1441.2,1363.5 L1446.2,1363.0 L1451.2,1363.4 L1456.2,1363.8 L1461.2,1364.1 L1466.2,1364.5 L1471.2,1366.3 L1476.2,1368.0 L1481.2,1369.7 L1486.2,1370.4 L1491.2,1370.8 L1496.2,1371.2 L1501.2,1371.4 L1506.2,1370.4 L1511.2,1369.4 L1516.2,1368.3 L1521.2,1368.5 L1526.2,1368.9 L1531.2,1369.2 L1536.2,1369.6 L1541.2,1370.6 L1546.2,1372.3 L1551.2,1374.1 L1556.2,1375.5 L1561.2,1375.9 L1566.2,1376.3 L1571.2,1376.6 L1576.2,1376.2 L1581.2,1375.2 L1586.2,1374.2 L1591.2,1373.6 L1596.2,1374.0 L1601.2,1374.3 L1606.2,1374.7 L1611.2,1375.1 L1616.2,1376.7 L1621.2,1378.4 L1626.2,1380.2 L1631.2,1381.0 L1636.2,1381.4 L1641.2,1381.7 L1646.2,1382.1 L1651.2,1381.1 L1656.2,1380.1 L1661.2,1379.1 L1666.2,1379.1 L1671.2,1379.4 L1676.2,1379.8 L1681.2,1380.2 L1686.2,1381.0 L1691.2,1382.8 L1696.2,1384.5 L1701.2,1386.1 L1706.2,1386.5 L1711.2,1386.8 L1716.2,1387.2 L1721.2,1387.0 L1726.2,1386.0 L1730.0,1388.2 M1400.2,1373.0 L1411.2,1373.0 L1416.2,1373.3 L1421.2,1373.7 L1426.2,1374.1 L1431.2,1374.1 L1436.2,1374.0 L1441.2,1373.9 L1446.2,1374.0 L1451.2,1374.4 L1456.2,1374.8 L1461.2,1375.1 L1466.2,1375.5 L1471.2,1376.3 L1476.2,1377.1 L1481.2,1378.0 L1486.2,1378.4 L1491.2,1378.8 L1496.2,1379.2 L1501.2,1379.5 L1506.2,1379.4 L1511.2,1379.3 L1516.2,1379.2 L1521.2,1379.5 L1526.2,1379.9 L1531.2,1380.2 L1536.2,1380.6 L1541.2,1381.2 L1546.2,1382.0 L1551.2,1382.8 L1556.2,1383.5 L1561.2,1383.9 L1566.2,1384.3 L1571.2,1384.6 L1576.2,1384.7 L1581.2,1384.7 L1586.2,1384.6 L1591.2,1384.6 L1596.2,1385.0 L1601.2,1385.3 L1606.2,1385.7 L1611.2,1386.1 L1616.2,1386.8 L1621.2,1387.7 L1626.2,1388.5 L1631.2,1389.0 L1636.2,1389.4 L1641.2,1389.7 L1646.2,1390.1 L1651.2,1390.0 L1656.2,1389.9 L1661.2,1389.8 L1666.2,1390.1 L1671.2,1390.4 L1676.2,1390.8 L1681.2,1391.2 L1686.2,1391.7 L1691.2,1392.5 L1696.2,1393.3 L1701.2,1394.1 L1706.2,1394.5 L1711.2,1394.8 L1716.2,1395.2 L1721.2,1395.4 L1726.2,1395.3 L1730.0,1396.2 M1406.2,1377.6 L1436.2,1379.8 M1479.2,1382.9 L1509.2,1385.1 M1552.2,1388.3 L1582.2,1390.4 M1625.2,1393.6 L1655.2,1395.8 M1698.2,1398.9 L1728.2,1401.1 M1400.2,1373.0 L1411.2,1364.0 M1467.4,1382.4 L1477.9,1369.9 M1477.4,1383.2 L1487.9,1370.7 M1487.4,1383.9 L1497.9,1371.4 M1540.2,1387.7 L1550.7,1375.2 M1550.2,1388.5 L1560.7,1376.0 M1560.2,1389.2 L1570.7,1376.7 M1613.0,1393.1 L1623.5,1380.6 M1623.0,1393.8 L1633.5,1381.3 M1633.0,1394.5 L1643.5,1382.0 M1685.8,1398.4 L1696.3,1385.9 M1695.8,1399.1 L1706.3,1386.6 M1705.8,1399.8 L1716.3,1387.3" stroke="#ff1010" stroke-width="1.30" fill="none" stroke-linejoin="round"/>
<path d="M1411.2,1378.5 L1730.0,1401.7" stroke="#8a8a9a" stroke-width="1.00" fill="none" stroke-dasharray="1.5 2"/>
<path d="M1378.6,1391.9 L1383.6,1392.3 L1388.6,1392.6 L1393.6,1393.0 L1398.6,1392.5 L1403.6,1391.5 L1408.6,1390.5 L1413.6,1390.0 L1418.6,1390.3 L1423.6,1390.7 L1428.6,1391.0 L1433.6,1391.4 L1438.6,1393.1 L1443.6,1394.9 L1448.6,1396.6 L1453.6,1397.4 L1458.6,1397.7 L1463.6,1398.1 L1468.6,1398.4 L1473.6,1397.4 L1478.6,1396.4 L1483.6,1395.4 L1488.6,1395.4 L1493.6,1395.8 L1498.6,1396.1 L1503.6,1396.5 L1508.6,1397.4 L1513.6,1399.2 L1518.6,1400.9 L1523.6,1402.5 L1528.6,1402.8 L1533.6,1403.2 L1538.6,1403.6 L1543.6,1403.2 L1548.6,1402.2 L1553.6,1401.2 L1558.6,1400.5 L1563.6,1400.9 L1568.6,1401.3 L1573.6,1401.6 L1578.6,1402.0 L1583.6,1403.5 L1588.6,1405.3 L1593.6,1407.0 L1598.6,1407.9 L1603.6,1408.3 L1608.6,1408.7 L1613.6,1409.0 L1618.6,1408.1 L1623.6,1407.1 L1628.6,1406.1 L1633.6,1406.0 L1638.6,1406.4 L1643.6,1406.7 L1648.6,1407.1 L1653.6,1407.9 L1658.6,1409.6 L1663.6,1411.3 L1668.6,1413.0 L1673.6,1413.4 L1678.6,1413.8 L1683.6,1414.1 L1688.6,1414.0 L1693.6,1413.0 L1698.6,1412.0 L1703.6,1411.1 L1708.6,1411.5 L1713.6,1411.8 L1718.6,1412.2 L1723.6,1412.6 L1728.6,1413.9 L1730.0,1417.5 M1367.6,1399.9 L1378.6,1399.9 L1383.6,1400.3 L1388.6,1400.6 L1393.6,1401.0 L1398.6,1401.1 L1403.6,1401.0 L1408.6,1400.9 L1413.6,1401.0 L1418.6,1401.3 L1423.6,1401.7 L1428.6,1402.0 L1433.6,1402.4 L1438.6,1403.2 L1443.6,1404.0 L1448.6,1404.9 L1453.6,1405.4 L1458.6,1405.7 L1463.6,1406.1 L1468.6,1406.4 L1473.6,1406.3 L1478.6,1406.2 L1483.6,1406.2 L1488.6,1406.4 L1493.6,1406.8 L1498.6,1407.1 L1503.6,1407.5 L1508.6,1408.1 L1513.6,1408.9 L1518.6,1409.7 L1523.6,1410.5 L1528.6,1410.8 L1533.6,1411.2 L1538.6,1411.6 L1543.6,1411.7 L1548.6,1411.6 L1553.6,1411.5 L1558.6,1411.5 L1563.6,1411.9 L1568.6,1412.3 L1573.6,1412.6 L1578.6,1413.0 L1583.6,1413.7 L1588.6,1414.6 L1593.6,1415.4 L1598.6,1415.9 L1603.6,1416.3 L1608.6,1416.7 L1613.6,1417.0 L1618.6,1417.0 L1623.6,1416.9 L1628.6,1416.8 L1633.6,1417.0 L1638.6,1417.4 L1643.6,1417.7 L1648.6,1418.1 L1653.6,1418.6 L1658.6,1419.4 L1663.6,1420.2 L1668.6,1421.0 L1673.6,1421.4 L1678.6,1421.8 L1683.6,1422.1 L1688.6,1422.3 L1693.6,1422.2 L1698.6,1422.1 L1703.6,1422.1 L1708.6,1422.5 L1713.6,1422.8 L1718.6,1423.2 L1723.6,1423.6 L1728.6,1424.3 L1730.0,1425.5 M1373.6,1404.5 L1403.6,1406.7 M1446.6,1409.9 L1476.6,1412.0 M1519.6,1415.2 L1549.6,1417.4 M1592.6,1420.5 L1622.6,1422.7 M1665.6,1425.8 L1695.6,1428.0 M1367.6,1399.9 L1378.6,1390.9 M1435.1,1409.4 L1445.6,1396.9 M1445.1,1410.1 L1455.6,1397.6 M1455.1,1410.8 L1465.6,1398.3 M1507.9,1414.7 L1518.4,1402.2 M1517.9,1415.4 L1528.4,1402.9 M1527.9,1416.1 L1538.4,1403.6 M1580.7,1420.0 L1591.2,1407.5 M1590.7,1420.7 L1601.2,1408.2 M1600.7,1421.5 L1611.2,1409.0 M1653.5,1425.3 L1664.0,1412.8 M1663.5,1426.0 L1674.0,1413.5 M1673.5,1426.8 L1684.0,1414.3" stroke="#ff1010" stroke-width="1.30" fill="none" stroke-linejoin="round"/>
<path d="M1378.6,1405.4 L1730.0,1431.0" stroke="#8a8a9a" stroke-width="1.00" fill="none" stroke-dasharray="1.5 2"/>
<path d="M1346.0,1418.8 L1351.0,1419.2 L1356.0,1419.6 L1361.0,1419.9 L1366.0,1419.5 L1371.0,1418.5 L1376.0,1417.5 L1381.0,1416.9 L1386.0,1417.2 L1391.0,1417.6 L1396.0,1418.0 L1401.0,1418.3 L1406.0,1420.0 L1411.0,1421.7 L1416.0,1423.4 L1421.0,1424.3 L1426.0,1424.7 L1431.0,1425.0 L1436.0,1425.4 L1441.0,1424.4 L1446.0,1423.4 L1451.0,1422.4 L1456.0,1422.3 L1461.0,1422.7 L1466.0,1423.1 L1471.0,1423.4 L1476.0,1424.3 L1481.0,1426.0 L1486.0,1427.8 L1491.0,1429.4 L1496.0,1429.8 L1501.0,1430.1 L1506.0,1430.5 L1511.0,1430.2 L1516.0,1429.2 L1521.0,1428.2 L1526.0,1427.4 L1531.0,1427.8 L1536.0,1428.2 L1541.0,1428.5 L1546.0,1428.9 L1551.0,1430.4 L1556.0,1432.1 L1561.0,1433.8 L1566.0,1434.9 L1571.0,1435.2 L1576.0,1435.6 L1581.0,1436.0 L1586.0,1435.1 L1591.0,1434.1 L1596.0,1433.1 L1601.0,1432.9 L1606.0,1433.3 L1611.0,1433.6 L1616.0,1434.0 L1621.0,1434.7 L1626.0,1436.4 L1631.0,1438.2 L1636.0,1439.9 L1641.0,1440.3 L1646.0,1440.7 L1651.0,1441.1 L1656.0,1441.0 L1661.0,1440.0 L1666.0,1439.0 L1671.0,1438.0 L1676.0,1438.4 L1681.0,1438.7 L1686.0,1439.1 L1691.0,1439.5 L1696.0,1440.8 L1701.0,1442.5 L1706.0,1444.2 L1711.0,1445.4 L1716.0,1445.8 L1721.0,1446.2 L1726.0,1446.5 L1730.0,1446.8 M1335.0,1426.8 L1346.0,1426.8 L1351.0,1427.2 L1356.0,1427.6 L1361.0,1427.9 L1366.0,1428.0 L1371.0,1427.9 L1376.0,1427.8 L1381.0,1427.9 L1386.0,1428.2 L1391.0,1428.6 L1396.0,1429.0 L1401.0,1429.3 L1406.0,1430.1 L1411.0,1430.9 L1416.0,1431.8 L1421.0,1432.3 L1426.0,1432.7 L1431.0,1433.0 L1436.0,1433.4 L1441.0,1433.3 L1446.0,1433.2 L1451.0,1433.1 L1456.0,1433.3 L1461.0,1433.7 L1466.0,1434.1 L1471.0,1434.4 L1476.0,1435.0 L1481.0,1435.8 L1486.0,1436.6 L1491.0,1437.4 L1496.0,1437.8 L1501.0,1438.1 L1506.0,1438.5 L1511.0,1438.7 L1516.0,1438.6 L1521.0,1438.5 L1526.0,1438.4 L1531.0,1438.8 L1536.0,1439.2 L1541.0,1439.5 L1546.0,1439.9 L1551.0,1440.6 L1556.0,1441.5 L1561.0,1442.3 L1566.0,1442.9 L1571.0,1443.2 L1576.0,1443.6 L1581.0,1444.0 L1586.0,1443.9 L1591.0,1443.8 L1596.0,1443.7 L1601.0,1443.9 L1606.0,1444.3 L1611.0,1444.6 L1616.0,1445.0 L1621.0,1445.5 L1626.0,1446.3 L1631.0,1447.1 L1636.0,1447.9 L1641.0,1448.3 L1646.0,1448.7 L1651.0,1449.1 L1656.0,1449.3 L1661.0,1449.2 L1666.0,1449.1 L1671.0,1449.0 L1676.0,1449.4 L1681.0,1449.7 L1686.0,1450.1 L1691.0,1450.5 L1696.0,1451.1 L1701.0,1452.0 L1706.0,1452.8 L1711.0,1453.4 L1716.0,1453.8 L1721.0,1454.2 L1726.0,1454.5 L1730.0,1454.8 M1341.0,1431.5 L1371.0,1433.6 M1414.0,1436.8 L1444.0,1439.0 M1487.0,1442.1 L1517.0,1444.3 M1560.0,1447.4 L1590.0,1449.6 M1633.0,1452.7 L1663.0,1454.9 M1706.0,1458.1 L1730.0,1459.8 M1335.0,1426.8 L1346.0,1417.8 M1402.8,1436.3 L1413.3,1423.8 M1412.8,1437.1 L1423.3,1424.6 M1422.8,1437.8 L1433.3,1425.3 M1475.6,1441.6 L1486.1,1429.1 M1485.6,1442.4 L1496.1,1429.9 M1495.6,1443.1 L1506.1,1430.6 M1548.4,1446.9 L1558.9,1434.4 M1558.4,1447.7 L1568.9,1435.2 M1568.4,1448.4 L1578.9,1435.9 M1621.2,1452.2 L1631.7,1439.7 M1631.2,1453.0 L1641.7,1440.5 M1641.2,1453.7 L1651.7,1441.2 M1694.0,1457.6 L1704.5,1445.1 M1704.0,1458.3 L1714.5,1445.8 M1714.0,1459.0 L1724.5,1446.5" stroke="#ff1010" stroke-width="1.30" fill="none" stroke-linejoin="round"/>
<path d="M1346.0,1432.3 L1730.0,1460.3" stroke="#8a8a9a" stroke-width="1.00" fill="none" stroke-dasharray="1.5 2"/>
<path d="M-20.0,1344.0 L-15.0,1344.4 L-10.0,1345.9 L-5.0,1347.6 L0.0,1349.4 L5.0,1350.4 L10.0,1350.7 L15.0,1351.1 L20.0,1351.5 L25.0,1350.6 L30.0,1349.6 L35.0,1348.6 L40.0,1348.4 L45.0,1348.8 L50.0,1349.1 L55.0,1349.5 L60.0,1350.2 L65.0,1352.0 L70.0,1353.7 L75.0,1355.4 L80.0,1355.8 L85.0,1356.2 L90.0,1356.6 L95.0,1356.5 L100.0,1355.4 L105.0,1354.4 L110.0,1353.5 L115.0,1353.9 L120.0,1354.2 L125.0,1354.6 L130.0,1355.0 L135.0,1356.3 L140.0,1358.0 L145.0,1359.8 L150.0,1360.9 L155.0,1361.3 L160.0,1361.7 L165.0,1362.0 L170.0,1361.3 L175.0,1360.3 L180.0,1359.3 L185.0,1359.0 L190.0,1359.4 L195.0,1359.7 L200.0,1360.1 L205.0,1360.6 L210.0,1362.4 L215.0,1364.1 L220.0,1365.8 L225.0,1366.4 L230.0,1366.8 L235.0,1367.1 L240.0,1367.2 L245.0,1366.2 L250.0,1365.2 L255.0,1364.2 L260.0,1364.5 L265.0,1364.8 L270.0,1365.2 L275.0,1365.5 L280.0,1366.7 L285.0,1368.4 L290.0,1370.2 L295.0,1371.5 L300.0,1371.9 L305.0,1372.2 L310.0,1372.6 L315.0,1372.1 L320.0,1371.0 L325.0,1370.0 L330.0,1369.6 L335.0,1369.9 L340.0,1370.3 L345.0,1370.7 L350.0,1371.0 L355.0,1372.8 L360.0,1374.5 L365.0,1376.3 L370.0,1377.0 L375.0,1377.3 L380.0,1377.7 L385.0,1377.9 L390.0,1376.9 L395.0,1375.9 L400.0,1374.9 L405.0,1375.0 L410.0,1375.4 L415.0,1375.8 L420.0,1376.1 L425.0,1377.1 L430.0,1378.8 L435.0,1380.6 L440.0,1382.1 L445.0,1382.4 L450.0,1382.8 L455.0,1383.2 L460.0,1382.8 L465.0,1381.8 L470.0,1380.8 L475.0,1380.1 L480.0,1380.5 L485.0,1380.9 L490.0,1381.2 L495.0,1381.6 L500.0,1383.2 L505.0,1384.9 L510.0,1386.7 L515.0,1387.5 L520.0,1387.9 L525.0,1388.3 L530.0,1388.6 L535.0,1387.7 L540.0,1386.6 L545.0,1385.6 L550.0,1385.6 L555.0,1386.0 L560.0,1386.3 L565.0,1386.7 L570.0,1387.5 L575.0,1389.3 L580.0,1391.0 L585.0,1392.6 L590.0,1393.0 L595.0,1393.4 L600.0,1393.7 L605.0,1393.5 L610.0,1392.5 L615.0,1391.5 L620.0,1390.7 L625.0,1391.1 L630.0,1391.4 L635.0,1391.8 L640.0,1392.2 L645.0,1393.6 L650.0,1395.3 L655.0,1397.1 L660.0,1398.1 L665.0,1398.5 L670.0,1398.8 L675.0,1399.2 L680.0,1398.4 L685.0,1397.4 L690.0,1396.4 L695.0,1396.2 L700.0,1396.5 L705.0,1396.9 L710.0,1397.3 L715.0,1397.9 L720.0,1399.7 L725.0,1401.4 L730.0,1403.1 L735.0,1403.6 L740.0,1403.9 L745.0,1404.3 L750.0,1404.3 L755.0,1403.3 L760.0,1402.2 L765.0,1401.3 L770.0,1401.6 L775.0,1402.0 L780.0,1402.4 L785.0,1402.7 L790.0,1404.0 L795.0,1405.7 L800.0,1407.5 L805.0,1408.7 L810.0,1409.0 L815.0,1409.4 L820.0,1409.8 L825.0,1409.1 L830.0,1408.1 L835.0,1407.1 L840.0,1406.7 L845.0,1407.1 L850.0,1407.5 L855.0,1407.8 L860.0,1408.3 L865.0,1410.1 L870.0,1411.8 L875.0,1413.5 L880.0,1414.2 L885.0,1414.5 L890.0,1414.9 L895.0,1415.0 L900.0,1414.0 L905.0,1413.0 L910.0,1412.0 L915.0,1412.2 L920.0,1412.6 L925.0,1412.9 L930.0,1413.3 L935.0,1414.4 L940.0,1416.1 L945.0,1417.9 L950.0,1419.3 L955.0,1419.6 L960.0,1420.0 L965.0,1420.3 L970.0,1419.9 L975.0,1418.9 L980.0,1417.8 L985.0,1417.3 L990.0,1417.7 L995.0,1418.0 L1000.0,1418.4 L1005.0,1418.8 L1010.0,1420.5 L1015.0,1422.2 L1020.0,1423.9 L1025.0,1424.7 L1030.0,1425.1 L1035.0,1425.5 L1040.0,1425.7 L1045.0,1424.7 L1050.0,1423.7 L1055.0,1422.7 L1060.0,1422.8 L1065.0,1423.1 L1070.0,1423.5 L1075.0,1423.9 L1080.0,1424.8 L1085.0,1426.5 L1090.0,1428.3 L1095.0,1429.8 L1100.0,1430.2 L1105.0,1430.6 L1110.0,1430.9 L1115.0,1430.6 L1120.0,1429.6 L1125.0,1428.6 L1130.0,1427.9 L1135.0,1428.2 L1140.0,1428.6 L1145.0,1429.0 L1150.0,1429.3 L1155.0,1430.9 L1160.0,1432.6 L1165.0,1434.4 L1170.0,1435.3 L1175.0,1435.7 L1180.0,1436.0 L1185.0,1436.4 L1190.0,1435.5 L1195.0,1434.5 L1200.0,1433.4 L1205.0,1433.3 L1210.0,1433.7 L1215.0,1434.1 L1220.0,1434.4 L1225.0,1435.2 L1230.0,1436.9 L1235.0,1438.7 L1240.0,1440.4 L1245.0,1440.8 L1250.0,1441.1 L1255.0,1441.5 L1260.0,1441.3 L1265.0,1440.3 L1270.0,1439.3 L1275.0,1438.4 L1280.0,1438.8 L1285.0,1439.2 L1290.0,1439.5 L1295.0,1439.9 L1300.0,1441.3 L1305.0,1443.0 L1310.0,1444.8 L1315.0,1445.9 L1320.0,1446.2 L1325.0,1446.6 L1330.0,1447.0 L1335.0,1446.2 L1340.0,1445.2 L1345.0,1444.2 L1350.0,1443.9 L1355.0,1444.3 L1360.0,1444.6 L1365.0,1445.0 L1370.0,1445.6 L1375.0,1447.4 L1380.0,1449.1 L1385.0,1450.8 L1390.0,1451.3 L1395.0,1451.7 L1400.0,1452.1 L1405.0,1452.1 L1410.0,1451.1 L1415.0,1450.0 L1420.0,1449.0 L1425.0,1449.4 L1430.0,1449.7 L1435.0,1450.1 L1440.0,1450.5 L1445.0,1451.7 L1450.0,1453.4 L1455.0,1455.2 L1460.0,1456.4 L1465.0,1456.8 L1470.0,1457.2 L1475.0,1457.5 L1480.0,1456.9 L1485.0,1455.9 L1490.0,1454.9 L1495.0,1454.5 L1500.0,1454.8 L1505.0,1455.2 L1510.0,1455.6 L1515.0,1456.0 L1520.0,1457.8 L1525.0,1459.5 L1530.0,1461.2 L1535.0,1461.9 L1540.0,1462.3 L1545.0,1462.6 L1550.0,1462.8 L1555.0,1461.8 L1560.0,1460.8 L1565.0,1459.8 L1570.0,1460.0 L1575.0,1460.3 L1580.0,1460.7 L1585.0,1461.0 L1590.0,1462.1 L1595.0,1463.8 L1600.0,1465.6 L1605.0,1467.0 L1610.0,1467.4 L1615.0,1467.7 L1620.0,1468.1 L1625.0,1467.7 L1630.0,1466.7 L1635.0,1465.6 L1640.0,1465.1 L1645.0,1465.4 L1650.0,1465.8 L1655.0,1466.1 L1660.0,1466.5 L1665.0,1468.2 L1670.0,1469.9 L1675.0,1471.6 L1680.0,1472.5 L1685.0,1472.8 L1690.0,1473.2 L1695.0,1473.5 L1700.0,1472.5 L1705.0,1471.5 L1710.0,1470.5 L1715.0,1470.5 L1720.0,1470.9 L1725.0,1471.3 L1730.0,1471.6 L1730.0,1476.1 M-31.0,1356.5 L-20.0,1355.0 L-15.0,1355.4 L-10.0,1356.1 L-5.0,1357.0 L0.0,1357.8 L5.0,1358.4 L10.0,1358.7 L15.0,1359.1 L20.0,1359.5 L25.0,1359.4 L30.0,1359.3 L35.0,1359.2 L40.0,1359.4 L45.0,1359.8 L50.0,1360.1 L55.0,1360.5 L60.0,1361.0 L65.0,1361.8 L70.0,1362.6 L75.0,1363.5 L80.0,1363.8 L85.0,1364.2 L90.0,1364.6 L95.0,1364.8 L100.0,1364.7 L105.0,1364.6 L110.0,1364.5 L115.0,1364.9 L120.0,1365.2 L125.0,1365.6 L130.0,1366.0 L135.0,1366.7 L140.0,1367.5 L145.0,1368.3 L150.0,1368.9 L155.0,1369.3 L160.0,1369.7 L165.0,1370.0 L170.0,1370.0 L175.0,1369.9 L180.0,1369.8 L185.0,1370.0 L190.0,1370.4 L195.0,1370.7 L200.0,1371.1 L205.0,1371.5 L210.0,1372.3 L215.0,1373.2 L220.0,1374.0 L225.0,1374.4 L230.0,1374.8 L235.0,1375.1 L240.0,1375.4 L245.0,1375.3 L250.0,1375.2 L255.0,1375.1 L260.0,1375.5 L265.0,1375.8 L270.0,1376.2 L275.0,1376.5 L280.0,1377.2 L285.0,1378.0 L290.0,1378.8 L295.0,1379.5 L300.0,1379.9 L305.0,1380.2 L310.0,1380.6 L315.0,1380.7 L320.0,1380.6 L325.0,1380.5 L330.0,1380.6 L335.0,1380.9 L340.0,1381.3 L345.0,1381.7 L350.0,1382.0 L355.0,1382.8 L360.0,1383.7 L365.0,1384.5 L370.0,1385.0 L375.0,1385.3 L380.0,1385.7 L385.0,1386.0 L390.0,1385.9 L395.0,1385.8 L400.0,1385.7 L405.0,1386.0 L410.0,1386.4 L415.0,1386.8 L420.0,1387.1 L425.0,1387.7 L430.0,1388.5 L435.0,1389.3 L440.0,1390.1 L445.0,1390.4 L450.0,1390.8 L455.0,1391.2 L460.0,1391.3 L465.0,1391.2 L470.0,1391.1 L475.0,1391.1 L480.0,1391.5 L485.0,1391.9 L490.0,1392.2 L495.0,1392.6 L500.0,1393.4 L505.0,1394.2 L510.0,1395.0 L515.0,1395.5 L520.0,1395.9 L525.0,1396.3 L530.0,1396.6 L535.0,1396.6 L540.0,1396.5 L545.0,1396.4 L550.0,1396.6 L555.0,1397.0 L560.0,1397.3 L565.0,1397.7 L570.0,1398.2 L575.0,1399.0 L580.0,1399.9 L585.0,1400.6 L590.0,1401.0 L595.0,1401.4 L600.0,1401.7 L605.0,1401.9 L610.0,1401.8 L615.0,1401.7 L620.0,1401.7 L625.0,1402.1 L630.0,1402.4 L635.0,1402.8 L640.0,1403.2 L645.0,1403.9 L650.0,1404.7 L655.0,1405.5 L660.0,1406.1 L665.0,1406.5 L670.0,1406.8 L675.0,1407.2 L680.0,1407.2 L685.0,1407.1 L690.0,1407.0 L695.0,1407.2 L700.0,1407.5 L705.0,1407.9 L710.0,1408.3 L715.0,1408.7 L720.0,1409.5 L725.0,1410.4 L730.0,1411.2 L735.0,1411.6 L740.0,1411.9 L745.0,1412.3 L750.0,1412.5 L755.0,1412.4 L760.0,1412.4 L765.0,1412.3 L770.0,1412.6 L775.0,1413.0 L780.0,1413.4 L785.0,1413.7 L790.0,1414.4 L795.0,1415.2 L800.0,1416.0 L805.0,1416.7 L810.0,1417.0 L815.0,1417.4 L820.0,1417.8 L825.0,1417.8 L830.0,1417.7 L835.0,1417.6 L840.0,1417.7 L845.0,1418.1 L850.0,1418.5 L855.0,1418.8 L860.0,1419.2 L865.0,1420.1 L870.0,1420.9 L875.0,1421.7 L880.0,1422.2 L885.0,1422.5 L890.0,1422.9 L895.0,1423.2 L900.0,1423.1 L905.0,1423.0 L910.0,1422.9 L915.0,1423.2 L920.0,1423.6 L925.0,1423.9 L930.0,1424.3 L935.0,1424.9 L940.0,1425.7 L945.0,1426.6 L950.0,1427.3 L955.0,1427.6 L960.0,1428.0 L965.0,1428.3 L970.0,1428.4 L975.0,1428.3 L980.0,1428.2 L985.0,1428.3 L990.0,1428.7 L995.0,1429.0 L1000.0,1429.4 L1005.0,1429.8 L1010.0,1430.6 L1015.0,1431.4 L1020.0,1432.2 L1025.0,1432.7 L1030.0,1433.1 L1035.0,1433.5 L1040.0,1433.8 L1045.0,1433.7 L1050.0,1433.6 L1055.0,1433.5 L1060.0,1433.8 L1065.0,1434.1 L1070.0,1434.5 L1075.0,1434.9 L1080.0,1435.4 L1085.0,1436.2 L1090.0,1437.1 L1095.0,1437.8 L1100.0,1438.2 L1105.0,1438.6 L1110.0,1438.9 L1115.0,1439.1 L1120.0,1439.0 L1125.0,1438.9 L1130.0,1438.9 L1135.0,1439.2 L1140.0,1439.6 L1145.0,1440.0 L1150.0,1440.3 L1155.0,1441.1 L1160.0,1441.9 L1165.0,1442.7 L1170.0,1443.3 L1175.0,1443.7 L1180.0,1444.0 L1185.0,1444.4 L1190.0,1444.3 L1195.0,1444.2 L1200.0,1444.1 L1205.0,1444.3 L1210.0,1444.7 L1215.0,1445.1 L1220.0,1445.4 L1225.0,1445.9 L1230.0,1446.8 L1235.0,1447.6 L1240.0,1448.4 L1245.0,1448.8 L1250.0,1449.1 L1255.0,1449.5 L1260.0,1449.7 L1265.0,1449.6 L1270.0,1449.5 L1275.0,1449.4 L1280.0,1449.8 L1285.0,1450.2 L1290.0,1450.5 L1295.0,1450.9 L1300.0,1451.6 L1305.0,1452.4 L1310.0,1453.3 L1315.0,1453.9 L1320.0,1454.2 L1325.0,1454.6 L1330.0,1455.0 L1335.0,1454.9 L1340.0,1454.9 L1345.0,1454.8 L1350.0,1454.9 L1355.0,1455.3 L1360.0,1455.6 L1365.0,1456.0 L1370.0,1456.5 L1375.0,1457.3 L1380.0,1458.1 L1385.0,1458.9 L1390.0,1459.3 L1395.0,1459.7 L1400.0,1460.1 L1405.0,1460.3 L1410.0,1460.2 L1415.0,1460.1 L1420.0,1460.0 L1425.0,1460.4 L1430.0,1460.7 L1435.0,1461.1 L1440.0,1461.5 L1445.0,1462.1 L1450.0,1462.9 L1455.0,1463.8 L1460.0,1464.4 L1465.0,1464.8 L1470.0,1465.2 L1475.0,1465.5 L1480.0,1465.6 L1485.0,1465.5 L1490.0,1465.4 L1495.0,1465.5 L1500.0,1465.8 L1505.0,1466.2 L1510.0,1466.6 L1515.0,1467.0 L1520.0,1467.8 L1525.0,1468.6 L1530.0,1469.4 L1535.0,1469.9 L1540.0,1470.3 L1545.0,1470.6 L1550.0,1470.9 L1555.0,1470.8 L1560.0,1470.7 L1565.0,1470.7 L1570.0,1471.0 L1575.0,1471.3 L1580.0,1471.7 L1585.0,1472.0 L1590.0,1472.6 L1595.0,1473.5 L1600.0,1474.3 L1605.0,1475.0 L1610.0,1475.4 L1615.0,1475.7 L1620.0,1476.1 L1625.0,1476.2 L1630.0,1476.1 L1635.0,1476.0 L1640.0,1476.1 L1645.0,1476.4 L1650.0,1476.8 L1655.0,1477.1 L1660.0,1477.5 L1665.0,1478.3 L1670.0,1479.1 L1675.0,1480.0 L1680.0,1480.5 L1685.0,1480.8 L1690.0,1481.2 L1695.0,1481.6 L1700.0,1481.5 L1705.0,1481.4 L1710.0,1481.3 L1715.0,1481.5 L1720.0,1481.9 L1725.0,1482.3 L1730.0,1482.6 L1730.0,1484.1 M-25.0,1361.2 L5.0,1363.4 M48.0,1366.5 L78.0,1368.7 M121.0,1371.8 L151.0,1374.0 M194.0,1377.1 L224.0,1379.3 M267.0,1382.5 L297.0,1384.7 M340.0,1387.8 L370.0,1390.0 M413.0,1393.1 L443.0,1395.3 M486.0,1398.4 L516.0,1400.6 M559.0,1403.8 L589.0,1405.9 M632.0,1409.1 L662.0,1411.3 M705.0,1414.4 L735.0,1416.6 M778.0,1419.7 L808.0,1421.9 M851.0,1425.0 L881.0,1427.2 M924.0,1430.4 L954.0,1432.5 M997.0,1435.7 L1027.0,1437.9 M1070.0,1441.0 L1100.0,1443.2 M1143.0,1446.3 L1173.0,1448.5 M1216.0,1451.6 L1246.0,1453.8 M1289.0,1457.0 L1319.0,1459.2 M1362.0,1462.3 L1392.0,1464.5 M1435.0,1467.6 L1465.0,1469.8 M1508.0,1472.9 L1538.0,1475.1 M1581.0,1478.3 L1611.0,1480.4 M1654.0,1483.6 L1684.0,1485.8 M1727.0,1488.9 L1730.0,1489.1 M-31.0,1356.5 L-20.0,1347.5 M-12.7,1362.4 L-2.2,1349.9 M-2.7,1363.2 L7.8,1350.7 M7.3,1363.9 L17.8,1351.4 M60.1,1367.7 L70.6,1355.2 M70.1,1368.5 L80.6,1356.0 M80.1,1369.2 L90.6,1356.7 M132.9,1373.1 L143.4,1360.6 M142.9,1373.8 L153.4,1361.3 M152.9,1374.5 L163.4,1362.0 M205.7,1378.4 L216.2,1365.9 M215.7,1379.1 L226.2,1366.6 M225.7,1379.8 L236.2,1367.3 M278.5,1383.7 L289.0,1371.2 M288.5,1384.4 L299.0,1371.9 M298.5,1385.1 L309.0,1372.6 M351.3,1389.0 L361.8,1376.5 M361.3,1389.7 L371.8,1377.2 M371.3,1390.4 L381.8,1377.9 M424.1,1394.3 L434.6,1381.8 M434.1,1395.0 L444.6,1382.5 M444.1,1395.7 L454.6,1383.2 M496.9,1399.6 L507.4,1387.1 M506.9,1400.3 L517.4,1387.8 M516.9,1401.0 L527.4,1388.5 M569.7,1404.9 L580.2,1392.4 M579.7,1405.6 L590.2,1393.1 M589.7,1406.4 L600.2,1393.9 M642.5,1410.2 L653.0,1397.7 M652.5,1410.9 L663.0,1398.4 M662.5,1411.7 L673.0,1399.2 M715.3,1415.5 L725.8,1403.0 M725.3,1416.2 L735.8,1403.7 M735.3,1417.0 L745.8,1404.5 M788.1,1420.8 L798.6,1408.3 M798.1,1421.5 L808.6,1409.0 M808.1,1422.3 L818.6,1409.8 M860.9,1426.1 L871.4,1413.6 M870.9,1426.9 L881.4,1414.4 M880.9,1427.6 L891.4,1415.1 M933.7,1431.4 L944.2,1418.9 M943.7,1432.2 L954.2,1419.7 M953.7,1432.9 L964.2,1420.4 M1006.5,1436.7 L1017.0,1424.2 M1016.5,1437.5 L1027.0,1425.0 M1026.5,1438.2 L1037.0,1425.7 M1079.3,1442.0 L1089.8,1429.5 M1089.3,1442.8 L1099.8,1430.3 M1099.3,1443.5 L1109.8,1431.0 M1152.1,1447.4 L1162.6,1434.9 M1162.1,1448.1 L1172.6,1435.6 M1172.1,1448.8 L1182.6,1436.3 M1224.9,1452.7 L1235.4,1440.2 M1234.9,1453.4 L1245.4,1440.9 M1244.9,1454.1 L1255.4,1441.6 M1297.7,1458.0 L1308.2,1445.5 M1307.7,1458.7 L1318.2,1446.2 M1317.7,1459.4 L1328.2,1446.9 M1370.5,1463.3 L1381.0,1450.8 M1380.5,1464.0 L1391.0,1451.5 M1390.5,1464.7 L1401.0,1452.2 M1443.3,1468.6 L1453.8,1456.1 M1453.3,1469.3 L1463.8,1456.8 M1463.3,1470.0 L1473.8,1457.5 M1516.1,1473.9 L1526.6,1461.4 M1526.1,1474.6 L1536.6,1462.1 M1536.1,1475.3 L1546.6,1462.8 M1588.9,1479.2 L1599.4,1466.7 M1598.9,1479.9 L1609.4,1467.4 M1608.9,1480.7 L1619.4,1468.2 M1661.7,1484.5 L1672.2,1472.0 M1671.7,1485.2 L1682.2,1472.7 M1681.7,1486.0 L1692.2,1473.5" stroke="#ff1010" stroke-width="1.30" fill="none" stroke-linejoin="round"/>
<path d="M-20.0,1362.0 L1730.0,1489.6" stroke="#8a8a9a" stroke-width="1.00" fill="none" stroke-dasharray="1.5 2"/>
<line x1="0.0" y1="1210.0" x2="1717.0" y2="1343.0" stroke="#e8e800" stroke-width="2.20" />
<line x1="311.0" y1="1234.0" x2="1236.0" y2="1306.0" stroke="#ffffff" stroke-width="1.30" stroke-dasharray="5 5"/>
<line x1="998.0" y1="1083.0" x2="605.0" y2="1403.0" stroke="#e01818" stroke-width="1.30" />
</g>
<line x1="0.0" y1="1017.0" x2="1717.0" y2="1142.0" stroke="#e8e800" stroke-width="1.80" />
<line x1="0.0" y1="1394.6" x2="1679.0" y2="1515.0" stroke="#6a6a6a" stroke-width="1.00" />
<line x1="1679.0" y1="1515.0" x2="1542.0" y2="1628.0" stroke="#6a6a6a" stroke-width="1.00" />
<line x1="1908.5" y1="1500.5" x2="2471.0" y2="1043.0" stroke="#6a6a6a" stroke-width="1.20" />
<line x1="1935.0" y1="1502.7" x2="2471.0" y2="1065.0" stroke="#6a6a6a" stroke-width="1.20" />
<line x1="1908.5" y1="1500.5" x2="2471.0" y2="1543.0" stroke="#6a6a6a" stroke-width="1.20" />
<line x1="2216.5" y1="1250.4" x2="2471.0" y2="1268.5" stroke="#6a6a6a" stroke-width="1.20" />
<line x1="2180.8" y1="1279.5" x2="2442.0" y2="1297.3" stroke="#6a6a6a" stroke-width="1.20" />
<line x1="2183.0" y1="1283.0" x2="2444.0" y2="1301.0" stroke="#6a6a6a" stroke-width="1.20" />
<line x1="2145.0" y1="1306.3" x2="2406.0" y2="1326.4" stroke="#6a6a6a" stroke-width="1.20" />
<line x1="2388.4" y1="1107.6" x2="2471.0" y2="1113.0" stroke="#6a6a6a" stroke-width="1.20" />
<line x1="2352.7" y1="1136.6" x2="2471.0" y2="1144.0" stroke="#6a6a6a" stroke-width="1.20" />
<line x1="2355.0" y1="1140.0" x2="2471.0" y2="1148.0" stroke="#6a6a6a" stroke-width="1.20" />
<line x1="2317.0" y1="1165.6" x2="2471.0" y2="1177.0" stroke="#6a6a6a" stroke-width="1.20" />
<polygon points="2230.0,1255.0 2318.0,1261.0 2300.0,1280.0 2210.0,1274.0" fill="none" stroke="#6a6a6a" stroke-width="1.1"/>
<polygon points="2330.0,1262.0 2450.0,1270.0 2432.0,1290.0 2312.0,1282.0" fill="none" stroke="#6a6a6a" stroke-width="1.1"/>
<polygon points="2172.0,1286.0 2282.0,1293.0 2263.0,1313.0 2152.0,1306.0" fill="none" stroke="#6a6a6a" stroke-width="1.1"/>
<polygon points="2300.0,1294.0 2420.0,1302.0 2402.0,1322.0 2282.0,1314.0" fill="none" stroke="#6a6a6a" stroke-width="1.1"/>
<polygon points="2405.0,1113.0 2471.0,1117.0 2471.0,1130.0 2390.0,1131.0" fill="none" stroke="#6a6a6a" stroke-width="1.1"/>
<polygon points="2368.0,1145.0 2452.0,1150.0 2436.0,1168.0 2348.0,1163.0" fill="none" stroke="#6a6a6a" stroke-width="1.1"/>
<path d="M2230,1096 L2332,1103 Q2270,1122 2192,1125" stroke="#6a6a6a" stroke-width="1.20" fill="none" />
<path d="M2192,1125 Q2262,1135 2263,1159 L2158,1154" stroke="#6a6a6a" stroke-width="1.20" fill="none" />
<path d="M2057,1238 L2159,1245 Q2100,1262 2018,1265" stroke="#6a6a6a" stroke-width="1.20" fill="none" />
<path d="M2018,1265 Q2088,1278 2090,1303 L1984,1297" stroke="#6a6a6a" stroke-width="1.20" fill="none" />
<path d="M2382,972 Q2448,985 2449,1008 L2344,1001" stroke="#6a6a6a" stroke-width="1.20" fill="none" />
<line x1="2420.0" y1="944.0" x2="2471.0" y2="944.0" stroke="#6a6a6a" stroke-width="1.00" />
<line x1="2425.0" y1="966.0" x2="2471.0" y2="962.0" stroke="#6a6a6a" stroke-width="1.00" />
<line x1="2440.0" y1="1008.0" x2="2471.0" y2="983.0" stroke="#aaaaaa" stroke-width="1.00" />
<line x1="2425.0" y1="742.0" x2="2471.0" y2="744.0" stroke="#6a6a6a" stroke-width="1.20" />
<line x1="2425.0" y1="760.0" x2="2471.0" y2="762.0" stroke="#6a6a6a" stroke-width="1.20" />
<line x1="2425.0" y1="779.0" x2="2471.0" y2="781.0" stroke="#6a6a6a" stroke-width="1.20" />
<line x1="2425.0" y1="800.0" x2="2471.0" y2="802.0" stroke="#6a6a6a" stroke-width="1.20" />
<line x1="2425.0" y1="854.0" x2="2471.0" y2="856.0" stroke="#6a6a6a" stroke-width="1.20" />
<line x1="2425.0" y1="875.0" x2="2471.0" y2="877.0" stroke="#6a6a6a" stroke-width="1.20" />
<line x1="2425.0" y1="812.0" x2="2460.0" y2="790.0" stroke="#6a6a6a" stroke-width="1.20" />
<line x1="2425.0" y1="822.0" x2="2470.0" y2="800.0" stroke="#6a6a6a" stroke-width="1.20" />
<line x1="2425.0" y1="609.0" x2="2471.0" y2="612.0" stroke="#9a9a9a" stroke-width="1.00" />
<polygon points="0.0,190.0 2100.0,190.0 1717.0,497.0 1717.0,894.0 151.5,781.0 0.0,781.0" fill="#d8d8d2" />
<polygon points="0.0,190.0 151.5,190.0 151.5,357.0 0.0,480.0" fill="#5e5cbe" />
<polygon points="0.0,550.0 205.7,384.0 205.7,462.3 151.5,507.0 151.5,781.0 67.0,845.0 0.0,899.5" fill="#5e5cbe" />
<g stroke="#68685f" stroke-width="1.5" fill="none">
<line x1="151.5" y1="513.3" x2="390.0" y2="530.6" stroke="#68685f" stroke-width="1.30" />
<line x1="151.5" y1="518.4" x2="384.9" y2="535.7" stroke="#68685f" stroke-width="1.30" />
<line x1="151.5" y1="533.7" x2="262.4" y2="540.8" stroke="#68685f" stroke-width="1.30" />
<line x1="272.7" y1="542.9" x2="384.9" y2="550.0" stroke="#68685f" stroke-width="1.30" />
<line x1="151.5" y1="775.5" x2="393.0" y2="792.9" stroke="#68685f" stroke-width="1.30" />
<line x1="262.4" y1="520.0" x2="262.4" y2="785.0" stroke="#68685f" stroke-width="1.30" />
<line x1="267.6" y1="522.0" x2="267.6" y2="786.0" stroke="#68685f" stroke-width="1.30" />
<line x1="272.7" y1="522.0" x2="272.7" y2="786.0" stroke="#68685f" stroke-width="1.30" />
<line x1="384.9" y1="536.0" x2="384.9" y2="793.0" stroke="#68685f" stroke-width="1.30" />
<line x1="390.0" y1="530.0" x2="390.0" y2="793.0" stroke="#68685f" stroke-width="1.30" />
<polygon points="164.5,535.7 249.2,541.8 249.2,630.6 164.5,624.5"/>
<polygon points="164.5,639.8 249.2,645.9 249.2,764.3 164.5,758.2"/>
<polygon points="286,543.9 371.6,550 371.6,639.8 286,633.7"/>
<polygon points="286,650 371.6,655 371.6,772.4 286,766.3"/>
<rect x="252.9" y="661.2" width="9.5" height="32.7"/>
<rect x="272.7" y="662" width="9.7" height="34"/>
<polyline points="591.9,818.7 591.9,545.3 697,553 697,819"/>
<polyline points="597.6,806.3 597.6,546.3 691.9,553 691.9,813 597.6,806.3"/>
<polygon points="656.5,569.8 679,571.5 679,661 656.5,660"/>
<polyline points="656.5,678 656.5,794.8 679,796.5 679,680"/>
</g>
<polygon points="151.5,781.0 1717.0,894.0 1717.0,964.0 67.0,845.0" fill="#1f232a" />
<line x1="128.5" y1="800.8" x2="1717.0" y2="915.0" stroke="#6a6a6a" stroke-width="1.30" />
<line x1="186.7" y1="796.5" x2="1717.0" y2="906.7" stroke="#6a6a6a" stroke-width="1.30" />
<line x1="186.7" y1="796.5" x2="124.0" y2="849.0" stroke="#5a5a5a" stroke-width="1.00" />
<path d="M103,820.5 Q125,818 135,826 L152,825 Q165,822 175,828 L232,833" stroke="#8a8a8a" stroke-width="1.00" fill="none" />
<line x1="1488.0" y1="890.0" x2="1717.0" y2="905.0" stroke="#d8d800" stroke-width="1.50" stroke-dasharray="4 2"/>
<line x1="1560.0" y1="903.0" x2="1717.0" y2="915.0" stroke="#6a6a6a" stroke-width="1.20" />
<line x1="1575.0" y1="906.0" x2="1717.0" y2="916.0" stroke="#c8c800" stroke-width="1.00" stroke-dasharray="2 4"/>
<line x1="1488.0" y1="944.0" x2="1717.0" y2="961.0" stroke="#6a6a6a" stroke-width="1.50" />
<text x="935" y="1092" font-family="Liberation Sans" font-size="11" font-style="italic" fill="#d0d0d0" transform="rotate(5 935 1092)" letter-spacing="2">PROJECTOR</text>
<text x="116" y="831" font-family="Liberation Sans" font-size="10" font-weight="bold" font-style="italic" fill="#c8c8c8" transform="rotate(7 116 831)" letter-spacing="3.5">TAS  TRACK</text>
<polygon points="67.0,845.0 1717.0,964.0 1717.0,1136.0 0.0,1011.0 0.0,899.5" fill="#d65c52" />
<g clip-path="url(#cpRed)">
<line x1="0.0" y1="924.0" x2="1717.0" y2="1048.8" stroke="#ffffff" stroke-width="2.80" />
<line x1="-150.4" y1="1017.7" x2="119.6" y2="799.0" stroke="#ffffff" stroke-width="2.60" />
<line x1="10.0" y1="1029.4" x2="280.0" y2="810.7" stroke="#ffffff" stroke-width="2.60" />
<line x1="170.4" y1="1041.1" x2="440.4" y2="822.4" stroke="#ffffff" stroke-width="2.60" />
<line x1="330.8" y1="1052.7" x2="600.8" y2="834.0" stroke="#ffffff" stroke-width="2.60" />
<line x1="491.2" y1="1064.4" x2="761.2" y2="845.7" stroke="#ffffff" stroke-width="2.60" />
<line x1="651.6" y1="1076.1" x2="921.6" y2="857.4" stroke="#ffffff" stroke-width="2.60" />
<line x1="812.0" y1="1087.8" x2="1082.0" y2="869.1" stroke="#ffffff" stroke-width="2.60" />
<line x1="972.4" y1="1099.4" x2="1242.4" y2="880.7" stroke="#ffffff" stroke-width="2.60" />
<line x1="1132.8" y1="1111.1" x2="1402.8" y2="892.4" stroke="#ff3030" stroke-width="2.40" />
<line x1="1132.8" y1="1111.1" x2="1402.8" y2="892.4" stroke="#ffffff" stroke-width="1.60" stroke-dasharray="4 2.5"/>
<line x1="1293.2" y1="1122.8" x2="1563.2" y2="904.1" stroke="#ff3030" stroke-width="2.40" />
<line x1="1293.2" y1="1122.8" x2="1563.2" y2="904.1" stroke="#ffffff" stroke-width="1.60" stroke-dasharray="4 2.5"/>
<line x1="1453.6" y1="1134.5" x2="1723.6" y2="915.8" stroke="#ff3030" stroke-width="2.40" />
<line x1="1453.6" y1="1134.5" x2="1723.6" y2="915.8" stroke="#ffffff" stroke-width="1.60" stroke-dasharray="4 2.5"/>
<line x1="1614.0" y1="1146.2" x2="1884.0" y2="927.5" stroke="#ffffff" stroke-width="2.60" />
<line x1="1774.4" y1="1157.8" x2="2044.4" y2="939.1" stroke="#ffffff" stroke-width="2.60" />
<line x1="1252.0" y1="1016.0" x2="1717.0" y2="1050.0" stroke="#ff2020" stroke-width="2.20" />
</g>
<line x1="0.0" y1="1011.0" x2="1717.0" y2="1136.0" stroke="#ffffff" stroke-width="4.50" />
<line x1="1000.0" y1="1080.0" x2="1717.0" y2="1133.0" stroke="#ff2020" stroke-width="1.50" />
<line x1="67.0" y1="845.0" x2="1717.0" y2="964.0" stroke="#ffffff" stroke-width="2.50" />
<line x1="151.5" y1="781.0" x2="1717.0" y2="894.0" stroke="#ffffff" stroke-width="2.00" />
<g stroke="#ffffff" stroke-width="2.6" fill="none">
<line x1="151.5" y1="190.0" x2="151.5" y2="357.0" stroke="#ffffff" stroke-width="2.60" />
<line x1="151.5" y1="357.0" x2="0.0" y2="480.0" stroke="#ffffff" stroke-width="2.60" />
<line x1="127.5" y1="376.0" x2="0.0" y2="480.0" stroke="#ffffff" stroke-width="2.60" />
<line x1="205.7" y1="384.0" x2="0.0" y2="550.0" stroke="#ffffff" stroke-width="2.60" />
<line x1="205.7" y1="384.0" x2="205.7" y2="462.3" stroke="#ffffff" stroke-width="2.60" />
<line x1="205.7" y1="462.3" x2="0.0" y2="632.0" stroke="#ffffff" stroke-width="2.60" />
<line x1="151.5" y1="357.0" x2="1745.0" y2="471.0" stroke="#ffffff" stroke-width="2.60" />
<line x1="127.5" y1="376.0" x2="1719.0" y2="491.5" stroke="#ffffff" stroke-width="2.60" />
<line x1="205.7" y1="464.0" x2="1717.0" y2="571.0" stroke="#ffffff" stroke-width="2.60" />
<line x1="151.5" y1="507.0" x2="151.5" y2="781.0" stroke="#ffffff" stroke-width="2.60" />
<line x1="151.5" y1="781.0" x2="67.0" y2="845.0" stroke="#ffffff" stroke-width="2.60" />
</g>
<polygon points="720.0,812.0 1488.0,868.0 1488.0,968.0 1478.0,1030.0 1456.0,1030.0 1441.0,1018.0 1126.0,1004.0 1070.0,1001.0 1068.0,993.5 752.0,967.0 720.0,977.0" fill="#d8d8d2" />
<path d="M1264.0,781.0 L1559.0,902.0" stroke="#ffffff" stroke-width="8.50" fill="none" stroke-linecap="round"/>
<path d="M1264.0,781.0 L1559.0,902.0" stroke="#e4e4dc" stroke-width="4.50" fill="none" stroke-linecap="round"/>
<path d="M1478.0,892.0 L1559.0,902.0" stroke="#ffffff" stroke-width="8.50" fill="none" stroke-linecap="round"/>
<path d="M1478.0,892.0 L1559.0,902.0" stroke="#e4e4dc" stroke-width="4.50" fill="none" stroke-linecap="round"/>
<path d="M604.0,908.0 L718.0,917.0" stroke="#ffffff" stroke-width="8.50" fill="none" stroke-linecap="round"/>
<path d="M604.0,908.0 L718.0,917.0" stroke="#e4e4dc" stroke-width="4.50" fill="none" stroke-linecap="round"/>
<path d="M1478.0,971.0 L1607.0,981.0" stroke="#ffffff" stroke-width="8.50" fill="none" stroke-linecap="round"/>
<path d="M1478.0,971.0 L1607.0,981.0" stroke="#e4e4dc" stroke-width="4.50" fill="none" stroke-linecap="round"/>
<line x1="741.8" y1="843.7" x2="819.7" y2="846.7" stroke="#ffffff" stroke-width="3.00" />
<line x1="741.8" y1="861.7" x2="819.7" y2="867.7" stroke="#ffffff" stroke-width="3.00" />
<line x1="741.8" y1="918.6" x2="1086.4" y2="944.0" stroke="#ffffff" stroke-width="3.00" />
<line x1="741.8" y1="933.6" x2="1086.4" y2="966.6" stroke="#ffffff" stroke-width="3.00" />
<line x1="752.3" y1="966.6" x2="1068.4" y2="993.5" stroke="#ffffff" stroke-width="3.00" />
<line x1="1093.0" y1="944.7" x2="1456.0" y2="969.6" stroke="#ffffff" stroke-width="3.00" />
<line x1="1093.0" y1="954.7" x2="1456.0" y2="986.0" stroke="#ffffff" stroke-width="3.00" />
<line x1="1126.0" y1="1004.4" x2="1441.0" y2="1017.7" stroke="#ffffff" stroke-width="3.00" />
<line x1="1355.0" y1="871.8" x2="1456.0" y2="878.4" stroke="#ffffff" stroke-width="3.00" />
<line x1="1355.0" y1="891.7" x2="1456.0" y2="898.3" stroke="#ffffff" stroke-width="3.00" />
<line x1="1355.0" y1="908.0" x2="1456.0" y2="915.0" stroke="#ffffff" stroke-width="3.00" />
<line x1="1240.7" y1="759.2" x2="1320.3" y2="765.3" stroke="#ffffff" stroke-width="3.00" />
<line x1="1202.5" y1="773.0" x2="1320.3" y2="780.6" stroke="#ffffff" stroke-width="3.00" />
<line x1="1133.6" y1="803.6" x2="1320.3" y2="817.4" stroke="#ffffff" stroke-width="3.00" />
<line x1="1095.3" y1="817.4" x2="1320.3" y2="832.7" stroke="#ffffff" stroke-width="3.00" />
<line x1="870.0" y1="790.0" x2="1086.0" y2="806.0" stroke="#ffffff" stroke-width="3.00" />
<line x1="900.0" y1="803.0" x2="1086.0" y2="816.0" stroke="#ffffff" stroke-width="3.00" />
<line x1="720.0" y1="812.0" x2="720.0" y2="977.0" stroke="#ffffff" stroke-width="3.00" />
<line x1="741.0" y1="738.0" x2="741.0" y2="968.0" stroke="#ffffff" stroke-width="3.00" />
<line x1="824.2" y1="800.0" x2="824.2" y2="939.6" stroke="#ffffff" stroke-width="3.00" />
<line x1="952.0" y1="890.0" x2="952.0" y2="947.0" stroke="#ffffff" stroke-width="3.00" />
<line x1="968.0" y1="893.0" x2="968.0" y2="947.0" stroke="#ffffff" stroke-width="3.00" />
<line x1="1222.4" y1="908.0" x2="1222.4" y2="966.3" stroke="#ffffff" stroke-width="3.00" />
<line x1="1488.0" y1="782.0" x2="1488.0" y2="968.0" stroke="#ffffff" stroke-width="3.00" />
<line x1="1477.7" y1="780.0" x2="1477.7" y2="1030.0" stroke="#ffffff" stroke-width="3.00" />
<line x1="1222.9" y1="911.0" x2="1222.9" y2="966.7" stroke="#ffffff" stroke-width="3.00" />
<rect x="1362" y="893" width="14" height="6" rx="3" fill="none" stroke="#ffffff" stroke-width="1.5"/>
<rect x="1432" y="901" width="14" height="6" rx="3" fill="none" stroke="#ffffff" stroke-width="1.5"/>
<path d="M754.0,610.0 L1086.0,791.0" stroke="#ffffff" stroke-width="8.50" fill="none" stroke-linecap="round"/>
<path d="M754.0,610.0 L1086.0,791.0" stroke="#e4e4dc" stroke-width="4.50" fill="none" stroke-linecap="round"/>
<path d="M641.0,664.0 L852.0,777.0" stroke="#ffffff" stroke-width="8.50" fill="none" stroke-linecap="round"/>
<path d="M641.0,664.0 L852.0,777.0" stroke="#e4e4dc" stroke-width="4.50" fill="none" stroke-linecap="round"/>
<path d="M658.0,747.0 L919.0,669.0" stroke="#ffffff" stroke-width="8.50" fill="none" stroke-linecap="round"/>
<path d="M658.0,747.0 L919.0,669.0" stroke="#e4e4dc" stroke-width="4.50" fill="none" stroke-linecap="round"/>
<path d="M660.0,838.0 L1090.0,709.0" stroke="#ffffff" stroke-width="8.50" fill="none" stroke-linecap="round"/>
<path d="M660.0,838.0 L1090.0,709.0" stroke="#e4e4dc" stroke-width="4.50" fill="none" stroke-linecap="round"/>
<path d="M1117.0,700.0 L1233.0,748.5" stroke="#ffffff" stroke-width="8.50" fill="none" stroke-linecap="round"/>
<path d="M1117.0,700.0 L1233.0,748.5" stroke="#e4e4dc" stroke-width="4.50" fill="none" stroke-linecap="round"/>
<path d="M1300.0,698.0 L1562.0,810.0" stroke="#ffffff" stroke-width="8.50" fill="none" stroke-linecap="round"/>
<path d="M1300.0,698.0 L1562.0,810.0" stroke="#e4e4dc" stroke-width="4.50" fill="none" stroke-linecap="round"/>
<path d="M1574.0,729.0 L1338.0,832.0" stroke="#ffffff" stroke-width="8.50" fill="none" stroke-linecap="round"/>
<path d="M1574.0,729.0 L1338.0,832.0" stroke="#e4e4dc" stroke-width="4.50" fill="none" stroke-linecap="round"/>
<path d="M1488.0,876.0 L1552.0,890.0" stroke="#ffffff" stroke-width="8.50" fill="none" stroke-linecap="round"/>
<path d="M1488.0,876.0 L1552.0,890.0" stroke="#e4e4dc" stroke-width="4.50" fill="none" stroke-linecap="round"/>
<polygon points="1090.0,812.0 1463.0,657.0 1466.0,664.0 1134.0,806.0" fill="#e4e4dc" stroke="#ffffff" stroke-width="2.5"/>
<polygon points="722.0,842.0 1088.0,708.0 1092.0,716.0 742.0,846.0" fill="#e4e4dc" stroke="#ffffff" stroke-width="2.5"/>
<polygon points="1100.0,615.3 1114.4,615.3 1114.4,710.2 1100.0,710.2" fill="#e4e4dc" stroke="#ffffff" stroke-width="2.5"/>
<line x1="1107.0" y1="617.0" x2="1107.0" y2="708.0" stroke="#ffffff" stroke-width="1.50" />
<polygon points="880.0,682.0 1086.0,790.0 1086.0,810.0 868.0,694.7" fill="#bdbdd0" stroke="#ffffff" stroke-width="2.5"/>
<polygon points="1107.6,711.7 1213.0,757.7 1201.0,770.0 1094.5,724.0" fill="#bdbdd0" stroke="#ffffff" stroke-width="2.5"/>
<polygon points="1326.4,716.3 1463.0,777.0 1451.0,789.0 1314.2,727.0" fill="#bdbdd0" stroke="#ffffff" stroke-width="2.5"/>
<polygon points="825.7,801.8 1086.4,819.7 1086.4,881.0 825.7,864.7" fill="#d65c52" stroke="#ffffff" stroke-width="2.6"/>
<polygon points="1092.3,819.0 1351.7,837.0 1351.7,901.6 1092.3,885.4" fill="#d65c52" stroke="#ffffff" stroke-width="2.6"/>
<polygon points="825.7,864.7 1086.4,881.0 1073.0,894.7 810.7,876.7" fill="#d65c52" stroke="#ffffff" stroke-width="2.6"/>
<polygon points="1092.3,885.4 1351.7,901.6 1338.5,914.9 1077.3,896.0" fill="#d65c52" stroke="#ffffff" stroke-width="2.6"/>
<polygon points="1085.4,710.0 1093.0,710.0 1093.0,1003.0 1085.4,1003.0" fill="#d8d8d2" stroke="#ffffff" stroke-width="2.5"/>
<polygon points="722.0,738.8 737.0,738.8 737.0,817.7 722.0,828.7" fill="#5e5cbe" stroke="#ffffff" stroke-width="2.6"/>
<polygon points="722.0,836.0 737.0,836.0 737.0,844.7 722.0,855.7" fill="#5e5cbe" stroke="#ffffff" stroke-width="2.6"/>
<polygon points="722.0,864.7 737.0,864.7 737.0,916.6 722.0,927.6" fill="#5e5cbe" stroke="#ffffff" stroke-width="2.6"/>
<polygon points="722.0,934.6 732.7,934.6 732.7,964.3 722.0,975.3" fill="#5e5cbe" stroke="#ffffff" stroke-width="2.6"/>
<polygon points="737.0,936.7 752.0,936.7 752.0,957.9 737.0,968.9" fill="#5e5cbe" stroke="#ffffff" stroke-width="2.6"/>
<polygon points="856.8,699.0 871.8,699.0 871.8,778.0 856.8,789.0" fill="#5e5cbe" stroke="#ffffff" stroke-width="2.6"/>
<polygon points="824.7,881.0 839.7,881.0 839.7,925.7 824.7,936.7" fill="#5e5cbe" stroke="#ffffff" stroke-width="2.6"/>
<polygon points="955.3,889.7 969.0,889.7 969.0,934.3 955.3,945.3" fill="#5e5cbe" stroke="#ffffff" stroke-width="2.6"/>
<polygon points="1092.3,900.4 1105.0,900.4 1105.0,942.9 1092.3,953.9" fill="#5e5cbe" stroke="#ffffff" stroke-width="2.6"/>
<polygon points="1070.9,958.0 1083.7,958.0 1083.7,990.0 1070.9,1001.0" fill="#5e5cbe" stroke="#ffffff" stroke-width="2.6"/>
<polygon points="1092.3,962.0 1105.0,962.0 1105.0,992.0 1092.3,1003.0" fill="#5e5cbe" stroke="#ffffff" stroke-width="2.6"/>
<polygon points="1111.6,962.4 1124.4,962.4 1124.4,992.0 1111.6,1003.0" fill="#5e5cbe" stroke="#ffffff" stroke-width="2.6"/>
<polygon points="1259.0,913.0 1272.0,913.0 1272.0,955.7 1259.0,966.7" fill="#5e5cbe" stroke="#ffffff" stroke-width="2.6"/>
<polygon points="1324.0,737.8 1339.4,737.8 1339.4,818.6 1324.0,829.6" fill="#5e5cbe" stroke="#ffffff" stroke-width="2.6"/>
<polygon points="1355.6,823.3 1370.5,823.3 1370.5,874.4 1355.6,885.4" fill="#5e5cbe" stroke="#ffffff" stroke-width="2.6"/>
<polygon points="1458.3,780.5 1475.5,780.5 1475.5,1017.8 1458.3,1028.8" fill="#5e5cbe" stroke="#ffffff" stroke-width="2.6"/>
<polygon points="1443.3,986.0 1456.0,986.0 1456.0,1017.8 1443.3,1028.8" fill="#5e5cbe" stroke="#ffffff" stroke-width="2.6"/>
<polygon points="1717.0,496.5 2097.5,190.0 2126.0,190.0 1746.0,499.0 1746.0,1489.0 1717.0,1489.0" fill="#d8d8d2" />
<polygon points="1746.0,499.0 2126.0,190.0 2422.0,190.0 2422.0,939.0 1746.0,1489.0" fill="#5e5cbe" />
<g stroke="#ffffff" stroke-width="2.6" fill="none">
<line x1="1717.0" y1="496.5" x2="2097.5" y2="190.0" stroke="#ffffff" stroke-width="2.60" />
<line x1="1717.0" y1="496.5" x2="1717.0" y2="1489.0" stroke="#ffffff" stroke-width="2.60" />
<line x1="1746.0" y1="499.0" x2="1746.0" y2="1489.0" stroke="#ffffff" stroke-width="2.60" />
<line x1="1746.0" y1="1489.0" x2="2422.0" y2="939.0" stroke="#ffffff" stroke-width="2.60" />
<line x1="1717.0" y1="1489.0" x2="1746.0" y2="1489.0" stroke="#ffffff" stroke-width="2.60" />
</g>
<line x1="1746.0" y1="499.0" x2="2126.0" y2="190.0" stroke="#f0f0ff" stroke-width="1.20" />
<line x1="2417.0" y1="190.0" x2="2417.0" y2="945.0" stroke="#ffffff" stroke-width="2.50" />
<line x1="2424.0" y1="190.0" x2="2424.0" y2="939.0" stroke="#ffffff" stroke-width="2.50" />
<line x1="1690.0" y1="990.0" x2="1750.0" y2="940.0" stroke="#5ad05a" stroke-width="1.20" />
<line x1="1717.0" y1="968.0" x2="1832.0" y2="976.0" stroke="#e06060" stroke-width="1.20" />
<line x1="1717.0" y1="860.0" x2="1717.0" y2="1030.0" stroke="#6a6aff" stroke-width="1.20" />
<rect x="1713" y="964" width="8" height="8" fill="none" stroke="#ffffff" stroke-width="1.2"/>
<g>
<ellipse cx="2368" cy="358" rx="75" ry="21" fill="none" stroke="#ffffff" stroke-width="8" opacity="0.17"/>
<polygon points="2331,296 2390,298 2390,358 2331,355" fill="#c2bfdc" stroke="#6a6a90" stroke-width="1" stroke-dasharray="5 2"/>
<polygon points="2331,296 2350,286 2403,288 2390,298" fill="#cdcae4" stroke="#6a6a90" stroke-width="1" stroke-dasharray="5 2"/>
<polygon points="2390,298 2403,288 2403,345 2390,358" fill="#b6b3d4" stroke="#6a6a90" stroke-width="1" stroke-dasharray="5 2"/>
<rect x="2343" y="308" width="37" height="37" fill="#b9b6d6"/>
<text x="2360" y="334" font-family="Liberation Sans" font-size="15" font-weight="bold" fill="#5c5a86" text-anchor="middle" transform="translate(2360 0) scale(0.82 1) translate(-2360 0)">FRONT</text>
<text x="0" y="0" font-family="Liberation Sans" font-size="15" font-weight="bold" font-style="italic" fill="#d8d8ec" transform="translate(2292 350) scale(1.3 0.55)">W</text>
<text x="0" y="0" font-family="Liberation Sans" font-size="15" font-weight="bold" font-style="italic" fill="#d8d8ec" transform="translate(2434 364) scale(1.3 0.55)">E</text>
<text x="0" y="0" font-family="Liberation Sans" font-size="15" font-weight="bold" font-style="italic" fill="#d8d8ec" transform="translate(2334 383) scale(1.3 0.6)">S</text>
<rect x="2340" y="427" width="58" height="20" rx="5" fill="#a3a1e0" opacity="0.9"/>
<text x="2346" y="442" font-family="Liberation Sans" font-size="12.5" fill="#6a6a90">WCS</text>
<polygon points="2382,436 2391,436 2386.5,441" fill="none" stroke="#c8c8ee" stroke-width="1"/>
<rect x="2426" y="478" width="39" height="258" rx="4" fill="#6a6e78" opacity="0.6" stroke="#7a7d86" stroke-width="1"/>
<g stroke="#7e828c" stroke-width="1.6" fill="none">
<circle cx="2446" cy="514" r="10"/><circle cx="2446" cy="514" r="5"/>
<path d="M2439,575 L2439,560 M2443,573 L2443,555 M2447,573 L2447,556 M2451,574 L2451,560 Q2455,566 2450,580 L2440,580 Z"/>
<path d="M2436,588 L2452,604 M2452,588 L2436,604"/><circle cx="2453" cy="604" r="4"/>
<path d="M2446,632 L2446,660 M2436,646 Q2446,654 2456,646"/>
<rect x="2436" y="695" width="18" height="14"/><path d="M2442,698 L2449,702 L2442,706 Z"/>
</g>
<path d="M2426,680 L2468,684 M2426,686 L2468,690 M2426,692 L2468,696" stroke="#c8c800" stroke-width="1" opacity="0.8"/>
<path d="M2446,540 L2446,543 M2446,628 L2446,625 M2446,684 L2446,687" stroke="#8a8d96" stroke-width="2"/>
<rect x="2395" y="208" width="13" height="5" fill="#ffffff" stroke="#333" stroke-width="0.8"/>
<rect x="2419" y="206" width="9" height="9" fill="none" stroke="#ffffff" stroke-width="2"/>
<path d="M2422,203 L2432,203 L2432,212" fill="none" stroke="#ffffff" stroke-width="2"/>
<path d="M2446,204 L2456,214 M2456,204 L2446,214" stroke="#ffffff" stroke-width="2.6"/>
</g>
</g>
</svg>
<!--/SCENE-->

<!-- ===== Chrome ===== -->
<div class="a" style="left:0;top:0;width:2480px;height:7px;background:linear-gradient(90deg,#24448a 0%,#3a62b0 50%,#6a90d4 100%)"></div>
<div class="a" style="left:0;top:6px;width:2471px;height:1px;background:#8aa8e0"></div>
<div class="a" style="left:1778px;top:0;width:543px;height:8px;background:#474747"></div>
<div class="a" style="left:1796px;top:0;width:218px;height:7px;background:#6c6c6c;border:1px solid #3a3a3a;border-top:none"></div>
<svg class="a" style="left:1760px;top:0" width="720" height="8" viewBox="1760 0 720 8">
 <path d="M2020,0 L2020,6 L2026,6 L2026,0 M2031,0 L2031,6 L2037,6 L2037,0" stroke="#f0f0f0" stroke-width="2" fill="none"/>
 <path d="M2050,6 L2068,6 L2062,0" stroke="#f0f0f0" stroke-width="2" fill="none"/>
 <path d="M2089,3 L2089,6 L2085,7" stroke="#e8a040" stroke-width="1.5" fill="none"/>
 <rect x="2197" y="0" width="8" height="4" fill="#1a2a6a"/><rect x="2212" y="0" width="8" height="4" fill="#1a2a6a"/><rect x="2232" y="0" width="10" height="3" fill="#1a2a6a"/>
 <line x1="2270" y1="0" x2="2270" y2="7" stroke="#6a6a6a" stroke-width="1"/>
 <path d="M2285,0 Q2291,6 2298,0" stroke="#f0f0f0" stroke-width="2.5" fill="none"/>
</svg>
<div class="a" style="left:2470px;top:0;width:10px;height:1665px;background:linear-gradient(90deg,#5a80c8 0%,#c4d2ee 30%,#dce4f4 60%,#9ab4e4 100%)"></div><div class="a" style="left:2470px;top:0;width:2px;height:1665px;background:#2a3a5a;opacity:.5"></div><div class="a" style="left:2473px;top:421px;width:5px;height:1244px;background:#2e52a8"></div>
<!-- menu bar -->
<div class="a" style="left:0;top:7px;width:2471px;height:27px;background:#535353;border-top:2px solid #2e2e2e;border-bottom:1px solid #2c2c2c"></div>
<div class="mt" style="left:24px">Add-ins</div>
<div class="mt" style="left:100px">A360</div>
<div class="mt" style="left:156px">Express Tools</div>
<div class="mt" style="left:265px">Featured Apps</div>
<div class="mt" style="left:383px">BIM 360</div>
<div class="mt" style="left:459px">Performance</div>
<!-- ribbon -->
<div class="a" style="left:0;top:34px;width:2471px;height:119px;background:linear-gradient(180deg,#4d4d4d,#373737)"></div>
<div class="a" style="left:0;top:34px;width:895px;height:119px;background:#585858"></div>
<div class="a" style="left:0;top:131px;width:895px;height:21px;background:linear-gradient(180deg,#474747,#424242)"></div>
<div class="a" style="left:0;top:151px;width:2466px;height:2px;background:#2a2a2a"></div><div class="a" style="left:0;top:153px;width:2466px;height:2px;background:#8a8a8a"></div>
<div class="a" style="left:0;top:154px;width:2471px;height:32px;background:#393939"></div>
<div class="a" style="left:0;top:186px;width:2471px;height:4px;background:#5c5c5c"></div>

<!-- ribbon panels content -->
<div class="sep" style="left:25px"></div>
<div class="sep" style="left:307px"></div>
<div class="sep" style="left:416px"></div>
<div class="sep" style="left:509px"></div>
<div class="sep" style="left:724px"></div>
<div class="sep" style="left:893px"></div>
<div class="rt" style="left:-1px;top:75px">act</div>
<div class="rt" style="left:-1px;top:104px">ect</div>
<div class="rt" style="left:61px;top:46px">Blend</div>
<div class="rt" style="left:61px;top:75px">Patch</div>
<div class="rt" style="left:61px;top:104px">Network</div>
<div class="rt" style="left:154px;top:46px">Offset</div>
<div class="rt" style="left:154px;top:75px">Extend</div>
<div class="rt" style="left:154px;top:104px">Fillet</div>
<div class="rt" style="left:234px;top:46px">Trim</div>
<div class="rt" style="left:234px;top:75px">Planar</div>
<div class="rt" style="left:234px;top:104px">Thicken</div>
<div class="rt ctr" style="left:298px;width:100px;top:87px">Convert</div>
<div class="rt ctr" style="left:298px;width:100px;top:105px">To Mesh</div>
<div class="rt ctr" style="left:414px;width:100px;top:87px">Section</div>
<div class="rt ctr" style="left:414px;width:100px;top:105px">Plane</div>
<div class="a" style="left:518px;top:40px;width:54px;height:87px;background:linear-gradient(180deg,#7594c6,#4d6a98);border:1px solid #33507e"></div>
<div class="rt ctr" style="left:495px;width:100px;top:87px">Culling</div>
<div class="rt ctr" style="left:563px;width:100px;top:87px">No Filter</div>
<div class="rt ctr" style="left:638px;width:100px;top:87px">Move</div>
<div class="rt ctr" style="left:638px;width:100px;top:105px">Gizmo</div>
<div class="rt ctr" style="left:701px;width:100px;top:87px">World</div>
<div class="rt ctr" style="left:748px;width:100px;top:87px">X</div>
<div class="rt ctr" style="left:806px;width:100px;top:87px">3 Point</div>
<div class="pt" style="left:131px">Surfaces</div>
<div class="pt" style="left:329px">Mesh</div>
<div class="pt" style="left:424px">Section</div>
<div class="pt" style="left:588px">Selection</div>
<div class="pt" style="left:764px">Coordinates</div>
<svg class="a" style="left:0;top:0" width="900" height="160" viewBox="0 0 900 160">
 <g fill="#f0f0f0">
  <polygon points="272,52 279,52 275.5,56"/>
  <polygon points="292,111 299,111 295.5,115"/>
  <polygon points="193,141 202,141 197.5,146"/>
  <polygon points="372,141 381,141 376.5,146"/>
  <polygon points="480,141 489,141 484.5,146"/>
  <polygon points="609.5,107 616,107 612.7,111"/>
  <polygon points="712.5,104 719,104 715.7,108"/>
  <polygon points="794.5,107 801,107 797.7,111"/>
  <polygon points="853,107 859.5,107 856.2,111"/>
  <polygon points="602.7,21 609,21 605.8,25"/>
 </g>
 <g stroke="#e8e8e8" stroke-width="1.3" fill="none">
  <path d="M404,140 L411,147 M411,142 L411,147 L406,147"/>
  <path d="M497,140 L504,147 M504,142 L504,147 L499,147"/>
  <path d="M883,140 L890,147 M890,142 L890,147 L885,147"/>
 </g>
 <rect x="580" y="17" width="17" height="9" rx="3" fill="#e8e8e8"/>
 <polygon points="584,23 588.5,19 593,23" fill="#333"/>
</svg>

<svg class="a" style="left:0;top:0" width="900" height="160" viewBox="0 0 900 160">
 <defs>
  <linearGradient id="gb" x1="0" y1="0" x2="0" y2="1"><stop offset="0" stop-color="#d6e6fa"/><stop offset="1" stop-color="#8fb5e8"/></linearGradient>
  <radialGradient id="gs" cx="0.4" cy="0.35" r="0.7"><stop offset="0" stop-color="#ffffff"/><stop offset="1" stop-color="#9a9a9a"/></radialGradient>
 </defs>
 <!-- partial icon far left -->
 <rect x="0" y="50" width="3" height="8" fill="#d08050"/>
 <!-- Blend -->
 <path d="M36,55 L42,47 L52,51 L55,55 L49,62 L45,58 Z" fill="url(#gb)" stroke="#1c2f60" stroke-width="1.4"/>
 <path d="M37,54 L42,48 M48,61 L54,55" stroke="#fff" stroke-width="1.5"/>
 <!-- Patch -->
 <path d="M38,76 Q44,72 51,76 L51,90 Q44,93 38,90 Z" fill="#e8e8ea" stroke="#1a1a1a" stroke-width="1.3"/>
 <path d="M38,76 Q44,72 51,76 L51,81 Q44,84 38,81 Z" fill="#7aa6e0" stroke="#1c2f60" stroke-width="1"/>
 <!-- Network -->
 <path d="M36,114 Q38,105 45,105 Q53,106 54,114 Q45,121 36,114 Z" fill="#e6e6e6" stroke="#2a2a2a" stroke-width="1.3"/>
 <path d="M45,105 L44,120 M37,112 L53,110" stroke="#444" stroke-width="1"/>
 <!-- Offset -->
 <path d="M131,53 L138,45 Q147,45 148,52 L142,61 Z" fill="url(#gb)" stroke="#1c2f60" stroke-width="1.4"/>
 <path d="M130,54 L137,60" stroke="#fff" stroke-width="2.5"/>
 <!-- Extend -->
 <path d="M134,79 L137,75 L148,75 L144,80 Z" fill="#e4e4e4" stroke="#1a1a1a" stroke-width="1.2"/>
 <path d="M128,87 L132,82 L143,82 L139,87 Z" fill="#a6c6ee" stroke="#1c2f60" stroke-width="1.2"/>
 <path d="M146,85 L141,90 M141,87 L141,90 L144,90" stroke="#ddd" stroke-width="1"/>
 <!-- Fillet -->
 <path d="M133,106 Q146,103 148,113 L145,121 Q143,112 138,108 Z" fill="url(#gb)" stroke="#1c2f60" stroke-width="1.4"/>
 <path d="M129,107 L135,105" stroke="#fff" stroke-width="2.5"/>
 <!-- Trim -->
 <rect x="209" y="45" width="18" height="17" fill="#bcd6f6" stroke="#1c2f60" stroke-width="1.6"/>
 <circle cx="218" cy="53.5" r="3.8" fill="none" stroke="#1c2f60" stroke-width="1.3"/>
 <path d="M218,48 L218,59 M212.5,53.5 L223.5,53.5" stroke="#444" stroke-width="0.8"/>
 <!-- Planar -->
 <path d="M210,86 L218,75 L228,78 L221,89 Z" fill="#d4d4d4" stroke="#2a2a2a" stroke-width="1.2"/>
 <path d="M213,82 L224,84 M215,79 L225,81 M216,87 L222,77" stroke="#999" stroke-width="0.8"/>
 <!-- Thicken -->
 <path d="M209,115 L219,105 L228,109 L219,119 Z" fill="#e4e4e4" stroke="#1a1a1a" stroke-width="1.2"/>
 <path d="M209,115 L219,119 L228,109 L228,112 L219,122 L209,118 Z" fill="#7aa6e0" stroke="#1c2f60" stroke-width="1"/>
 <!-- Convert to mesh sphere -->
 <circle cx="347.5" cy="61.5" r="17.5" fill="url(#gs)" stroke="#222" stroke-width="1.5"/>
 <path d="M330,64 Q347,58 365,64" stroke="#666" stroke-width="1" fill="none"/>
 <path d="M338,46 L338,64 M357,46 L357,64 M331,53 L364,53" stroke="#777" stroke-width="1.2"/>
 <rect x="341" y="53" width="12" height="11" fill="#bfbfbf"/>
 <!-- small spheres -->
 <circle cx="400" cy="53" r="8.5" fill="url(#gs)" stroke="#222" stroke-width="1.2"/>
 <path d="M392,51 L408,51 M392,55 L408,55 M397,45 L397,61 M403,45 L403,61" stroke="#666" stroke-width="0.8"/>
 <path d="M406,60 L411,60 M408.5,57.5 L408.5,62.5" stroke="#3cb02c" stroke-width="2.5"/>
 <circle cx="400" cy="82" r="8.5" fill="url(#gs)" stroke="#222" stroke-width="1.2"/>
 <path d="M392,80 L408,80 M392,84 L408,84 M397,74 L397,90 M403,74 L403,90" stroke="#666" stroke-width="0.8"/>
 <path d="M404,89 L410,89" stroke="#e02020" stroke-width="2.5"/>
 <circle cx="400" cy="111" r="8.5" fill="url(#gs)" stroke="#222" stroke-width="1.2"/>
 <path d="M391,120 L409,102" stroke="#ccc" stroke-width="1.2"/>
 <path d="M397,103 L397,118 M392,108 L408,108" stroke="#666" stroke-width="0.8"/>
 <!-- Section plane -->
 <path d="M449,62 L456,56 L470,56 L470,70 L449,70 Z" fill="#eeeeee" stroke="#1a1a1a" stroke-width="1.3"/>
 <path d="M467,61 L482,45 L482,72 L467,79 Z" fill="#c8c8c8" stroke="#1a1a1a" stroke-width="1.3"/>
 <path d="M470,62 L479,53 L479,69 L470,74 Z" fill="#a6c6ee" stroke="#1c2f60" stroke-width="1"/>
 <!-- Culling -->
 <path d="M527,52 L535,45 L562,45 L562,70 L555,79 L527,79 Z" fill="#e6e6e6" stroke="#1a1a1a" stroke-width="1.3"/>
 <path d="M527,52 L555,52 L562,45 M555,52 L555,79 M527,66 L555,66 M541,52 L541,79 M528,78 L561,46" stroke="#222" stroke-width="1.2" fill="none"/>
 <path d="M530,49 L560,49 M533,56 L533,75 M547,47 L547,66 M527,60 L556,60" stroke="#5a9af0" stroke-width="1.2"/>
 <!-- No Filter -->
 <path d="M598,52 L605,45 L631,45 L631,72 L624,79 L598,79 Z" fill="#cfe0f6" stroke="#1a1a1a" stroke-width="1.3"/>
 <path d="M598,52 L624,52 L631,45 M624,52 L624,79" stroke="#1a1a1a" stroke-width="1" fill="none"/>
 <rect x="599" y="51" width="25" height="3" fill="#3a8ae8"/>
 <rect x="596" y="76" width="5" height="5" fill="#3a8ae8"/>
 <!-- Move gizmo -->
 <path d="M672,54 L687,46 L702,54 L702,72 L687,80 L672,72 Z" fill="none" stroke="#e0e0e0" stroke-width="1.2"/>
 <path d="M687,46 L687,63 M687,63 L673,70 M687,63 L702,70" stroke="#5a9af0" stroke-width="1.3"/>
 <path d="M687,63 L673,70" stroke="#30b030" stroke-width="1.5"/>
 <path d="M687,63 L702,70" stroke="#e04020" stroke-width="1.5"/>
 <rect x="684" y="44" width="6" height="5" fill="none" stroke="#5a9af0" stroke-width="1.2"/>
 <rect x="684" y="60" width="6" height="5" fill="none" stroke="#fff" stroke-width="1.2"/>
 <rect x="670" y="68" width="5" height="5" fill="none" stroke="#30b030" stroke-width="1.2"/>
 <rect x="700" y="68" width="5" height="5" fill="none" stroke="#e04020" stroke-width="1.2"/>
 <!-- World -->
 <path d="M737,48 L737,76 L765,76 M735,51 L737,47 L739,51 M762,74 L766,76 L762,78 M737,76 L752,61" stroke="#e6e6e6" stroke-width="1.5" fill="none"/>
 <circle cx="758" cy="54" r="8" fill="#7ab8d8" stroke="#1a1a1a" stroke-width="1.2"/>
 <path d="M753,52 Q757,49 760,53 Q758,58 755,56 Z" fill="#3a8a4a"/>
 <!-- X -->
 <path d="M784,48 L784,76 M782,51 L784,47 L786,51 M784,76 L812,76 M809,74 L813,76 L809,78" stroke="#e6e6e6" stroke-width="1.5" fill="none"/>
 <path d="M793,60 Q794,51 803,51 M800,48 L804,51 L800,54" stroke="#e6e6e6" stroke-width="2" fill="none"/>
 <path d="M800,60 L807,70 M807,60 L800,70" stroke="#4a90e8" stroke-width="1.6"/>
 <!-- 3 Point -->
 <path d="M842,48 L842,76 L871,76 M840,51 L842,47 L844,51 M868,74 L872,76 L868,78 M842,76 L860,58" stroke="#e6e6e6" stroke-width="1.5" fill="none"/>
 <text x="861" y="58" font-size="14" fill="#5a9af0" font-family="Liberation Sans">3</text>
</svg>

<!-- command history -->
<div class="a" style="left:85px;top:1537px;width:73px;height:17px;background:#4b4e53;border-radius:2px"></div>
<div class="a" style="left:85px;top:1557px;width:73px;height:17px;background:#4b4e53;border-radius:2px"></div>
<div class="a" style="left:85px;top:1577px;width:73px;height:17px;background:#4b4e53;border-radius:2px"></div>
<div class="a" style="left:88px;top:1538px;font:13.5px 'Liberation Mono',monospace;color:#e8e8e8;line-height:16px;letter-spacing:0">Command:</div>
<div class="a" style="left:88px;top:1558px;font:13.5px 'Liberation Mono',monospace;color:#e8e8e8;line-height:16px;letter-spacing:0">Command:</div>
<div class="a" style="left:88px;top:1578px;font:13.5px 'Liberation Mono',monospace;color:#e8e8e8;line-height:16px;letter-spacing:0">Command:</div>
<!-- command bar -->
<div class="a" style="left:16px;top:1596px;width:66px;height:33px;background:linear-gradient(180deg,#5a5a5a,#3e3e3e);border-radius:3px 0 0 0"></div>
<div class="a" style="left:82px;top:1596px;width:1774px;height:33px;background:#c0c0c2;border-radius:0 3px 0 0"></div>
<svg class="a" style="left:0;top:1590px" width="1900" height="75" viewBox="0 1590 1900 75">
 <g fill="#9a9a9a"><rect x="22" y="1601" width="2" height="2"/><rect x="26" y="1601" width="2" height="2"/><rect x="22" y="1605" width="2" height="2"/><rect x="26" y="1605" width="2" height="2"/><rect x="22" y="1609" width="2" height="2"/><rect x="26" y="1609" width="2" height="2"/><rect x="22" y="1613" width="2" height="2"/><rect x="26" y="1613" width="2" height="2"/><rect x="22" y="1617" width="2" height="2"/><rect x="26" y="1617" width="2" height="2"/><rect x="22" y="1621" width="2" height="2"/><rect x="26" y="1621" width="2" height="2"/></g>
 <path d="M35,1606 L45,1616 M45,1606 L35,1616" stroke="#e0e0e0" stroke-width="2"/>
 <path d="M63,1611 L74,1622" stroke="#d8d8d8" stroke-width="3" fill="none"/><circle cx="62" cy="1609" r="4" fill="none" stroke="#d8d8d8" stroke-width="2.2"/>
 <rect x="89" y="1605" width="16" height="15" rx="2" fill="#9fa3a8" stroke="#5a5e66" stroke-width="1"/>
 <path d="M92,1609 L96,1612 L92,1615 M97,1616 L102,1616" stroke="#2a2e36" stroke-width="1.2" fill="none"/>
 <polygon points="110,1611 116,1611 113,1614" fill="#555"/>
 <polygon points="1840,1614 1849,1614 1844.5,1609" fill="#222"/>
 <line x1="1578" y1="1596" x2="1542" y2="1628" stroke="#dcdcdc" stroke-width="1.2"/>
 <rect x="82" y="1596" width="1774" height="1" fill="#d8d8d8"/>
 <text x="127" y="1617" font-family="Liberation Mono" font-style="italic" font-size="14" fill="#8c8c8c">Type a command</text>
</svg>
<!-- status bar -->
<div class="a" style="left:0;top:1629px;width:2471px;height:36px;background:#3b3b3b"></div>
<div class="a" style="left:0;top:1632px;width:30px;height:22px;background:linear-gradient(180deg,#5a5a5a,#4a4a4a);border-radius:0 0 6px 0;transform:skewX(-20deg);transform-origin:0 0"></div>
<div class="a" style="left:40px;top:1632px;width:24px;height:22px;background:#4a4a4a;border-radius:0 0 6px 6px;transform:skewX(-20deg)"></div>
<div class="a" style="left:-2px;top:1634px;font-size:15px;color:#e6e6e6;letter-spacing:-0.5px">ES</div>
<div class="a" style="left:45px;top:1632px;font-size:18px;color:#e6e6e6;font-weight:bold">+</div>
<div class="a" style="left:1687px;top:1630px;width:784px;height:35px;background:#454545"></div>
<div class="a" style="left:1690px;top:1631px;width:59px;height:32px;background:#4e4e4e;border:1px solid #7c7c7c"></div>
<div class="a" style="left:1751px;top:1631px;width:79px;height:32px;background:#4e4e4e;border:1px solid #7c7c7c"></div>
<div class="a" style="left:1832px;top:1631px;width:124px;height:32px;background:#4e4e4e;border:1px solid #7c7c7c"></div>
<div class="a" style="left:1958px;top:1631px;width:77px;height:32px;background:#4e4e4e;border:1px solid #7c7c7c"></div>
<div class="a" style="left:2037px;top:1631px;width:135px;height:32px;background:#4e4e4e;border:1px solid #7c7c7c"></div>
<div class="a" style="left:2174px;top:1631px;width:47px;height:32px;background:#4e4e4e;border:1px solid #7c7c7c"></div>
<div class="a" style="left:2224px;top:1631px;width:30px;height:32px;background:#4e4e4e;border:1px solid #7c7c7c"></div>
<div class="a" style="left:2255px;top:1631px;width:30px;height:32px;background:#4e4e4e;border:1px solid #7c7c7c"></div>
<div class="a" style="left:2288px;top:1631px;width:31px;height:32px;background:#4e4e4e;border:1px solid #7c7c7c"></div>
<div class="a" style="left:2321px;top:1631px;width:85px;height:32px;background:#4e4e4e;border:1px solid #7c7c7c"></div>
<div class="a" style="left:2408px;top:1631px;width:61px;height:32px;background:#4e4e4e;border:1px solid #7c7c7c"></div>
<div class="a" style="left:1695px;top:1638px;font-size:14.5px;color:#f2f2f2;letter-spacing:-0.4px;-webkit-text-stroke:0.4px #f2f2f2">MODEL</div>
<svg class="a" style="left:1680px;top:1620px" width="800" height="45" viewBox="1680 1620 800 45">
 <g fill="#d0d0d0">
  <polygon points="1814,1644 1822,1644 1818,1649"/><polygon points="1895,1644 1903,1644 1899,1649"/>
  <polygon points="1943,1644 1951,1644 1947,1649"/><polygon points="2021,1644 2029,1644 2025,1649"/>
  <polygon points="2158,1644 2166,1644 2162,1649"/><polygon points="2208,1644 2216,1644 2212,1649"/>
 </g>
 <g stroke="#d0d0d0" stroke-width="1.3" fill="none">
  <path d="M1758,1638 L1758,1654 M1761,1638 L1761,1654 M1764,1638 L1764,1654 M1767,1638 L1767,1654 M1770,1638 L1770,1654" stroke-dasharray="1.5 1.5"/>
  <path d="M1786,1638 L1786,1654 M1790,1638 L1790,1654 M1794,1638 L1794,1654 M1798,1638 L1798,1654" stroke-dasharray="1.2 2.8"/>
  <path d="M1840,1640 L1840,1654 L1856,1654 M1840,1649 L1845,1649 L1845,1654"/>
  <circle cx="1876" cy="1647" r="7"/><path d="M1876,1647 L1886,1645 M1876,1647 L1883,1640"/>
  <path d="M1914,1636 L1934,1656 M1924,1634 L1924,1658"/>
  <path d="M2230,1648 L2246,1648 M2238,1640 L2238,1656" stroke-width="2"/>
 </g>
 <g stroke="#3a8ef0" stroke-width="2" fill="none">
  <path d="M1962,1656 L1974,1644 M1962,1656 L1976,1656"/>
  <rect x="1994" y="1639" width="16" height="15"/>
  <path d="M2048,1656 L2056,1644 L2064,1656 M2056,1644 L2056,1650"/><circle cx="2060" cy="1641" r="3"/>
 </g>
 <rect x="1992" y="1637" width="4" height="4" fill="#20c020"/>
 <g stroke="#c8c8c8" stroke-width="2" fill="none">
  <path d="M2077,1656 L2085,1644 L2093,1656 M2085,1644 L2085,1650 M2088,1641 L2092,1644"/>
  <path d="M2107,1656 L2115,1644 L2123,1656 M2115,1644 L2115,1651"/>
 </g>
 <text x="2129" y="1653" font-family="Liberation Sans" font-size="15" fill="#e8e8e8">1:1</text>
 <circle cx="2185" cy="1648" r="6" fill="#9a9a9a" stroke="#9a9a9a" stroke-width="2" stroke-dasharray="2 1.5"/>
 <path d="M2260,1638 L2268,1638 L2268,1646 L2260,1646 Z M2264,1648 L2260,1656 L2268,1656 Z" stroke="#c8c8c8" stroke-width="1.3" fill="none"/><circle cx="2274" cy="1644" r="4" stroke="#c8c8c8" stroke-width="1.3" fill="none"/>
 <circle cx="2303" cy="1648" r="10" fill="#1a6ad0" stroke="#0a3a80" stroke-width="1"/><path d="M2299,1652 L2306,1645" stroke="#8ac0ff" stroke-width="1.5"/>
 <rect x="2327" y="1637" width="22" height="20" fill="#e8e8e8" stroke="#222" stroke-width="1.3"/><path d="M2329,1655 Q2338,1630 2347,1655" stroke="#222" fill="none" stroke-width="1.3"/><polygon points="2344,1656 2349,1648 2354,1656" fill="#f07020"/>
 <rect x="2356" y="1640" width="20" height="15" fill="#e0c040"/><rect x="2358" y="1636" width="10" height="10" fill="#a8c8e8" stroke="#335" stroke-width="1"/><path d="M2364,1652 L2368,1656 L2376,1646" stroke="#20b020" stroke-width="2" fill="none"/>
 <path d="M2386,1656 L2386,1640 L2394,1636 L2394,1656 Z" fill="#b8b8b8" stroke="#ddd" stroke-width="1"/><polygon points="2393,1656 2398,1647 2403,1656" fill="#f07020"/>
 <rect x="2417" y="1638" width="22" height="18" fill="none" stroke="#c8c8c8" stroke-width="1.3"/><path d="M2421,1652 L2435,1642 M2430,1642 L2435,1642 L2435,1646 M2421,1648 L2421,1652 L2426,1652" stroke="#d0d0d0" stroke-width="1.3" fill="none"/>
 <path d="M2447,1640 L2465,1640 M2447,1648 L2465,1648 M2447,1656 L2465,1656" stroke="#d8d8d8" stroke-width="2.2"/>
</svg>
</body></html>
